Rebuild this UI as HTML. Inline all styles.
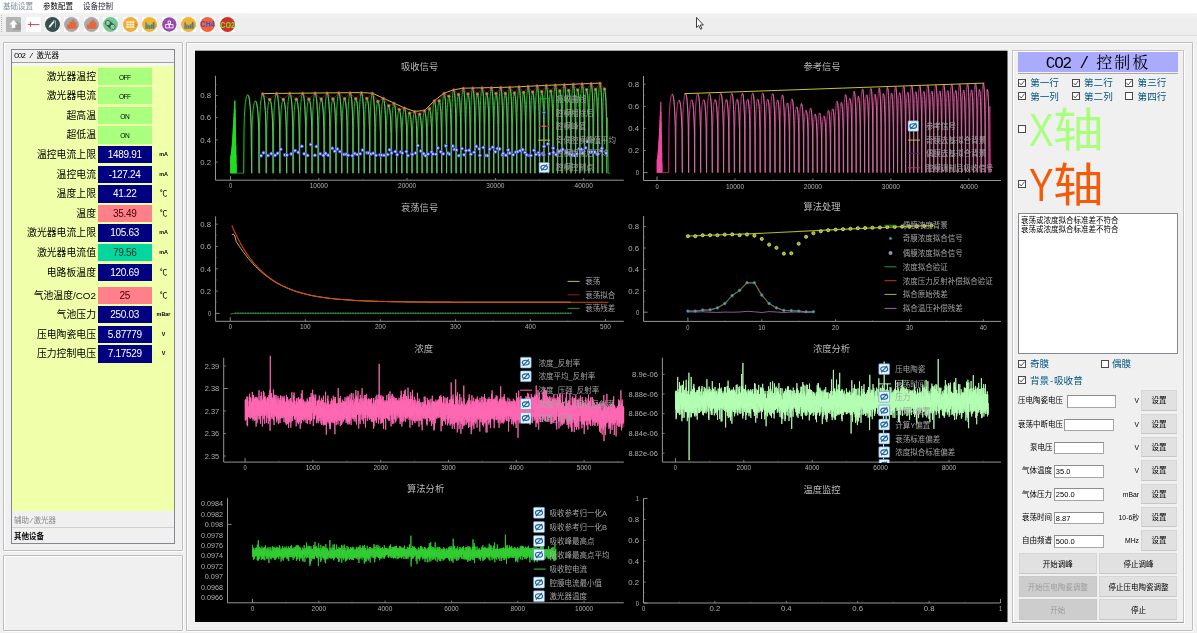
<!DOCTYPE html>
<html lang="zh"><head><meta charset="utf-8"><title>CO2</title><style>
*{box-sizing:border-box;margin:0;padding:0}
html,body{width:1197px;height:633px;overflow:hidden;background:#f0f0f0}
body{font-family:"Liberation Sans","Noto Sans CJK SC",sans-serif;color:#000;position:relative}
#root{position:absolute;left:0;top:0;width:1197px;height:633px;overflow:hidden;will-change:transform}
.a{position:absolute}
.menubar{left:0;top:0;width:1197px;height:12.5px;background:#fff}
.menu{top:0.5px;height:11px;line-height:11px;font-size:7.5px;white-space:nowrap}
.toolbar{left:0;top:12.5px;width:1197px;height:23.8px;background:linear-gradient(#f3f3f3,#eeeeee 25%,#ededed);border-bottom:1px solid #dedede}
.gb{border:1px solid #bdbdbd;box-shadow:inset 1px 1px 0 #fff, 1px 1px 0 #fff;border-radius:1px}
.tbx{border:1px solid #828790;background:#f0f0f0}
.hdr{left:12px;width:162px;height:13px;line-height:13px;font-size:7.5px;padding-left:2px;white-space:nowrap;font-family:"Liberation Mono","Noto Sans CJK SC",monospace}
.lab{right:1101px;height:17px;line-height:17px;font-size:9.85px;text-align:right;white-space:nowrap}
.val{left:97.5px;width:54.4px;height:17.3px;line-height:17.6px;text-align:center;font-size:10px;letter-spacing:-0.3px;white-space:nowrap}
.unit{left:156.5px;width:14px;height:17px;line-height:17.5px;font-size:5.4px;text-align:center;white-space:nowrap;font-weight:bold}
.navy{background:#000080;color:#fff}
.lg{background:#aaff7f;color:#000;font-size:6.6px;letter-spacing:-0.55px;line-height:19.5px}
.pk{background:#ff7f8a;color:#400}
.tl{background:#04d6a0;color:#032}
.cb{width:8px;height:8px;border:1px solid #4a4a4a;background:#fff}
.cbt{font-size:9.6px;line-height:11px;height:11px;color:#00557f;white-space:nowrap}
.btn{border:1px solid #d6d6d6;border-bottom-color:#c6c6c6;background:#e1e1e1;font-size:7.5px;text-align:center;white-space:nowrap;color:#000}
.btn.dis{color:#9a9a9a;background:#cdcdcd;border-color:#c8c8c8}
.inp{border:1px solid #a6a6a6;border-top-color:#8c8c8c;border-left-color:#949494;background:#fff;font-size:7.5px;line-height:11.4px;padding-left:1px;white-space:nowrap;height:12.6px}
.fl{font-size:7.5px;line-height:12px;height:12px;white-space:nowrap}
.fu{font-size:6.8px;line-height:12px;height:12px;white-space:nowrap;text-align:right}
</style></head><body><div id="root">
<div class="a menubar"></div>
<div class="a menu" style="left:3px;color:#7d8a9a">基础设置</div>
<div class="a menu" style="left:43px;color:#000">参数配置</div>
<div class="a menu" style="left:83px;color:#223">设备控制</div>
<div class="a toolbar"></div>
<div class="a" style="left:1px;top:15px;width:1px;height:18px;background:repeating-linear-gradient(#bbb 0 1px,transparent 1px 2px)"></div>
<svg class="a" style="left:6px;top:17px" width="15" height="15" viewBox="0 0 15 15"><rect width="15" height="15" rx="1" fill="#b4b4b4"/><path d="M7 13 L15 13 L15 7 L10 4Z" fill="#9c9c9c"/><path d="M7.5 3 L11.5 7.5 L9.3 7.5 L9.3 11 L5.7 11 L5.7 7.5 L3.5 7.5Z" fill="#fff"/></svg>
<svg class="a" style="left:25.5px;top:17px" width="15" height="15" viewBox="0 0 15 15"><rect width="15" height="15" fill="#fff"/><path d="M1.8 7.5 H13.4 M4.5 4.9 V10.1" stroke="#e02020" stroke-width="0.8" fill="none"/></svg>
<svg class="a" style="left:45px;top:17px" width="15" height="15" viewBox="0 0 15 15"><rect width="15" height="15" fill="#fff"/><circle cx="7.5" cy="7.5" r="7.5" fill="#35504e"/><path d="M3.6 11 L4.4 8.6 L8.2 3.9 L9.5 4.9 L5.7 9.8Z" fill="#fff"/><path d="M8 3.8 H10.5 V10.6" stroke="#e8eeee" stroke-width="0.6" fill="none"/></svg>
<svg class="a" style="left:64.3px;top:17px" width="15" height="15" viewBox="0 0 15 15"><rect width="15" height="15" fill="#fff"/><circle cx="7.5" cy="7.5" r="7.5" fill="#a9a9a9"/><path d="M3 11.7 L12.3 11.7 L14.6 9.5 L10 2.6Z" fill="#989898"/><rect x="2.9" y="7.5" width="2.2" height="4.2" fill="#f0683a"/><rect x="5.3" y="4.7" width="2.2" height="7" fill="#f0683a"/><rect x="7.7" y="2.6" width="2.2" height="9.1" fill="#f0683a"/><rect x="10.1" y="5.4" width="2.2" height="6.3" fill="#f0683a"/><path d="M5.2 7.5 V11.7 M7.6 4.7 V11.7 M10 5.4 V11.7" stroke="#c84a22" stroke-width="0.35"/></svg>
<svg class="a" style="left:83.8px;top:17px" width="15" height="15" viewBox="0 0 15 15"><rect width="15" height="15" fill="#fff"/><circle cx="7.5" cy="7.5" r="7.5" fill="#a9a9a9"/><path d="M3 11.7 L12.3 11.7 L14.6 9.5 L10 2.6Z" fill="#989898"/><rect x="2.9" y="7.5" width="2.2" height="4.2" fill="#f0683a"/><rect x="5.3" y="4.7" width="2.2" height="7" fill="#f0683a"/><rect x="7.7" y="2.6" width="2.2" height="9.1" fill="#f0683a"/><rect x="10.1" y="5.4" width="2.2" height="6.3" fill="#f0683a"/><path d="M5.2 7.5 V11.7 M7.6 4.7 V11.7 M10 5.4 V11.7" stroke="#c84a22" stroke-width="0.35"/></svg>
<svg class="a" style="left:103.2px;top:17px" width="15" height="15" viewBox="0 0 15 15"><rect width="15" height="15" fill="#fff"/><circle cx="7.5" cy="7.5" r="7.5" fill="#76c893"/><path d="M4.9 6.0 L9.6 9.9" stroke="#2a6446" stroke-width="5.6" stroke-linecap="round"/><circle cx="4.9" cy="6.0" r="2.1" fill="#c8ead6"/><circle cx="4.9" cy="6.0" r="1.35" fill="none" stroke="#2f6b4a" stroke-width="0.7" stroke-dasharray="0.7 0.7"/><circle cx="4.9" cy="6.0" r="0.45" fill="#2f6b4a"/><circle cx="9.6" cy="9.9" r="2.1" fill="#c8ead6"/><circle cx="9.6" cy="9.9" r="1.35" fill="none" stroke="#2f6b4a" stroke-width="0.7" stroke-dasharray="0.7 0.7"/><circle cx="9.6" cy="9.9" r="0.45" fill="#2f6b4a"/></svg>
<svg class="a" style="left:122.6px;top:17px" width="15" height="15" viewBox="0 0 15 15"><rect width="15" height="15" fill="#fff"/><circle cx="7.5" cy="7.5" r="7.5" fill="#f0ad3c"/><path d="M3.5 10.9 L11.4 10.9 L14.8 8 L11.4 4.2Z" fill="#d39327"/><rect x="3.5" y="4.2" width="7.9" height="6.7" fill="#fff4dc"/><path d="M3.5 6.45 H11.4 M3.5 8.7 H11.4 M6.15 4.2 V10.9 M8.8 4.2 V10.9" stroke="#f0ad3c" stroke-width="0.7"/></svg>
<svg class="a" style="left:142px;top:17px" width="15" height="15" viewBox="0 0 15 15"><rect width="15" height="15" fill="#fff"/><circle cx="7.5" cy="7.5" r="7.5" fill="#f0b432"/><path d="M3.2 11.7 L12.4 11.7 L14.8 9.6 L12.3 5Z" fill="#cf9a28"/><rect x="3.4" y="5.4" width="1.4" height="6.3" fill="#3f7f9a"/><rect x="5.2" y="7.5" width="1.4" height="4.2" fill="#3f7f9a"/><rect x="7.1" y="8.3" width="1.4" height="3.4" fill="#3f7f9a"/><rect x="9.1" y="7.5" width="1.4" height="4.2" fill="#3f7f9a"/><rect x="10.9" y="5" width="1.4" height="6.7" fill="#3f7f9a"/></svg>
<svg class="a" style="left:161.6px;top:17px" width="15" height="15" viewBox="0 0 15 15"><rect width="15" height="15" fill="#fff"/><circle cx="7.3" cy="7.5" r="7.2" fill="#9a46b0"/><path d="M6.1 4 H8.5 V6.9 H6.1Z M3.6 7.5 H7.3 V10.9 H3.6Z M7.3 7.5 H11 V10.9 H7.3Z" fill="none" stroke="#fff" stroke-width="0.85"/></svg>
<svg class="a" style="left:180.8px;top:17px" width="15" height="15" viewBox="0 0 15 15"><rect width="15" height="15" fill="#fff"/><circle cx="7.5" cy="7.5" r="7.5" fill="#f0b432"/><path d="M3.2 11.7 L12.4 11.7 L14.8 9.6 L12.3 5Z" fill="#cf9a28"/><rect x="3.4" y="5.4" width="1.4" height="6.3" fill="#3f7f9a"/><rect x="5.2" y="7.5" width="1.4" height="4.2" fill="#3f7f9a"/><rect x="7.1" y="8.3" width="1.4" height="3.4" fill="#3f7f9a"/><rect x="9.1" y="7.5" width="1.4" height="4.2" fill="#3f7f9a"/><rect x="10.9" y="5" width="1.4" height="6.7" fill="#3f7f9a"/></svg>
<svg class="a" style="left:200.2px;top:17px" width="15" height="15" viewBox="0 0 15 15"><rect width="15" height="15" fill="#fff"/><circle cx="7.5" cy="7.5" r="7.5" fill="#f0643c"/><text x="7.6" y="10.4" font-size="8.4" font-weight="bold" text-anchor="middle" fill="#4450c8" font-family="Liberation Sans,sans-serif" textLength="14" lengthAdjust="spacingAndGlyphs">CH4</text></svg>
<svg class="a" style="left:219.6px;top:17px" width="15" height="15" viewBox="0 0 15 15"><rect width="15" height="15" fill="#fff"/><circle cx="7.5" cy="7.5" r="7.5" fill="#d03028"/><text x="7.6" y="10.9" font-size="9.4" font-weight="bold" text-anchor="middle" fill="#70f030" font-family="Liberation Sans,sans-serif" textLength="14.6" lengthAdjust="spacingAndGlyphs">CO2</text></svg>
<svg class="a" style="left:695.6px;top:16.6px;overflow:visible" width="9" height="13" viewBox="0 0 9 13"><path d="M0.5 0.5 L0.5 10.6 L2.8 8.5 L4.5 12.2 L5.9 11.6 L4.2 8 L7.4 8 Z" fill="#fff" stroke="#111" stroke-width="0.8" stroke-linejoin="round"/></svg>
<div class="a gb" style="left:3px;top:42px;width:180px;height:509px"></div>
<div class="a gb" style="left:3px;top:555px;width:180px;height:76px"></div>
<div class="a gb" style="left:186px;top:42px;width:1007px;height:589px"></div>
<div class="a tbx" style="left:11px;top:49px;width:164px;height:495px"></div>
<div class="a hdr" style="top:50px;border-bottom:1px solid #a0a0a0;height:13px"><span style="letter-spacing:-0.75px">CO2 / </span>激光器</div>
<div class="a" style="left:12px;top:63px;width:162px;height:3px;background:#f6f6f6"></div>
<div class="a" style="left:12px;top:66px;width:162px;height:445px;background:#efffaa"></div>
<div class="a hdr" style="top:513px;color:#888;border-bottom:1px solid #d0d0d0;height:15px;line-height:17px">辅助/激光器</div>
<div class="a hdr" style="top:529px;height:14px;line-height:17.5px;font-weight:bold">其他设备</div>
<div class="a lab" style="top:67.50px">激光器温控</div>
<div class="a val lg" style="top:67.50px">OFF</div>
<div class="a lab" style="top:87.12px">激光器电流</div>
<div class="a val lg" style="top:87.12px">OFF</div>
<div class="a lab" style="top:106.74px">超高温</div>
<div class="a val lg" style="top:106.74px">ON</div>
<div class="a lab" style="top:126.36px">超低温</div>
<div class="a val lg" style="top:126.36px">ON</div>
<div class="a lab" style="top:145.98px">温控电流上限</div>
<div class="a val navy" style="top:145.98px">1489.91</div>
<div class="a unit" style="top:145.98px">mA</div>
<div class="a lab" style="top:165.60px">温控电流</div>
<div class="a val navy" style="top:165.60px">-127.24</div>
<div class="a unit" style="top:165.60px">mA</div>
<div class="a lab" style="top:185.22px">温度上限</div>
<div class="a val navy" style="top:185.22px">41.22</div>
<div class="a unit" style="top:185.22px;font-size:7.6px;font-weight:normal">℃</div>
<div class="a lab" style="top:204.84px">温度</div>
<div class="a val pk" style="top:204.84px">35.49</div>
<div class="a unit" style="top:204.84px;font-size:7.6px;font-weight:normal">℃</div>
<div class="a lab" style="top:224.46px">激光器电流上限</div>
<div class="a val navy" style="top:224.46px">105.63</div>
<div class="a unit" style="top:224.46px">mA</div>
<div class="a lab" style="top:244.08px">激光器电流值</div>
<div class="a val tl" style="top:244.08px">79.56</div>
<div class="a unit" style="top:244.08px">mA</div>
<div class="a lab" style="top:263.70px">电路板温度</div>
<div class="a val navy" style="top:263.70px">120.69</div>
<div class="a unit" style="top:263.70px;font-size:7.6px;font-weight:normal">℃</div>
<div class="a lab" style="top:286.50px">气池温度/CO2</div>
<div class="a val pk" style="top:286.50px">25</div>
<div class="a unit" style="top:286.50px;font-size:7.6px;font-weight:normal">℃</div>
<div class="a lab" style="top:306.12px">气池压力</div>
<div class="a val navy" style="top:306.12px">250.03</div>
<div class="a unit" style="top:306.12px">mBar</div>
<div class="a lab" style="top:325.74px">压电陶瓷电压</div>
<div class="a val navy" style="top:325.74px">5.87779</div>
<div class="a unit" style="top:325.74px">V</div>
<div class="a lab" style="top:345.36px">压力控制电压</div>
<div class="a val navy" style="top:345.36px">7.17529</div>
<div class="a unit" style="top:345.36px">V</div>
<svg class="a" style="left:0;top:0" width="1197" height="633" viewBox="0 0 1197 633"><rect x="195" y="50.7" width="812.5" height="571.3" fill="#000"/><text x="419.6" y="69.8" text-anchor="middle" font-size="9.3" fill="#bcbcbc" font-family="Liberation Sans, Noto Sans CJK SC, sans-serif">吸收信号</text>
<polyline points="230.5,173.2 230.6,156.6 230.7,173.2 230.8,156.1 230.9,173.2 231,155.3 231.1,173.2 231.2,154.1 231.3,173.2 231.3,152.6 231.4,173.2 231.5,151 231.6,173.2 231.7,149.1 231.8,173.2 231.9,147 232,173.2 232.1,144.7 232.2,173.2 232.3,142.2 232.4,173.2 232.5,139.6 232.6,173.2 232.7,136.8 232.8,173.2 232.9,133.9 233,173.2 233.1,130.8 233.2,173.2 233.2,127.5 233.3,173.2 233.4,124.2 233.5,173.2 233.6,120.6 233.7,173.2 233.8,117 233.9,173.2 234,113.2 234.1,173.2 234.2,109.3 234.3,173.2 234.4,105.2 234.5,173.2 234.6,101.1 234.7,173.2 234.8,101.1 234.9,173.2 235,99.9 235.1,173.2 235.2,109.1 235.2,173.2 235.3,118.3 235.4,173.2 235.5,127.4 235.6,173.2 235.7,136.6 235.8,173.2 235.9,145.7 236,173.2 236.1,154.9 236.2,173.2 236.3,164 236.4,173.2 236.5,173.2" fill="none" stroke="#22e022" stroke-width="0.42"/>
<path d="M236.5 173.2 H243.6" stroke="#1a9a1a" stroke-width="0.9"/>
<polyline points="244.4,173.2 244.8,128.3 245.1,117.7 245.5,110.9 245.8,106.1 246.2,102.5 246.6,99.8 246.9,97.9 247.3,96.5 247.7,95.6 248,95.1 248.4,94.9 248.7,95.1 249.1,95.6 249.5,96.5 249.8,97.9 250.2,99.8 250.5,102.5 250.9,106.1 251.3,110.9 251.6,117.7 252,128.3 252.4,173.2 252.4,173.2 252.7,131.8 253,122 253.4,115.8 253.7,111.3 254.1,108 254.4,105.6 254.8,103.7 255.1,102.5 255.4,101.6 255.8,101.2 256.1,101.1 256.5,101.2 256.8,101.6 257.2,102.5 257.5,103.7 257.8,105.6 258.2,108 258.5,111.3 258.9,115.8 259.2,122 259.6,131.8 259.9,173.2 259.9,173.2 260.2,128 260.6,117.3 260.9,110.5 261.2,105.6 261.5,102 261.9,99.3 262.2,97.3 262.5,95.9 262.8,95 263.2,94.5 263.5,94.4 263.8,94.5 264.1,95 264.5,95.9 264.8,97.3 265.1,99.3 265.4,102 265.7,105.6 266.1,110.5 266.4,117.3 266.7,128 267,173.2 267,173.2 267.4,131.2 267.7,121.3 268,115 268.3,110.5 268.6,107.2 268.9,104.7 269.2,102.8 269.6,101.5 269.9,100.7 270.2,100.2 270.5,100.1 270.8,100.2 271.1,100.7 271.4,101.5 271.8,102.8 272.1,104.7 272.4,107.2 272.7,110.5 273,115 273.3,121.3 273.6,131.2 273.9,173.2 273.9,173.2 274.3,127.9 274.6,117.2 274.9,110.4 275.2,105.5 275.5,101.9 275.8,99.2 276.1,97.2 276.4,95.8 276.7,94.9 277,94.4 277.3,94.2 277.6,94.4 278,94.9 278.3,95.8 278.6,97.2 278.9,99.2 279.2,101.9 279.5,105.5 279.8,110.4 280.1,117.2 280.4,127.9 280.7,173.2 280.7,173.2 281,131.1 281.3,121.2 281.6,114.9 281.9,110.4 282.2,107 282.5,104.5 282.8,102.7 283.1,101.4 283.4,100.5 283.7,100.1 284.1,99.9 284.4,100.1 284.7,100.5 285,101.4 285.3,102.7 285.6,104.5 285.9,107 286.2,110.4 286.5,114.9 286.8,121.2 287.1,131.1 287.4,173.2 287.4,173.2 287.7,127.8 288,117.1 288.3,110.3 288.6,105.4 288.9,101.8 289.2,99.1 289.5,97.1 289.8,95.6 290.1,94.7 290.3,94.2 290.6,94.1 290.9,94.2 291.2,94.7 291.5,95.6 291.8,97.1 292.1,99.1 292.4,101.8 292.7,105.4 293,110.3 293.3,117.1 293.6,127.8 293.9,173.2 293.9,173.2 294.2,131.1 294.5,121.1 294.8,114.8 295.1,110.3 295.4,106.9 295.7,104.4 296,102.6 296.2,101.2 296.5,100.4 296.8,99.9 297.1,99.8 297.4,99.9 297.7,100.4 298,101.2 298.3,102.6 298.6,104.4 298.9,106.9 299.2,110.3 299.5,114.8 299.7,121.1 300,131.1 300.3,173.2 300.3,173.2 300.6,127.7 300.9,117 301.2,110.2 301.5,105.3 301.8,101.7 302.1,98.9 302.3,96.9 302.6,95.5 302.9,94.6 303.2,94.1 303.5,94 303.8,94.1 304.1,94.6 304.3,95.5 304.6,96.9 304.9,98.9 305.2,101.7 305.5,105.3 305.8,110.2 306.1,117 306.4,127.7 306.6,173.2 306.6,173.2 306.9,131 307.2,121 307.5,114.7 307.8,110.2 308,106.8 308.3,104.3 308.6,102.4 308.9,101.1 309.2,100.3 309.5,99.8 309.7,99.7 310,99.8 310.3,100.3 310.6,101.1 310.9,102.4 311.2,104.3 311.4,106.8 311.7,110.2 312,114.7 312.3,121 312.6,131 312.8,173.2 312.8,173.2 313.1,127.6 313.4,116.9 313.7,110.1 314,105.2 314.2,101.5 314.5,98.8 314.8,96.8 315.1,95.4 315.3,94.5 315.6,94 315.9,93.8 316.2,94 316.5,94.5 316.7,95.4 317,96.8 317.3,98.8 317.6,101.5 317.8,105.2 318.1,110.1 318.4,116.9 318.7,127.6 319,173.2 319,173.2 319.2,130.9 319.5,121 319.8,114.6 320.1,110.1 320.3,106.7 320.6,104.2 320.9,102.3 321.2,101 321.4,100.1 321.7,99.7 322,99.6 322.2,99.7 322.5,100.1 322.8,101 323.1,102.3 323.3,104.2 323.6,106.7 323.9,110.1 324.2,114.6 324.4,121 324.7,130.9 325,173.2 325,173.2 325.3,127.6 325.5,116.8 325.8,110 326.1,105.1 326.3,101.4 326.6,98.7 326.9,96.7 327.1,95.3 327.4,94.4 327.7,93.9 327.9,93.7 328.2,93.9 328.5,94.4 328.8,95.3 329,96.7 329.3,98.7 329.6,101.4 329.8,105.1 330.1,110 330.4,116.8 330.6,127.6 330.9,173.2 330.9,173.2 331.2,130.9 331.4,120.9 331.7,114.5 332,110 332.2,106.6 332.5,104.1 332.8,102.2 333,100.9 333.3,100 333.6,99.6 333.8,99.4 334.1,99.6 334.4,100 334.6,100.9 334.9,102.2 335.2,104.1 335.4,106.6 335.7,110 336,114.5 336.2,120.9 336.5,130.9 336.8,173.2 336.8,173.2 337,127.5 337.3,116.7 337.5,109.9 337.8,105 338.1,101.3 338.3,98.6 338.6,96.6 338.9,95.2 339.1,94.2 339.4,93.7 339.6,93.6 339.9,93.7 340.2,94.2 340.4,95.2 340.7,96.6 340.9,98.6 341.2,101.3 341.5,105 341.7,109.9 342,116.7 342.3,127.5 342.5,173.2 342.5,173.2 342.8,130.8 343,120.8 343.3,114.4 343.5,109.9 343.8,106.5 344.1,103.9 344.3,102.1 344.6,100.8 344.8,99.9 345.1,99.4 345.4,99.3 345.6,99.4 345.9,99.9 346.1,100.8 346.4,102.1 346.6,103.9 346.9,106.5 347.2,109.9 347.4,114.4 347.7,120.8 347.9,130.8 348.2,173.2 348.2,173.2 348.5,127.4 348.7,116.7 349,109.8 349.2,104.9 349.5,101.2 349.7,98.5 350,96.5 350.2,95 350.5,94.1 350.8,93.6 351,93.5 351.3,93.6 351.5,94.1 351.8,95 352,96.5 352.3,98.5 352.6,101.2 352.8,104.9 353.1,109.8 353.3,116.7 353.6,127.4 353.8,173.2 353.8,173.2 354.1,130.7 354.3,120.7 354.6,114.3 354.9,109.8 355.1,106.4 355.4,103.8 355.6,102 355.9,100.6 356.1,99.8 356.4,99.3 356.6,99.2 356.9,99.3 357.1,99.8 357.4,100.6 357.7,102 357.9,103.8 358.2,106.4 358.4,109.8 358.7,114.3 358.9,120.7 359.2,130.7 359.4,173.2 359.4,173.2 359.7,127.4 359.9,116.6 360.2,109.7 360.4,104.8 360.7,101.1 361,98.4 361.2,96.4 361.5,94.9 361.7,94 362,93.5 362.2,93.4 362.5,93.5 362.7,94 363,94.9 363.2,96.4 363.5,98.4 363.7,101.1 364,104.8 364.2,109.7 364.5,116.6 364.7,127.4 365,173.2 365,173.2 365.2,130.6 365.5,120.6 365.7,114.2 366,109.6 366.2,106.2 366.5,103.7 366.7,101.8 367,100.5 367.2,99.6 367.5,99.1 367.7,99 368,99.1 368.2,99.6 368.5,100.5 368.7,101.8 369,103.7 369.3,106.2 369.5,109.6 369.8,114.2 370,120.6 370.3,130.6 370.5,173.2 370.5,173.2 370.8,127.7 371,117 371.3,110.2 371.5,105.3 371.7,101.7 372,99 372.2,97 372.5,95.5 372.7,94.6 373,94.1 373.2,94 373.5,94.1 373.7,94.6 374,95.5 374.2,97 374.5,99 374.7,101.7 375,105.3 375.2,110.2 375.5,117 375.7,127.7 376,173.2 376,173.2 376.2,132.3 376.5,122.7 376.7,116.5 377,112.1 377.2,108.9 377.5,106.4 377.7,104.6 378,103.3 378.2,102.5 378.4,102.1 378.7,101.9 378.9,102.1 379.2,102.5 379.4,103.3 379.7,104.6 379.9,106.4 380.2,108.9 380.4,112.1 380.7,116.5 380.9,122.7 381.2,132.3 381.4,173.2 381.4,173.2 381.7,130.6 381.9,120.6 382.1,114.2 382.4,109.6 382.6,106.2 382.9,103.6 383.1,101.8 383.4,100.4 383.6,99.6 383.9,99.1 384.1,99 384.3,99.1 384.6,99.6 384.8,100.4 385.1,101.8 385.3,103.6 385.6,106.2 385.8,109.6 386.1,114.2 386.3,120.6 386.6,130.6 386.8,173.2 386.8,173.2 387,134.8 387.3,125.7 387.5,119.9 387.8,115.8 388,112.8 388.2,110.5 388.5,108.8 388.7,107.6 389,106.8 389.2,106.4 389.5,106.3 389.7,106.4 389.9,106.8 390.2,107.6 390.4,108.8 390.7,110.5 390.9,112.8 391.2,115.8 391.4,119.9 391.6,125.7 391.9,134.8 392.1,173.2 392.1,173.2 392.4,133.4 392.6,124 392.8,118.1 393.1,113.8 393.3,110.6 393.6,108.2 393.8,106.5 394,105.3 394.3,104.4 394.5,104 394.8,103.9 395,104 395.2,104.4 395.5,105.3 395.7,106.5 396,108.2 396.2,110.6 396.4,113.8 396.7,118.1 396.9,124 397.2,133.4 397.4,173.2 397.4,173.2 397.6,136.9 397.9,128.4 398.1,123 398.3,119.1 398.6,116.2 398.8,114 399,112.4 399.3,111.3 399.5,110.5 399.8,110.2 400,110 400.2,110.2 400.5,110.5 400.7,111.3 400.9,112.4 401.2,114 401.4,116.2 401.7,119.1 401.9,123 402.1,128.4 402.4,136.9 402.6,173.2 402.6,173.2 402.8,136.2 403.1,127.4 403.3,121.9 403.5,117.9 403.8,114.9 404,112.7 404.2,111.1 404.5,109.9 404.7,109.2 404.9,108.8 405.2,108.7 405.4,108.8 405.6,109.2 405.9,109.9 406.1,111.1 406.3,112.7 406.6,114.9 406.8,117.9 407,121.9 407.3,127.4 407.5,136.2 407.7,173.2 407.7,173.2 408,139.1 408.2,131 408.4,125.9 408.7,122.2 408.9,119.5 409.1,117.4 409.4,115.9 409.6,114.9 409.8,114.2 410.1,113.8 410.3,113.7 410.5,113.8 410.8,114.2 411,114.9 411.2,115.9 411.5,117.4 411.7,119.5 411.9,122.2 412.1,125.9 412.4,131 412.6,139.1 412.8,173.2 412.8,173.2 413.1,138.2 413.3,129.9 413.5,124.7 413.8,120.9 414,118.1 414.2,116 414.4,114.5 414.7,113.4 414.9,112.7 415.1,112.3 415.4,112.2 415.6,112.3 415.8,112.7 416,113.4 416.3,114.5 416.5,116 416.7,118.1 417,120.9 417.2,124.7 417.4,129.9 417.6,138.2 417.9,173.2 417.9,173.2 418.1,139.6 418.3,131.7 418.6,126.7 418.8,123.1 419,120.4 419.2,118.4 419.5,116.9 419.7,115.9 419.9,115.2 420.1,114.8 420.4,114.7 420.6,114.8 420.8,115.2 421,115.9 421.3,116.9 421.5,118.4 421.7,120.4 421.9,123.1 422.2,126.7 422.4,131.7 422.6,139.6 422.9,173.2 422.9,173.2 423.1,137.7 423.3,129.3 423.5,123.9 423.7,120.1 424,117.3 424.2,115.2 424.4,113.6 424.6,112.5 424.9,111.8 425.1,111.4 425.3,111.3 425.5,111.4 425.8,111.8 426,112.5 426.2,113.6 426.4,115.2 426.7,117.3 426.9,120.1 427.1,123.9 427.3,129.3 427.6,137.7 427.8,173.2 427.8,173.2 428,136.4 428.2,127.8 428.5,122.3 428.7,118.3 428.9,115.4 429.1,113.2 429.3,111.6 429.6,110.4 429.8,109.7 430,109.3 430.2,109.2 430.5,109.3 430.7,109.7 430.9,110.4 431.1,111.6 431.4,113.2 431.6,115.4 431.8,118.3 432,122.3 432.3,127.8 432.5,136.4 432.7,173.2 432.7,173.2 432.9,132.1 433.1,122.4 433.4,116.2 433.6,111.7 433.8,108.5 434,106 434.3,104.2 434.5,102.9 434.7,102.1 434.9,101.6 435.1,101.5 435.4,101.6 435.6,102.1 435.8,102.9 436,104.2 436.3,106 436.5,108.5 436.7,111.7 436.9,116.2 437.1,122.4 437.4,132.1 437.6,173.2 437.6,173.2 437.8,131.9 438,122.2 438.2,115.9 438.5,111.5 438.7,108.2 438.9,105.7 439.1,103.9 439.4,102.6 439.6,101.8 439.8,101.4 440,101.2 440.2,101.4 440.5,101.8 440.7,102.6 440.9,103.9 441.1,105.7 441.3,108.2 441.6,111.5 441.8,115.9 442,122.2 442.2,131.9 442.4,173.2 442.4,173.2 442.7,127.7 442.9,117 443.1,110.1 443.3,105.3 443.5,101.6 443.8,98.9 444,96.9 444.2,95.5 444.4,94.6 444.6,94.1 444.9,93.9 445.1,94.1 445.3,94.6 445.5,95.5 445.7,96.9 446,98.9 446.2,101.6 446.4,105.3 446.6,110.1 446.8,117 447.1,127.7 447.3,173.2 447.3,173.2 447.5,129.4 447.7,119 447.9,112.4 448.2,107.7 448.4,104.2 448.6,101.6 448.8,99.7 449,98.3 449.3,97.4 449.5,97 449.7,96.8 449.9,97 450.1,97.4 450.4,98.3 450.6,99.7 450.8,101.6 451,104.2 451.2,107.7 451.4,112.4 451.7,119 451.9,129.4 452.1,173.2 452.1,173.2 452.3,125.8 452.5,114.6 452.8,107.4 453,102.4 453.2,98.6 453.4,95.7 453.6,93.6 453.8,92.2 454.1,91.2 454.3,90.7 454.5,90.6 454.7,90.7 454.9,91.2 455.2,92.2 455.4,93.6 455.6,95.7 455.8,98.6 456,102.4 456.2,107.4 456.5,114.6 456.7,125.8 456.9,173.2 456.9,173.2 457.1,128.3 457.3,117.7 457.5,111 457.8,106.1 458,102.6 458.2,99.9 458.4,97.9 458.6,96.5 458.8,95.6 459.1,95.1 459.3,95 459.5,95.1 459.7,95.6 459.9,96.5 460.2,97.9 460.4,99.9 460.6,102.6 460.8,106.1 461,111 461.2,117.7 461.5,128.3 461.7,173.2 461.7,173.2 461.9,124.9 462.1,113.5 462.3,106.2 462.5,101 462.7,97.2 463,94.3 463.2,92.2 463.4,90.7 463.6,89.7 463.8,89.2 464,89 464.3,89.2 464.5,89.7 464.7,90.7 464.9,92.2 465.1,94.3 465.3,97.2 465.6,101 465.8,106.2 466,113.5 466.2,124.9 466.4,173.2 466.4,173.2 466.6,128.1 466.8,117.4 467.1,110.6 467.3,105.8 467.5,102.2 467.7,99.5 467.9,97.5 468.1,96.1 468.4,95.2 468.6,94.7 468.8,94.6 469,94.7 469.2,95.2 469.4,96.1 469.6,97.5 469.9,99.5 470.1,102.2 470.3,105.8 470.5,110.6 470.7,117.4 470.9,128.1 471.1,173.2 471.1,173.2 471.4,124.8 471.6,113.3 471.8,106.1 472,100.9 472.2,97 472.4,94.1 472.6,92 472.9,90.5 473.1,89.5 473.3,89 473.5,88.8 473.7,89 473.9,89.5 474.1,90.5 474.4,92 474.6,94.1 474.8,97 475,100.9 475.2,106.1 475.4,113.3 475.6,124.8 475.9,173.2 475.9,173.2 476.1,128 476.3,117.3 476.5,110.6 476.7,105.7 476.9,102.1 477.1,99.4 477.4,97.4 477.6,96 477.8,95.1 478,94.6 478.2,94.5 478.4,94.6 478.6,95.1 478.8,96 479.1,97.4 479.3,99.4 479.5,102.1 479.7,105.7 479.9,110.6 480.1,117.3 480.3,128 480.6,173.2 480.6,173.2 480.8,124.6 481,113.2 481.2,105.9 481.4,100.7 481.6,96.8 481.8,93.9 482,91.8 482.3,90.3 482.5,89.3 482.7,88.8 482.9,88.6 483.1,88.8 483.3,89.3 483.5,90.3 483.7,91.8 484,93.9 484.2,96.8 484.4,100.7 484.6,105.9 484.8,113.2 485,124.6 485.2,173.2 485.2,173.2 485.4,127.9 485.7,117.2 485.9,110.4 486.1,105.6 486.3,101.9 486.5,99.2 486.7,97.2 486.9,95.8 487.1,94.9 487.3,94.4 487.6,94.3 487.8,94.4 488,94.9 488.2,95.8 488.4,97.2 488.6,99.2 488.8,101.9 489,105.6 489.3,110.4 489.5,117.2 489.7,127.9 489.9,173.2 489.9,173.2 490.1,124.5 490.3,113.1 490.5,105.7 490.7,100.5 490.9,96.6 491.2,93.7 491.4,91.6 491.6,90.1 491.8,89.1 492,88.6 492.2,88.4 492.4,88.6 492.6,89.1 492.8,90.1 493,91.6 493.3,93.7 493.5,96.6 493.7,100.5 493.9,105.7 494.1,113.1 494.3,124.5 494.5,173.2 494.5,173.2 494.7,127.8 494.9,117.1 495.2,110.3 495.4,105.4 495.6,101.8 495.8,99.1 496,97.1 496.2,95.6 496.4,94.7 496.6,94.2 496.8,94.1 497,94.2 497.3,94.7 497.5,95.6 497.7,97.1 497.9,99.1 498.1,101.8 498.3,105.4 498.5,110.3 498.7,117.1 498.9,127.8 499.2,173.2 499.2,173.2 499.4,124.4 499.6,112.9 499.8,105.6 500,100.4 500.2,96.5 500.4,93.6 500.6,91.4 500.8,89.9 501,88.9 501.2,88.4 501.5,88.2 501.7,88.4 501.9,88.9 502.1,89.9 502.3,91.4 502.5,93.6 502.7,96.5 502.9,100.4 503.1,105.6 503.3,112.9 503.5,124.4 503.8,173.2 503.8,173.2 504,127.7 504.2,117 504.4,110.1 504.6,105.2 504.8,101.6 505,98.9 505.2,96.9 505.4,95.5 505.6,94.5 505.8,94 506.1,93.9 506.3,94 506.5,94.5 506.7,95.5 506.9,96.9 507.1,98.9 507.3,101.6 507.5,105.2 507.7,110.1 507.9,117 508.1,127.7 508.4,173.2 508.4,173.2 508.6,124.3 508.8,112.8 509,105.4 509.2,100.2 509.4,96.3 509.6,93.3 509.8,91.2 510,89.7 510.2,88.7 510.4,88.1 510.6,88 510.9,88.1 511.1,88.7 511.3,89.7 511.5,91.2 511.7,93.3 511.9,96.3 512.1,100.2 512.3,105.4 512.5,112.8 512.7,124.3 512.9,173.2 512.9,173.2 513.1,127.5 513.4,116.7 513.6,109.8 513.8,104.9 514,101.3 514.2,98.5 514.4,96.5 514.6,95.1 514.8,94.2 515,93.7 515.2,93.5 515.4,93.7 515.6,94.2 515.8,95.1 516.1,96.5 516.3,98.5 516.5,101.3 516.7,104.9 516.9,109.8 517.1,116.7 517.3,127.5 517.5,173.2 517.5,173.2 517.7,124 517.9,112.4 518.1,105 518.3,99.8 518.6,95.8 518.8,92.9 519,90.7 519.2,89.2 519.4,88.2 519.6,87.7 519.8,87.5 520,87.7 520.2,88.2 520.4,89.2 520.6,90.7 520.8,92.9 521,95.8 521.2,99.8 521.5,105 521.7,112.4 521.9,124 522.1,173.2 522.1,173.2 522.3,127.2 522.5,116.4 522.7,109.5 522.9,104.5 523.1,100.9 523.3,98.1 523.5,96.1 523.7,94.6 523.9,93.7 524.2,93.2 524.4,93.1 524.6,93.2 524.8,93.7 525,94.6 525.2,96.1 525.4,98.1 525.6,100.9 525.8,104.5 526,109.5 526.2,116.4 526.4,127.2 526.6,173.2 526.6,173.2 526.8,123.8 527.1,112.1 527.3,104.7 527.5,99.4 527.7,95.4 527.9,92.5 528.1,90.3 528.3,88.8 528.5,87.8 528.7,87.2 528.9,87.1 529.1,87.2 529.3,87.8 529.5,88.8 529.7,90.3 529.9,92.5 530.2,95.4 530.4,99.4 530.6,104.7 530.8,112.1 531,123.8 531.2,173.2 531.2,173.2 531.4,126.9 531.6,116 531.8,109.1 532,104.1 532.2,100.4 532.4,97.7 532.6,95.6 532.8,94.2 533,93.3 533.3,92.8 533.5,92.6 533.7,92.8 533.9,93.3 534.1,94.2 534.3,95.6 534.5,97.7 534.7,100.4 534.9,104.1 535.1,109.1 535.3,116 535.5,126.9 535.7,173.2 535.7,173.2 535.9,123.5 536.1,111.8 536.3,104.3 536.6,99 536.8,95 537,92.1 537.2,89.9 537.4,88.3 537.6,87.3 537.8,86.8 538,86.6 538.2,86.8 538.4,87.3 538.6,88.3 538.8,89.9 539,92.1 539.2,95 539.4,99 539.6,104.3 539.9,111.8 540.1,123.5 540.3,173.2 540.3,173.2 540.5,126.7 540.7,115.7 540.9,108.7 541.1,103.7 541.3,100 541.5,97.2 541.7,95.2 541.9,93.8 542.1,92.8 542.3,92.3 542.5,92.2 542.7,92.3 542.9,92.8 543.1,93.8 543.3,95.2 543.6,97.2 543.8,100 544,103.7 544.2,108.7 544.4,115.7 544.6,126.7 544.8,173.2 544.8,173.2 545,123.2 545.2,111.5 545.4,104 545.6,98.6 545.8,94.6 546,91.6 546.2,89.4 546.4,87.9 546.6,86.9 546.8,86.3 547,86.2 547.3,86.3 547.5,86.9 547.7,87.9 547.9,89.4 548.1,91.6 548.3,94.6 548.5,98.6 548.7,104 548.9,111.5 549.1,123.2 549.3,173.2 549.3,173.2 549.5,126.4 549.7,115.4 549.9,108.4 550.1,103.4 550.3,99.6 550.5,96.8 550.7,94.8 550.9,93.3 551.1,92.4 551.4,91.9 551.6,91.7 551.8,91.9 552,92.4 552.2,93.3 552.4,94.8 552.6,96.8 552.8,99.6 553,103.4 553.2,108.4 553.4,115.4 553.6,126.4 553.8,173.2 553.8,173.2 554,123 554.2,111.2 554.4,103.6 554.6,98.3 554.8,94.3 555,91.3 555.2,89 555.4,87.5 555.7,86.5 555.9,85.9 556.1,85.8 556.3,85.9 556.5,86.5 556.7,87.5 556.9,89 557.1,91.3 557.3,94.3 557.5,98.3 557.7,103.6 557.9,111.2 558.1,123 558.3,173.2 558.3,173.2 558.5,126.2 558.7,115.1 558.9,108.1 559.1,103 559.3,99.3 559.5,96.5 559.7,94.4 559.9,93 560.1,92 560.4,91.5 560.6,91.4 560.8,91.5 561,92 561.2,93 561.4,94.4 561.6,96.5 561.8,99.3 562,103 562.2,108.1 562.4,115.1 562.6,126.2 562.8,173.2 562.8,173.2 563,122.8 563.2,110.9 563.4,103.3 563.6,97.9 563.8,93.9 564,90.9 564.2,88.7 564.4,87.1 564.6,86.1 564.8,85.5 565.1,85.4 565.3,85.5 565.5,86.1 565.7,87.1 565.9,88.7 566.1,90.9 566.3,93.9 566.5,97.9 566.7,103.3 566.9,110.9 567.1,122.8 567.3,173.2 567.3,173.2 567.5,126 567.7,114.9 567.9,107.8 568.1,102.7 568.3,99 568.5,96.1 568.7,94.1 568.9,92.6 569.1,91.6 569.3,91.1 569.5,91 569.7,91.1 569.9,91.6 570.2,92.6 570.4,94.1 570.6,96.1 570.8,99 571,102.7 571.2,107.8 571.4,114.9 571.6,126 571.8,173.2 571.8,173.2 572,122.6 572.2,110.7 572.4,103 572.6,97.6 572.8,93.6 573,90.5 573.2,88.3 573.4,86.7 573.6,85.7 573.8,85.2 574,85 574.2,85.2 574.4,85.7 574.6,86.7 574.8,88.3 575,90.5 575.2,93.6 575.4,97.6 575.7,103 575.9,110.7 576.1,122.6 576.3,173.2 576.3,173.2 576.5,125.8 576.7,114.6 576.9,107.5 577.1,102.4 577.3,98.6 577.5,95.8 577.7,93.7 577.9,92.2 578.1,91.3 578.3,90.7 578.5,90.6 578.7,90.7 578.9,91.3 579.1,92.2 579.3,93.7 579.5,95.8 579.7,98.6 579.9,102.4 580.1,107.5 580.3,114.6 580.5,125.8 580.7,173.2 580.7,173.2 580.9,122.4 581.1,110.4 581.3,102.7 581.6,97.3 581.8,93.2 582,90.2 582.2,88 582.4,86.4 582.6,85.3 582.8,84.8 583,84.6 583.2,84.8 583.4,85.3 583.6,86.4 583.8,88 584,90.2 584.2,93.2 584.4,97.3 584.6,102.7 584.8,110.4 585,122.4 585.2,173.2 585.2,173.2 585.4,125.6 585.6,114.3 585.8,107.2 586,102.1 586.2,98.3 586.4,95.4 586.6,93.3 586.8,91.9 587,90.9 587.2,90.4 587.4,90.2 587.6,90.4 587.9,90.9 588.1,91.9 588.3,93.3 588.5,95.4 588.7,98.3 588.9,102.1 589.1,107.2 589.3,114.3 589.5,125.6 589.7,173.2 589.7,173.2 589.9,122.2 590.1,110.1 590.3,102.4 590.5,97 590.7,92.9 590.9,89.8 591.1,87.6 591.3,86 591.5,85 591.7,84.4 591.9,84.3 592.1,84.4 592.3,85 592.5,86 592.7,87.6 592.9,89.8 593.1,92.9 593.3,97 593.5,102.4 593.7,110.1 593.9,122.2 594.1,173.2 594.1,173.2 594.3,125.4 594.5,114.1 594.7,106.9 595,101.8 595.2,97.9 595.4,95.1 595.6,93 595.8,91.5 596,90.5 596.2,90 596.4,89.9 596.6,90 596.8,90.5 597,91.5 597.2,93 597.4,95.1 597.6,97.9 597.8,101.8 598,106.9 598.2,114.1 598.4,125.4 598.6,173.2 598.6,173.2 598.8,121.9 599,109.9 599.2,102.1 599.4,96.6 599.6,92.6 599.8,89.5 600,87.2 600.2,85.6 600.4,84.6 600.6,84.1 600.8,83.9 601,84.1 601.2,84.6 601.4,85.6 601.6,87.2 601.8,89.5 602,92.6 602.2,96.6 602.4,102.1 602.6,109.9 602.8,121.9 603.1,173.2 603.1,173.2 603.3,125.2 603.5,113.9 603.7,106.7 603.9,101.5 604.1,97.7 604.3,94.9 604.5,92.7 604.7,91.2 604.9,90.3 605.1,89.8 605.3,89.6 605.5,89.8 605.7,90.3 605.9,91.2 606.1,92.7 606.3,94.9 606.5,97.7 606.7,101.5 606.9,106.7 607.1,113.9 607.3,125.2 607.5,173.2" fill="none" stroke="#0a4a0a" stroke-opacity="0.55" stroke-width="1.0" stroke-linejoin="round"/>
<polyline points="243.6,173.2 244,128.3 244.3,117.7 244.7,110.9 245,106.1 245.4,102.5 245.8,99.8 246.1,97.9 246.5,96.5 246.9,95.6 247.2,95.1 247.6,94.9 247.9,95.1 248.3,95.6 248.7,96.5 249,97.9 249.4,99.8 249.7,102.5 250.1,106.1 250.5,110.9 250.8,117.7 251.2,128.3 251.6,173.2 251.6,173.2 251.9,131.8 252.2,122 252.6,115.8 252.9,111.3 253.3,108 253.6,105.6 254,103.7 254.3,102.5 254.6,101.6 255,101.2 255.3,101.1 255.7,101.2 256,101.6 256.4,102.5 256.7,103.7 257,105.6 257.4,108 257.7,111.3 258.1,115.8 258.4,122 258.8,131.8 259.1,173.2 259.1,173.2 259.4,128 259.8,117.3 260.1,110.5 260.4,105.6 260.7,102 261.1,99.3 261.4,97.3 261.7,95.9 262,95 262.4,94.5 262.7,94.4 263,94.5 263.3,95 263.7,95.9 264,97.3 264.3,99.3 264.6,102 264.9,105.6 265.3,110.5 265.6,117.3 265.9,128 266.2,173.2 266.2,173.2 266.6,131.2 266.9,121.3 267.2,115 267.5,110.5 267.8,107.2 268.1,104.7 268.4,102.8 268.8,101.5 269.1,100.7 269.4,100.2 269.7,100.1 270,100.2 270.3,100.7 270.6,101.5 271,102.8 271.3,104.7 271.6,107.2 271.9,110.5 272.2,115 272.5,121.3 272.8,131.2 273.1,173.2 273.1,173.2 273.5,127.9 273.8,117.2 274.1,110.4 274.4,105.5 274.7,101.9 275,99.2 275.3,97.2 275.6,95.8 275.9,94.9 276.2,94.4 276.5,94.2 276.8,94.4 277.2,94.9 277.5,95.8 277.8,97.2 278.1,99.2 278.4,101.9 278.7,105.5 279,110.4 279.3,117.2 279.6,127.9 279.9,173.2 279.9,173.2 280.2,131.1 280.5,121.2 280.8,114.9 281.1,110.4 281.4,107 281.7,104.5 282,102.7 282.3,101.4 282.6,100.5 282.9,100.1 283.3,99.9 283.6,100.1 283.9,100.5 284.2,101.4 284.5,102.7 284.8,104.5 285.1,107 285.4,110.4 285.7,114.9 286,121.2 286.3,131.1 286.6,173.2 286.6,173.2 286.9,127.8 287.2,117.1 287.5,110.3 287.8,105.4 288.1,101.8 288.4,99.1 288.7,97.1 289,95.6 289.3,94.7 289.5,94.2 289.8,94.1 290.1,94.2 290.4,94.7 290.7,95.6 291,97.1 291.3,99.1 291.6,101.8 291.9,105.4 292.2,110.3 292.5,117.1 292.8,127.8 293.1,173.2 293.1,173.2 293.4,131.1 293.7,121.1 294,114.8 294.3,110.3 294.6,106.9 294.9,104.4 295.2,102.6 295.4,101.2 295.7,100.4 296,99.9 296.3,99.8 296.6,99.9 296.9,100.4 297.2,101.2 297.5,102.6 297.8,104.4 298.1,106.9 298.4,110.3 298.7,114.8 298.9,121.1 299.2,131.1 299.5,173.2 299.5,173.2 299.8,127.7 300.1,117 300.4,110.2 300.7,105.3 301,101.7 301.3,98.9 301.5,96.9 301.8,95.5 302.1,94.6 302.4,94.1 302.7,94 303,94.1 303.3,94.6 303.5,95.5 303.8,96.9 304.1,98.9 304.4,101.7 304.7,105.3 305,110.2 305.3,117 305.6,127.7 305.8,173.2 305.8,173.2 306.1,131 306.4,121 306.7,114.7 307,110.2 307.2,106.8 307.5,104.3 307.8,102.4 308.1,101.1 308.4,100.3 308.7,99.8 308.9,99.7 309.2,99.8 309.5,100.3 309.8,101.1 310.1,102.4 310.4,104.3 310.6,106.8 310.9,110.2 311.2,114.7 311.5,121 311.8,131 312,173.2 312,173.2 312.3,127.6 312.6,116.9 312.9,110.1 313.2,105.2 313.4,101.5 313.7,98.8 314,96.8 314.3,95.4 314.5,94.5 314.8,94 315.1,93.8 315.4,94 315.7,94.5 315.9,95.4 316.2,96.8 316.5,98.8 316.8,101.5 317,105.2 317.3,110.1 317.6,116.9 317.9,127.6 318.2,173.2 318.2,173.2 318.4,130.9 318.7,121 319,114.6 319.3,110.1 319.5,106.7 319.8,104.2 320.1,102.3 320.4,101 320.6,100.1 320.9,99.7 321.2,99.6 321.4,99.7 321.7,100.1 322,101 322.3,102.3 322.5,104.2 322.8,106.7 323.1,110.1 323.4,114.6 323.6,121 323.9,130.9 324.2,173.2 324.2,173.2 324.5,127.6 324.7,116.8 325,110 325.3,105.1 325.5,101.4 325.8,98.7 326.1,96.7 326.3,95.3 326.6,94.4 326.9,93.9 327.1,93.7 327.4,93.9 327.7,94.4 328,95.3 328.2,96.7 328.5,98.7 328.8,101.4 329,105.1 329.3,110 329.6,116.8 329.8,127.6 330.1,173.2 330.1,173.2 330.4,130.9 330.6,120.9 330.9,114.5 331.2,110 331.4,106.6 331.7,104.1 332,102.2 332.2,100.9 332.5,100 332.8,99.6 333,99.4 333.3,99.6 333.6,100 333.8,100.9 334.1,102.2 334.4,104.1 334.6,106.6 334.9,110 335.2,114.5 335.4,120.9 335.7,130.9 336,173.2 336,173.2 336.2,127.5 336.5,116.7 336.7,109.9 337,105 337.3,101.3 337.5,98.6 337.8,96.6 338.1,95.2 338.3,94.2 338.6,93.7 338.8,93.6 339.1,93.7 339.4,94.2 339.6,95.2 339.9,96.6 340.1,98.6 340.4,101.3 340.7,105 340.9,109.9 341.2,116.7 341.5,127.5 341.7,173.2 341.7,173.2 342,130.8 342.2,120.8 342.5,114.4 342.7,109.9 343,106.5 343.3,103.9 343.5,102.1 343.8,100.8 344,99.9 344.3,99.4 344.6,99.3 344.8,99.4 345.1,99.9 345.3,100.8 345.6,102.1 345.8,103.9 346.1,106.5 346.4,109.9 346.6,114.4 346.9,120.8 347.1,130.8 347.4,173.2 347.4,173.2 347.7,127.4 347.9,116.7 348.2,109.8 348.4,104.9 348.7,101.2 348.9,98.5 349.2,96.5 349.4,95 349.7,94.1 350,93.6 350.2,93.5 350.5,93.6 350.7,94.1 351,95 351.2,96.5 351.5,98.5 351.8,101.2 352,104.9 352.3,109.8 352.5,116.7 352.8,127.4 353,173.2 353,173.2 353.3,130.7 353.5,120.7 353.8,114.3 354.1,109.8 354.3,106.4 354.6,103.8 354.8,102 355.1,100.6 355.3,99.8 355.6,99.3 355.8,99.2 356.1,99.3 356.3,99.8 356.6,100.6 356.9,102 357.1,103.8 357.4,106.4 357.6,109.8 357.9,114.3 358.1,120.7 358.4,130.7 358.6,173.2 358.6,173.2 358.9,127.4 359.1,116.6 359.4,109.7 359.6,104.8 359.9,101.1 360.2,98.4 360.4,96.4 360.7,94.9 360.9,94 361.2,93.5 361.4,93.4 361.7,93.5 361.9,94 362.2,94.9 362.4,96.4 362.7,98.4 362.9,101.1 363.2,104.8 363.4,109.7 363.7,116.6 363.9,127.4 364.2,173.2 364.2,173.2 364.4,130.6 364.7,120.6 364.9,114.2 365.2,109.6 365.4,106.2 365.7,103.7 365.9,101.8 366.2,100.5 366.4,99.6 366.7,99.1 366.9,99 367.2,99.1 367.4,99.6 367.7,100.5 367.9,101.8 368.2,103.7 368.5,106.2 368.7,109.6 369,114.2 369.2,120.6 369.5,130.6 369.7,173.2 369.7,173.2 370,127.7 370.2,117 370.5,110.2 370.7,105.3 370.9,101.7 371.2,99 371.4,97 371.7,95.5 371.9,94.6 372.2,94.1 372.4,94 372.7,94.1 372.9,94.6 373.2,95.5 373.4,97 373.7,99 373.9,101.7 374.2,105.3 374.4,110.2 374.7,117 374.9,127.7 375.2,173.2 375.2,173.2 375.4,132.3 375.7,122.7 375.9,116.5 376.2,112.1 376.4,108.9 376.7,106.4 376.9,104.6 377.2,103.3 377.4,102.5 377.6,102.1 377.9,101.9 378.1,102.1 378.4,102.5 378.6,103.3 378.9,104.6 379.1,106.4 379.4,108.9 379.6,112.1 379.9,116.5 380.1,122.7 380.4,132.3 380.6,173.2 380.6,173.2 380.9,130.6 381.1,120.6 381.3,114.2 381.6,109.6 381.8,106.2 382.1,103.6 382.3,101.8 382.6,100.4 382.8,99.6 383.1,99.1 383.3,99 383.5,99.1 383.8,99.6 384,100.4 384.3,101.8 384.5,103.6 384.8,106.2 385,109.6 385.3,114.2 385.5,120.6 385.8,130.6 386,173.2 386,173.2 386.2,134.8 386.5,125.7 386.7,119.9 387,115.8 387.2,112.8 387.4,110.5 387.7,108.8 387.9,107.6 388.2,106.8 388.4,106.4 388.7,106.3 388.9,106.4 389.1,106.8 389.4,107.6 389.6,108.8 389.9,110.5 390.1,112.8 390.4,115.8 390.6,119.9 390.8,125.7 391.1,134.8 391.3,173.2 391.3,173.2 391.6,133.4 391.8,124 392,118.1 392.3,113.8 392.5,110.6 392.8,108.2 393,106.5 393.2,105.3 393.5,104.4 393.7,104 394,103.9 394.2,104 394.4,104.4 394.7,105.3 394.9,106.5 395.2,108.2 395.4,110.6 395.6,113.8 395.9,118.1 396.1,124 396.4,133.4 396.6,173.2 396.6,173.2 396.8,136.9 397.1,128.4 397.3,123 397.5,119.1 397.8,116.2 398,114 398.2,112.4 398.5,111.3 398.7,110.5 399,110.2 399.2,110 399.4,110.2 399.7,110.5 399.9,111.3 400.1,112.4 400.4,114 400.6,116.2 400.9,119.1 401.1,123 401.3,128.4 401.6,136.9 401.8,173.2 401.8,173.2 402,136.2 402.3,127.4 402.5,121.9 402.7,117.9 403,114.9 403.2,112.7 403.4,111.1 403.7,109.9 403.9,109.2 404.1,108.8 404.4,108.7 404.6,108.8 404.8,109.2 405.1,109.9 405.3,111.1 405.5,112.7 405.8,114.9 406,117.9 406.2,121.9 406.5,127.4 406.7,136.2 406.9,173.2 406.9,173.2 407.2,139.1 407.4,131 407.6,125.9 407.9,122.2 408.1,119.5 408.3,117.4 408.6,115.9 408.8,114.9 409,114.2 409.3,113.8 409.5,113.7 409.7,113.8 410,114.2 410.2,114.9 410.4,115.9 410.7,117.4 410.9,119.5 411.1,122.2 411.3,125.9 411.6,131 411.8,139.1 412,173.2 412,173.2 412.3,138.2 412.5,129.9 412.7,124.7 413,120.9 413.2,118.1 413.4,116 413.6,114.5 413.9,113.4 414.1,112.7 414.3,112.3 414.6,112.2 414.8,112.3 415,112.7 415.2,113.4 415.5,114.5 415.7,116 415.9,118.1 416.2,120.9 416.4,124.7 416.6,129.9 416.8,138.2 417.1,173.2 417.1,173.2 417.3,139.6 417.5,131.7 417.8,126.7 418,123.1 418.2,120.4 418.4,118.4 418.7,116.9 418.9,115.9 419.1,115.2 419.3,114.8 419.6,114.7 419.8,114.8 420,115.2 420.2,115.9 420.5,116.9 420.7,118.4 420.9,120.4 421.1,123.1 421.4,126.7 421.6,131.7 421.8,139.6 422.1,173.2 422.1,173.2 422.3,137.7 422.5,129.3 422.7,123.9 422.9,120.1 423.2,117.3 423.4,115.2 423.6,113.6 423.8,112.5 424.1,111.8 424.3,111.4 424.5,111.3 424.7,111.4 425,111.8 425.2,112.5 425.4,113.6 425.6,115.2 425.9,117.3 426.1,120.1 426.3,123.9 426.5,129.3 426.8,137.7 427,173.2 427,173.2 427.2,136.4 427.4,127.8 427.7,122.3 427.9,118.3 428.1,115.4 428.3,113.2 428.5,111.6 428.8,110.4 429,109.7 429.2,109.3 429.4,109.2 429.7,109.3 429.9,109.7 430.1,110.4 430.3,111.6 430.6,113.2 430.8,115.4 431,118.3 431.2,122.3 431.5,127.8 431.7,136.4 431.9,173.2 431.9,173.2 432.1,132.1 432.3,122.4 432.6,116.2 432.8,111.7 433,108.5 433.2,106 433.5,104.2 433.7,102.9 433.9,102.1 434.1,101.6 434.3,101.5 434.6,101.6 434.8,102.1 435,102.9 435.2,104.2 435.5,106 435.7,108.5 435.9,111.7 436.1,116.2 436.3,122.4 436.6,132.1 436.8,173.2 436.8,173.2 437,131.9 437.2,122.2 437.4,115.9 437.7,111.5 437.9,108.2 438.1,105.7 438.3,103.9 438.6,102.6 438.8,101.8 439,101.4 439.2,101.2 439.4,101.4 439.7,101.8 439.9,102.6 440.1,103.9 440.3,105.7 440.5,108.2 440.8,111.5 441,115.9 441.2,122.2 441.4,131.9 441.6,173.2 441.6,173.2 441.9,127.7 442.1,117 442.3,110.1 442.5,105.3 442.7,101.6 443,98.9 443.2,96.9 443.4,95.5 443.6,94.6 443.8,94.1 444.1,93.9 444.3,94.1 444.5,94.6 444.7,95.5 444.9,96.9 445.2,98.9 445.4,101.6 445.6,105.3 445.8,110.1 446,117 446.3,127.7 446.5,173.2 446.5,173.2 446.7,129.4 446.9,119 447.1,112.4 447.4,107.7 447.6,104.2 447.8,101.6 448,99.7 448.2,98.3 448.5,97.4 448.7,97 448.9,96.8 449.1,97 449.3,97.4 449.6,98.3 449.8,99.7 450,101.6 450.2,104.2 450.4,107.7 450.6,112.4 450.9,119 451.1,129.4 451.3,173.2 451.3,173.2 451.5,125.8 451.7,114.6 452,107.4 452.2,102.4 452.4,98.6 452.6,95.7 452.8,93.6 453,92.2 453.3,91.2 453.5,90.7 453.7,90.6 453.9,90.7 454.1,91.2 454.4,92.2 454.6,93.6 454.8,95.7 455,98.6 455.2,102.4 455.4,107.4 455.7,114.6 455.9,125.8 456.1,173.2 456.1,173.2 456.3,128.3 456.5,117.7 456.7,111 457,106.1 457.2,102.6 457.4,99.9 457.6,97.9 457.8,96.5 458,95.6 458.3,95.1 458.5,95 458.7,95.1 458.9,95.6 459.1,96.5 459.4,97.9 459.6,99.9 459.8,102.6 460,106.1 460.2,111 460.4,117.7 460.7,128.3 460.9,173.2 460.9,173.2 461.1,124.9 461.3,113.5 461.5,106.2 461.7,101 461.9,97.2 462.2,94.3 462.4,92.2 462.6,90.7 462.8,89.7 463,89.2 463.2,89 463.5,89.2 463.7,89.7 463.9,90.7 464.1,92.2 464.3,94.3 464.5,97.2 464.8,101 465,106.2 465.2,113.5 465.4,124.9 465.6,173.2 465.6,173.2 465.8,128.1 466,117.4 466.3,110.6 466.5,105.8 466.7,102.2 466.9,99.5 467.1,97.5 467.3,96.1 467.6,95.2 467.8,94.7 468,94.6 468.2,94.7 468.4,95.2 468.6,96.1 468.8,97.5 469.1,99.5 469.3,102.2 469.5,105.8 469.7,110.6 469.9,117.4 470.1,128.1 470.3,173.2 470.3,173.2 470.6,124.8 470.8,113.3 471,106.1 471.2,100.9 471.4,97 471.6,94.1 471.8,92 472.1,90.5 472.3,89.5 472.5,89 472.7,88.8 472.9,89 473.1,89.5 473.3,90.5 473.6,92 473.8,94.1 474,97 474.2,100.9 474.4,106.1 474.6,113.3 474.8,124.8 475.1,173.2 475.1,173.2 475.3,128 475.5,117.3 475.7,110.6 475.9,105.7 476.1,102.1 476.3,99.4 476.6,97.4 476.8,96 477,95.1 477.2,94.6 477.4,94.5 477.6,94.6 477.8,95.1 478,96 478.3,97.4 478.5,99.4 478.7,102.1 478.9,105.7 479.1,110.6 479.3,117.3 479.5,128 479.8,173.2 479.8,173.2 480,124.6 480.2,113.2 480.4,105.9 480.6,100.7 480.8,96.8 481,93.9 481.2,91.8 481.5,90.3 481.7,89.3 481.9,88.8 482.1,88.6 482.3,88.8 482.5,89.3 482.7,90.3 482.9,91.8 483.2,93.9 483.4,96.8 483.6,100.7 483.8,105.9 484,113.2 484.2,124.6 484.4,173.2 484.4,173.2 484.6,127.9 484.9,117.2 485.1,110.4 485.3,105.6 485.5,101.9 485.7,99.2 485.9,97.2 486.1,95.8 486.3,94.9 486.5,94.4 486.8,94.3 487,94.4 487.2,94.9 487.4,95.8 487.6,97.2 487.8,99.2 488,101.9 488.2,105.6 488.5,110.4 488.7,117.2 488.9,127.9 489.1,173.2 489.1,173.2 489.3,124.5 489.5,113.1 489.7,105.7 489.9,100.5 490.1,96.6 490.4,93.7 490.6,91.6 490.8,90.1 491,89.1 491.2,88.6 491.4,88.4 491.6,88.6 491.8,89.1 492,90.1 492.2,91.6 492.5,93.7 492.7,96.6 492.9,100.5 493.1,105.7 493.3,113.1 493.5,124.5 493.7,173.2 493.7,173.2 493.9,127.8 494.1,117.1 494.4,110.3 494.6,105.4 494.8,101.8 495,99.1 495.2,97.1 495.4,95.6 495.6,94.7 495.8,94.2 496,94.1 496.2,94.2 496.5,94.7 496.7,95.6 496.9,97.1 497.1,99.1 497.3,101.8 497.5,105.4 497.7,110.3 497.9,117.1 498.1,127.8 498.4,173.2 498.4,173.2 498.6,124.4 498.8,112.9 499,105.6 499.2,100.4 499.4,96.5 499.6,93.6 499.8,91.4 500,89.9 500.2,88.9 500.4,88.4 500.7,88.2 500.9,88.4 501.1,88.9 501.3,89.9 501.5,91.4 501.7,93.6 501.9,96.5 502.1,100.4 502.3,105.6 502.5,112.9 502.7,124.4 503,173.2 503,173.2 503.2,127.7 503.4,117 503.6,110.1 503.8,105.2 504,101.6 504.2,98.9 504.4,96.9 504.6,95.5 504.8,94.5 505,94 505.3,93.9 505.5,94 505.7,94.5 505.9,95.5 506.1,96.9 506.3,98.9 506.5,101.6 506.7,105.2 506.9,110.1 507.1,117 507.3,127.7 507.6,173.2 507.6,173.2 507.8,124.3 508,112.8 508.2,105.4 508.4,100.2 508.6,96.3 508.8,93.3 509,91.2 509.2,89.7 509.4,88.7 509.6,88.1 509.8,88 510.1,88.1 510.3,88.7 510.5,89.7 510.7,91.2 510.9,93.3 511.1,96.3 511.3,100.2 511.5,105.4 511.7,112.8 511.9,124.3 512.1,173.2 512.1,173.2 512.3,127.5 512.6,116.7 512.8,109.8 513,104.9 513.2,101.3 513.4,98.5 513.6,96.5 513.8,95.1 514,94.2 514.2,93.7 514.4,93.5 514.6,93.7 514.8,94.2 515,95.1 515.3,96.5 515.5,98.5 515.7,101.3 515.9,104.9 516.1,109.8 516.3,116.7 516.5,127.5 516.7,173.2 516.7,173.2 516.9,124 517.1,112.4 517.3,105 517.5,99.8 517.8,95.8 518,92.9 518.2,90.7 518.4,89.2 518.6,88.2 518.8,87.7 519,87.5 519.2,87.7 519.4,88.2 519.6,89.2 519.8,90.7 520,92.9 520.2,95.8 520.4,99.8 520.7,105 520.9,112.4 521.1,124 521.3,173.2 521.3,173.2 521.5,127.2 521.7,116.4 521.9,109.5 522.1,104.5 522.3,100.9 522.5,98.1 522.7,96.1 522.9,94.6 523.1,93.7 523.4,93.2 523.6,93.1 523.8,93.2 524,93.7 524.2,94.6 524.4,96.1 524.6,98.1 524.8,100.9 525,104.5 525.2,109.5 525.4,116.4 525.6,127.2 525.8,173.2 525.8,173.2 526,123.8 526.3,112.1 526.5,104.7 526.7,99.4 526.9,95.4 527.1,92.5 527.3,90.3 527.5,88.8 527.7,87.8 527.9,87.2 528.1,87.1 528.3,87.2 528.5,87.8 528.7,88.8 528.9,90.3 529.1,92.5 529.4,95.4 529.6,99.4 529.8,104.7 530,112.1 530.2,123.8 530.4,173.2 530.4,173.2 530.6,126.9 530.8,116 531,109.1 531.2,104.1 531.4,100.4 531.6,97.7 531.8,95.6 532,94.2 532.2,93.3 532.5,92.8 532.7,92.6 532.9,92.8 533.1,93.3 533.3,94.2 533.5,95.6 533.7,97.7 533.9,100.4 534.1,104.1 534.3,109.1 534.5,116 534.7,126.9 534.9,173.2 534.9,173.2 535.1,123.5 535.3,111.8 535.5,104.3 535.8,99 536,95 536.2,92.1 536.4,89.9 536.6,88.3 536.8,87.3 537,86.8 537.2,86.6 537.4,86.8 537.6,87.3 537.8,88.3 538,89.9 538.2,92.1 538.4,95 538.6,99 538.8,104.3 539.1,111.8 539.3,123.5 539.5,173.2 539.5,173.2 539.7,126.7 539.9,115.7 540.1,108.7 540.3,103.7 540.5,100 540.7,97.2 540.9,95.2 541.1,93.8 541.3,92.8 541.5,92.3 541.7,92.2 541.9,92.3 542.1,92.8 542.3,93.8 542.5,95.2 542.8,97.2 543,100 543.2,103.7 543.4,108.7 543.6,115.7 543.8,126.7 544,173.2 544,173.2 544.2,123.2 544.4,111.5 544.6,104 544.8,98.6 545,94.6 545.2,91.6 545.4,89.4 545.6,87.9 545.8,86.9 546,86.3 546.2,86.2 546.5,86.3 546.7,86.9 546.9,87.9 547.1,89.4 547.3,91.6 547.5,94.6 547.7,98.6 547.9,104 548.1,111.5 548.3,123.2 548.5,173.2 548.5,173.2 548.7,126.4 548.9,115.4 549.1,108.4 549.3,103.4 549.5,99.6 549.7,96.8 549.9,94.8 550.1,93.3 550.3,92.4 550.6,91.9 550.8,91.7 551,91.9 551.2,92.4 551.4,93.3 551.6,94.8 551.8,96.8 552,99.6 552.2,103.4 552.4,108.4 552.6,115.4 552.8,126.4 553,173.2 553,173.2 553.2,123 553.4,111.2 553.6,103.6 553.8,98.3 554,94.3 554.2,91.3 554.4,89 554.6,87.5 554.9,86.5 555.1,85.9 555.3,85.8 555.5,85.9 555.7,86.5 555.9,87.5 556.1,89 556.3,91.3 556.5,94.3 556.7,98.3 556.9,103.6 557.1,111.2 557.3,123 557.5,173.2 557.5,173.2 557.7,126.2 557.9,115.1 558.1,108.1 558.3,103 558.5,99.3 558.7,96.5 558.9,94.4 559.1,93 559.3,92 559.6,91.5 559.8,91.4 560,91.5 560.2,92 560.4,93 560.6,94.4 560.8,96.5 561,99.3 561.2,103 561.4,108.1 561.6,115.1 561.8,126.2 562,173.2 562,173.2 562.2,122.8 562.4,110.9 562.6,103.3 562.8,97.9 563,93.9 563.2,90.9 563.4,88.7 563.6,87.1 563.8,86.1 564,85.5 564.3,85.4 564.5,85.5 564.7,86.1 564.9,87.1 565.1,88.7 565.3,90.9 565.5,93.9 565.7,97.9 565.9,103.3 566.1,110.9 566.3,122.8 566.5,173.2 566.5,173.2 566.7,126 566.9,114.9 567.1,107.8 567.3,102.7 567.5,99 567.7,96.1 567.9,94.1 568.1,92.6 568.3,91.6 568.5,91.1 568.7,91 568.9,91.1 569.1,91.6 569.4,92.6 569.6,94.1 569.8,96.1 570,99 570.2,102.7 570.4,107.8 570.6,114.9 570.8,126 571,173.2 571,173.2 571.2,122.6 571.4,110.7 571.6,103 571.8,97.6 572,93.6 572.2,90.5 572.4,88.3 572.6,86.7 572.8,85.7 573,85.2 573.2,85 573.4,85.2 573.6,85.7 573.8,86.7 574,88.3 574.2,90.5 574.4,93.6 574.6,97.6 574.9,103 575.1,110.7 575.3,122.6 575.5,173.2 575.5,173.2 575.7,125.8 575.9,114.6 576.1,107.5 576.3,102.4 576.5,98.6 576.7,95.8 576.9,93.7 577.1,92.2 577.3,91.3 577.5,90.7 577.7,90.6 577.9,90.7 578.1,91.3 578.3,92.2 578.5,93.7 578.7,95.8 578.9,98.6 579.1,102.4 579.3,107.5 579.5,114.6 579.7,125.8 579.9,173.2 579.9,173.2 580.1,122.4 580.3,110.4 580.5,102.7 580.8,97.3 581,93.2 581.2,90.2 581.4,88 581.6,86.4 581.8,85.3 582,84.8 582.2,84.6 582.4,84.8 582.6,85.3 582.8,86.4 583,88 583.2,90.2 583.4,93.2 583.6,97.3 583.8,102.7 584,110.4 584.2,122.4 584.4,173.2 584.4,173.2 584.6,125.6 584.8,114.3 585,107.2 585.2,102.1 585.4,98.3 585.6,95.4 585.8,93.3 586,91.9 586.2,90.9 586.4,90.4 586.6,90.2 586.8,90.4 587.1,90.9 587.3,91.9 587.5,93.3 587.7,95.4 587.9,98.3 588.1,102.1 588.3,107.2 588.5,114.3 588.7,125.6 588.9,173.2 588.9,173.2 589.1,122.2 589.3,110.1 589.5,102.4 589.7,97 589.9,92.9 590.1,89.8 590.3,87.6 590.5,86 590.7,85 590.9,84.4 591.1,84.3 591.3,84.4 591.5,85 591.7,86 591.9,87.6 592.1,89.8 592.3,92.9 592.5,97 592.7,102.4 592.9,110.1 593.1,122.2 593.3,173.2 593.3,173.2 593.5,125.4 593.7,114.1 593.9,106.9 594.2,101.8 594.4,97.9 594.6,95.1 594.8,93 595,91.5 595.2,90.5 595.4,90 595.6,89.9 595.8,90 596,90.5 596.2,91.5 596.4,93 596.6,95.1 596.8,97.9 597,101.8 597.2,106.9 597.4,114.1 597.6,125.4 597.8,173.2 597.8,173.2 598,121.9 598.2,109.9 598.4,102.1 598.6,96.6 598.8,92.6 599,89.5 599.2,87.2 599.4,85.6 599.6,84.6 599.8,84.1 600,83.9 600.2,84.1 600.4,84.6 600.6,85.6 600.8,87.2 601,89.5 601.2,92.6 601.4,96.6 601.6,102.1 601.8,109.9 602,121.9 602.3,173.2 602.3,173.2 602.5,125.2 602.7,113.9 602.9,106.7 603.1,101.5 603.3,97.7 603.5,94.9 603.7,92.7 603.9,91.2 604.1,90.3 604.3,89.8 604.5,89.6 604.7,89.8 604.9,90.3 605.1,91.2 605.3,92.7 605.5,94.9 605.7,97.7 605.9,101.5 606.1,106.7 606.3,113.9 606.5,125.2 606.7,173.2" fill="none" stroke="#1cba1c" stroke-width="1" stroke-linejoin="round"/>
<path d="M247.6 94.9 L247.9 95.1 L248.3 95.6 L248.7 96.5 L249 97.9 L249.4 99.8 L249.7 102.5 L250.1 106.1 L250.5 110.9 L250.8 117.7 L251.2 128.3 L251.6 173.2 M255.3 101.1 L255.7 101.2 L256 101.6 L256.4 102.5 L256.7 103.7 L257 105.6 L257.4 108 L257.7 111.3 L258.1 115.8 L258.4 122 L258.8 131.8 L259.1 173.2 M262.7 94.4 L263 94.5 L263.3 95 L263.7 95.9 L264 97.3 L264.3 99.3 L264.6 102 L264.9 105.6 L265.3 110.5 L265.6 117.3 L265.9 128 L266.2 173.2 M269.7 100.1 L270 100.2 L270.3 100.7 L270.6 101.5 L271 102.8 L271.3 104.7 L271.6 107.2 L271.9 110.5 L272.2 115 L272.5 121.3 L272.8 131.2 L273.1 173.2 M276.5 94.2 L276.8 94.4 L277.2 94.9 L277.5 95.8 L277.8 97.2 L278.1 99.2 L278.4 101.9 L278.7 105.5 L279 110.4 L279.3 117.2 L279.6 127.9 L279.9 173.2 M283.3 99.9 L283.6 100.1 L283.9 100.5 L284.2 101.4 L284.5 102.7 L284.8 104.5 L285.1 107 L285.4 110.4 L285.7 114.9 L286 121.2 L286.3 131.1 L286.6 173.2 M289.8 94.1 L290.1 94.2 L290.4 94.7 L290.7 95.6 L291 97.1 L291.3 99.1 L291.6 101.8 L291.9 105.4 L292.2 110.3 L292.5 117.1 L292.8 127.8 L293.1 173.2 M296.3 99.8 L296.6 99.9 L296.9 100.4 L297.2 101.2 L297.5 102.6 L297.8 104.4 L298.1 106.9 L298.4 110.3 L298.7 114.8 L298.9 121.1 L299.2 131.1 L299.5 173.2 M302.7 94 L303 94.1 L303.3 94.6 L303.5 95.5 L303.8 96.9 L304.1 98.9 L304.4 101.7 L304.7 105.3 L305 110.2 L305.3 117 L305.6 127.7 L305.8 173.2 M308.9 99.7 L309.2 99.8 L309.5 100.3 L309.8 101.1 L310.1 102.4 L310.4 104.3 L310.6 106.8 L310.9 110.2 L311.2 114.7 L311.5 121 L311.8 131 L312 173.2 M315.1 93.8 L315.4 94 L315.7 94.5 L315.9 95.4 L316.2 96.8 L316.5 98.8 L316.8 101.5 L317 105.2 L317.3 110.1 L317.6 116.9 L317.9 127.6 L318.2 173.2 M321.2 99.6 L321.4 99.7 L321.7 100.1 L322 101 L322.3 102.3 L322.5 104.2 L322.8 106.7 L323.1 110.1 L323.4 114.6 L323.6 121 L323.9 130.9 L324.2 173.2 M327.1 93.7 L327.4 93.9 L327.7 94.4 L328 95.3 L328.2 96.7 L328.5 98.7 L328.8 101.4 L329 105.1 L329.3 110 L329.6 116.8 L329.8 127.6 L330.1 173.2 M333 99.4 L333.3 99.6 L333.6 100 L333.8 100.9 L334.1 102.2 L334.4 104.1 L334.6 106.6 L334.9 110 L335.2 114.5 L335.4 120.9 L335.7 130.9 L336 173.2 M338.8 93.6 L339.1 93.7 L339.4 94.2 L339.6 95.2 L339.9 96.6 L340.1 98.6 L340.4 101.3 L340.7 105 L340.9 109.9 L341.2 116.7 L341.5 127.5 L341.7 173.2 M344.6 99.3 L344.8 99.4 L345.1 99.9 L345.3 100.8 L345.6 102.1 L345.8 103.9 L346.1 106.5 L346.4 109.9 L346.6 114.4 L346.9 120.8 L347.1 130.8 L347.4 173.2 M350.2 93.5 L350.5 93.6 L350.7 94.1 L351 95 L351.2 96.5 L351.5 98.5 L351.8 101.2 L352 104.9 L352.3 109.8 L352.5 116.7 L352.8 127.4 L353 173.2 M355.8 99.2 L356.1 99.3 L356.3 99.8 L356.6 100.6 L356.9 102 L357.1 103.8 L357.4 106.4 L357.6 109.8 L357.9 114.3 L358.1 120.7 L358.4 130.7 L358.6 173.2 M361.4 93.4 L361.7 93.5 L361.9 94 L362.2 94.9 L362.4 96.4 L362.7 98.4 L362.9 101.1 L363.2 104.8 L363.4 109.7 L363.7 116.6 L363.9 127.4 L364.2 173.2 M366.9 99 L367.2 99.1 L367.4 99.6 L367.7 100.5 L367.9 101.8 L368.2 103.7 L368.5 106.2 L368.7 109.6 L369 114.2 L369.2 120.6 L369.5 130.6 L369.7 173.2 M372.4 94 L372.7 94.1 L372.9 94.6 L373.2 95.5 L373.4 97 L373.7 99 L373.9 101.7 L374.2 105.3 L374.4 110.2 L374.7 117 L374.9 127.7 L375.2 173.2 M377.9 101.9 L378.1 102.1 L378.4 102.5 L378.6 103.3 L378.9 104.6 L379.1 106.4 L379.4 108.9 L379.6 112.1 L379.9 116.5 L380.1 122.7 L380.4 132.3 L380.6 173.2 M383.3 99 L383.5 99.1 L383.8 99.6 L384 100.4 L384.3 101.8 L384.5 103.6 L384.8 106.2 L385 109.6 L385.3 114.2 L385.5 120.6 L385.8 130.6 L386 173.2 M388.7 106.3 L388.9 106.4 L389.1 106.8 L389.4 107.6 L389.6 108.8 L389.9 110.5 L390.1 112.8 L390.4 115.8 L390.6 119.9 L390.8 125.7 L391.1 134.8 L391.3 173.2 M394 103.9 L394.2 104 L394.4 104.4 L394.7 105.3 L394.9 106.5 L395.2 108.2 L395.4 110.6 L395.6 113.8 L395.9 118.1 L396.1 124 L396.4 133.4 L396.6 173.2 M399.2 110 L399.4 110.2 L399.7 110.5 L399.9 111.3 L400.1 112.4 L400.4 114 L400.6 116.2 L400.9 119.1 L401.1 123 L401.3 128.4 L401.6 136.9 L401.8 173.2 M404.4 108.7 L404.6 108.8 L404.8 109.2 L405.1 109.9 L405.3 111.1 L405.5 112.7 L405.8 114.9 L406 117.9 L406.2 121.9 L406.5 127.4 L406.7 136.2 L406.9 173.2 M409.5 113.7 L409.7 113.8 L410 114.2 L410.2 114.9 L410.4 115.9 L410.7 117.4 L410.9 119.5 L411.1 122.2 L411.3 125.9 L411.6 131 L411.8 139.1 L412 173.2 M414.6 112.2 L414.8 112.3 L415 112.7 L415.2 113.4 L415.5 114.5 L415.7 116 L415.9 118.1 L416.2 120.9 L416.4 124.7 L416.6 129.9 L416.8 138.2 L417.1 173.2 M419.6 114.7 L419.8 114.8 L420 115.2 L420.2 115.9 L420.5 116.9 L420.7 118.4 L420.9 120.4 L421.1 123.1 L421.4 126.7 L421.6 131.7 L421.8 139.6 L422.1 173.2 M424.5 111.3 L424.7 111.4 L425 111.8 L425.2 112.5 L425.4 113.6 L425.6 115.2 L425.9 117.3 L426.1 120.1 L426.3 123.9 L426.5 129.3 L426.8 137.7 L427 173.2 M429.4 109.2 L429.7 109.3 L429.9 109.7 L430.1 110.4 L430.3 111.6 L430.6 113.2 L430.8 115.4 L431 118.3 L431.2 122.3 L431.5 127.8 L431.7 136.4 L431.9 173.2 M434.3 101.5 L434.6 101.6 L434.8 102.1 L435 102.9 L435.2 104.2 L435.5 106 L435.7 108.5 L435.9 111.7 L436.1 116.2 L436.3 122.4 L436.6 132.1 L436.8 173.2 M439.2 101.2 L439.4 101.4 L439.7 101.8 L439.9 102.6 L440.1 103.9 L440.3 105.7 L440.5 108.2 L440.8 111.5 L441 115.9 L441.2 122.2 L441.4 131.9 L441.6 173.2 M444.1 93.9 L444.3 94.1 L444.5 94.6 L444.7 95.5 L444.9 96.9 L445.2 98.9 L445.4 101.6 L445.6 105.3 L445.8 110.1 L446 117 L446.3 127.7 L446.5 173.2 M448.9 96.8 L449.1 97 L449.3 97.4 L449.6 98.3 L449.8 99.7 L450 101.6 L450.2 104.2 L450.4 107.7 L450.6 112.4 L450.9 119 L451.1 129.4 L451.3 173.2 M453.7 90.6 L453.9 90.7 L454.1 91.2 L454.4 92.2 L454.6 93.6 L454.8 95.7 L455 98.6 L455.2 102.4 L455.4 107.4 L455.7 114.6 L455.9 125.8 L456.1 173.2 M458.5 95 L458.7 95.1 L458.9 95.6 L459.1 96.5 L459.4 97.9 L459.6 99.9 L459.8 102.6 L460 106.1 L460.2 111 L460.4 117.7 L460.7 128.3 L460.9 173.2 M463.2 89 L463.5 89.2 L463.7 89.7 L463.9 90.7 L464.1 92.2 L464.3 94.3 L464.5 97.2 L464.8 101 L465 106.2 L465.2 113.5 L465.4 124.9 L465.6 173.2 M468 94.6 L468.2 94.7 L468.4 95.2 L468.6 96.1 L468.8 97.5 L469.1 99.5 L469.3 102.2 L469.5 105.8 L469.7 110.6 L469.9 117.4 L470.1 128.1 L470.3 173.2 M472.7 88.8 L472.9 89 L473.1 89.5 L473.3 90.5 L473.6 92 L473.8 94.1 L474 97 L474.2 100.9 L474.4 106.1 L474.6 113.3 L474.8 124.8 L475.1 173.2 M477.4 94.5 L477.6 94.6 L477.8 95.1 L478 96 L478.3 97.4 L478.5 99.4 L478.7 102.1 L478.9 105.7 L479.1 110.6 L479.3 117.3 L479.5 128 L479.8 173.2 M482.1 88.6 L482.3 88.8 L482.5 89.3 L482.7 90.3 L482.9 91.8 L483.2 93.9 L483.4 96.8 L483.6 100.7 L483.8 105.9 L484 113.2 L484.2 124.6 L484.4 173.2 M486.8 94.3 L487 94.4 L487.2 94.9 L487.4 95.8 L487.6 97.2 L487.8 99.2 L488 101.9 L488.2 105.6 L488.5 110.4 L488.7 117.2 L488.9 127.9 L489.1 173.2 M491.4 88.4 L491.6 88.6 L491.8 89.1 L492 90.1 L492.2 91.6 L492.5 93.7 L492.7 96.6 L492.9 100.5 L493.1 105.7 L493.3 113.1 L493.5 124.5 L493.7 173.2 M496 94.1 L496.2 94.2 L496.5 94.7 L496.7 95.6 L496.9 97.1 L497.1 99.1 L497.3 101.8 L497.5 105.4 L497.7 110.3 L497.9 117.1 L498.1 127.8 L498.4 173.2 M500.7 88.2 L500.9 88.4 L501.1 88.9 L501.3 89.9 L501.5 91.4 L501.7 93.6 L501.9 96.5 L502.1 100.4 L502.3 105.6 L502.5 112.9 L502.7 124.4 L503 173.2 M505.3 93.9 L505.5 94 L505.7 94.5 L505.9 95.5 L506.1 96.9 L506.3 98.9 L506.5 101.6 L506.7 105.2 L506.9 110.1 L507.1 117 L507.3 127.7 L507.6 173.2 M509.8 88 L510.1 88.1 L510.3 88.7 L510.5 89.7 L510.7 91.2 L510.9 93.3 L511.1 96.3 L511.3 100.2 L511.5 105.4 L511.7 112.8 L511.9 124.3 L512.1 173.2 M514.4 93.5 L514.6 93.7 L514.8 94.2 L515 95.1 L515.3 96.5 L515.5 98.5 L515.7 101.3 L515.9 104.9 L516.1 109.8 L516.3 116.7 L516.5 127.5 L516.7 173.2 M519 87.5 L519.2 87.7 L519.4 88.2 L519.6 89.2 L519.8 90.7 L520 92.9 L520.2 95.8 L520.4 99.8 L520.7 105 L520.9 112.4 L521.1 124 L521.3 173.2 M523.6 93.1 L523.8 93.2 L524 93.7 L524.2 94.6 L524.4 96.1 L524.6 98.1 L524.8 100.9 L525 104.5 L525.2 109.5 L525.4 116.4 L525.6 127.2 L525.8 173.2 M528.1 87.1 L528.3 87.2 L528.5 87.8 L528.7 88.8 L528.9 90.3 L529.1 92.5 L529.4 95.4 L529.6 99.4 L529.8 104.7 L530 112.1 L530.2 123.8 L530.4 173.2 M532.7 92.6 L532.9 92.8 L533.1 93.3 L533.3 94.2 L533.5 95.6 L533.7 97.7 L533.9 100.4 L534.1 104.1 L534.3 109.1 L534.5 116 L534.7 126.9 L534.9 173.2 M537.2 86.6 L537.4 86.8 L537.6 87.3 L537.8 88.3 L538 89.9 L538.2 92.1 L538.4 95 L538.6 99 L538.8 104.3 L539.1 111.8 L539.3 123.5 L539.5 173.2 M541.7 92.2 L541.9 92.3 L542.1 92.8 L542.3 93.8 L542.5 95.2 L542.8 97.2 L543 100 L543.2 103.7 L543.4 108.7 L543.6 115.7 L543.8 126.7 L544 173.2 M546.2 86.2 L546.5 86.3 L546.7 86.9 L546.9 87.9 L547.1 89.4 L547.3 91.6 L547.5 94.6 L547.7 98.6 L547.9 104 L548.1 111.5 L548.3 123.2 L548.5 173.2 M550.8 91.7 L551 91.9 L551.2 92.4 L551.4 93.3 L551.6 94.8 L551.8 96.8 L552 99.6 L552.2 103.4 L552.4 108.4 L552.6 115.4 L552.8 126.4 L553 173.2 M555.3 85.8 L555.5 85.9 L555.7 86.5 L555.9 87.5 L556.1 89 L556.3 91.3 L556.5 94.3 L556.7 98.3 L556.9 103.6 L557.1 111.2 L557.3 123 L557.5 173.2 M559.8 91.4 L560 91.5 L560.2 92 L560.4 93 L560.6 94.4 L560.8 96.5 L561 99.3 L561.2 103 L561.4 108.1 L561.6 115.1 L561.8 126.2 L562 173.2 M564.3 85.4 L564.5 85.5 L564.7 86.1 L564.9 87.1 L565.1 88.7 L565.3 90.9 L565.5 93.9 L565.7 97.9 L565.9 103.3 L566.1 110.9 L566.3 122.8 L566.5 173.2 M568.7 91 L568.9 91.1 L569.1 91.6 L569.4 92.6 L569.6 94.1 L569.8 96.1 L570 99 L570.2 102.7 L570.4 107.8 L570.6 114.9 L570.8 126 L571 173.2 M573.2 85 L573.4 85.2 L573.6 85.7 L573.8 86.7 L574 88.3 L574.2 90.5 L574.4 93.6 L574.6 97.6 L574.9 103 L575.1 110.7 L575.3 122.6 L575.5 173.2 M577.7 90.6 L577.9 90.7 L578.1 91.3 L578.3 92.2 L578.5 93.7 L578.7 95.8 L578.9 98.6 L579.1 102.4 L579.3 107.5 L579.5 114.6 L579.7 125.8 L579.9 173.2 M582.2 84.6 L582.4 84.8 L582.6 85.3 L582.8 86.4 L583 88 L583.2 90.2 L583.4 93.2 L583.6 97.3 L583.8 102.7 L584 110.4 L584.2 122.4 L584.4 173.2 M586.6 90.2 L586.8 90.4 L587.1 90.9 L587.3 91.9 L587.5 93.3 L587.7 95.4 L587.9 98.3 L588.1 102.1 L588.3 107.2 L588.5 114.3 L588.7 125.6 L588.9 173.2 M591.1 84.3 L591.3 84.4 L591.5 85 L591.7 86 L591.9 87.6 L592.1 89.8 L592.3 92.9 L592.5 97 L592.7 102.4 L592.9 110.1 L593.1 122.2 L593.3 173.2 M595.6 89.9 L595.8 90 L596 90.5 L596.2 91.5 L596.4 93 L596.6 95.1 L596.8 97.9 L597 101.8 L597.2 106.9 L597.4 114.1 L597.6 125.4 L597.8 173.2 M600 83.9 L600.2 84.1 L600.4 84.6 L600.6 85.6 L600.8 87.2 L601 89.5 L601.2 92.6 L601.4 96.6 L601.6 102.1 L601.8 109.9 L602 121.9 L602.3 173.2 M604.5 89.6 L604.7 89.8 L604.9 90.3 L605.1 91.2 L605.3 92.7 L605.5 94.9 L605.7 97.7 L605.9 101.5 L606.1 106.7 L606.3 113.9 L606.5 125.2 L606.7 173.2 " fill="none" stroke="#a2aaa2" stroke-width="0.75"/>
<path d="M606.7 173.2 L607.5 117.7 L608.3 173.2 H610.2" fill="none" stroke="#1cac1c" stroke-width="0.9"/>
<polyline points="262.7,93.9 269.7,99.6 276.5,93.7 283.3,99.4 289.8,93.6 296.3,99.3 302.7,93.5 308.9,99.2 315.1,93.3 321.2,99.1 327.1,93.2 333,98.9 338.8,93.1 344.6,98.8 350.2,93 355.8,98.7 361.4,92.9 366.9,98.5 372.4,93.5 377.9,101.4 383.3,98.5 388.7,105.8 394,103.4 399.2,109.5 404.4,108.2 409.5,113.2 414.6,111.7 419.6,114.2 424.5,110.8 429.4,108.7 434.3,101 439.2,100.7 444.1,93.4 448.9,96.3 453.7,90.1 458.5,94.5 463.2,88.5 468,94.1 472.7,88.3 477.4,94 482.1,88.1 486.8,93.8 491.4,87.9 496,93.6 500.7,87.7 505.3,93.4 509.8,87.5 514.4,93 519,87 523.6,92.6 528.1,86.6 532.7,92.1 537.2,86.1 541.7,91.7 546.2,85.7 550.8,91.2 555.3,85.3 559.8,90.9 564.3,84.9 568.7,90.5 573.2,84.5 577.7,90.1 582.2,84.1 586.6,89.7 591.1,83.8 595.6,89.4 600,83.4 604.5,89.1" fill="none" stroke="#b02818" stroke-width="0.7"/>
<polyline points="262.7,93.6 276.5,93.4 289.8,93.3 302.7,93.2 315.1,93 327.1,92.9 338.8,92.8 350.2,92.7 361.4,92.6 372.4,93.2 383.3,98.2 394,103.1 404.4,107.9 414.6,111.4 424.5,110.5 434.3,100.7 444.1,93.1 453.7,89.8 463.2,88.2 472.7,88 482.1,87.8 491.4,87.6 500.7,87.4 509.8,87.2 519,86.7 528.1,86.3 537.2,85.8 546.2,85.4 555.3,85 564.3,84.6 573.2,84.2 582.2,83.8 591.1,83.5 600,83.1" fill="none" stroke="#d0c030" stroke-width="1"/>
<circle cx="262.7" cy="93.9" r="1.5" fill="#a89888" stroke="#c03020" stroke-width="0.6"/><circle cx="269.7" cy="99.6" r="1.5" fill="#a0a848" stroke="#a05828" stroke-width="0.5"/><circle cx="276.5" cy="93.7" r="1.5" fill="#a89888" stroke="#c03020" stroke-width="0.6"/><circle cx="283.3" cy="99.4" r="1.5" fill="#a0a848" stroke="#a05828" stroke-width="0.5"/><circle cx="289.8" cy="93.6" r="1.5" fill="#a89888" stroke="#c03020" stroke-width="0.6"/><circle cx="296.3" cy="99.3" r="1.5" fill="#a0a848" stroke="#a05828" stroke-width="0.5"/><circle cx="302.7" cy="93.5" r="1.5" fill="#a89888" stroke="#c03020" stroke-width="0.6"/><circle cx="308.9" cy="99.2" r="1.5" fill="#a0a848" stroke="#a05828" stroke-width="0.5"/><circle cx="315.1" cy="93.3" r="1.5" fill="#a89888" stroke="#c03020" stroke-width="0.6"/><circle cx="321.2" cy="99.1" r="1.5" fill="#a0a848" stroke="#a05828" stroke-width="0.5"/><circle cx="327.1" cy="93.2" r="1.5" fill="#a89888" stroke="#c03020" stroke-width="0.6"/><circle cx="333" cy="98.9" r="1.5" fill="#a0a848" stroke="#a05828" stroke-width="0.5"/><circle cx="338.8" cy="93.1" r="1.5" fill="#a89888" stroke="#c03020" stroke-width="0.6"/><circle cx="344.6" cy="98.8" r="1.5" fill="#a0a848" stroke="#a05828" stroke-width="0.5"/><circle cx="350.2" cy="93" r="1.5" fill="#a89888" stroke="#c03020" stroke-width="0.6"/><circle cx="355.8" cy="98.7" r="1.5" fill="#a0a848" stroke="#a05828" stroke-width="0.5"/><circle cx="361.4" cy="92.9" r="1.5" fill="#a89888" stroke="#c03020" stroke-width="0.6"/><circle cx="366.9" cy="98.5" r="1.5" fill="#a0a848" stroke="#a05828" stroke-width="0.5"/><circle cx="372.4" cy="93.5" r="1.5" fill="#a89888" stroke="#c03020" stroke-width="0.6"/><circle cx="377.9" cy="101.4" r="1.5" fill="#a0a848" stroke="#a05828" stroke-width="0.5"/><circle cx="383.3" cy="98.5" r="1.5" fill="#a89888" stroke="#c03020" stroke-width="0.6"/><circle cx="388.7" cy="105.8" r="1.5" fill="#a0a848" stroke="#a05828" stroke-width="0.5"/><circle cx="394" cy="103.4" r="1.5" fill="#a89888" stroke="#c03020" stroke-width="0.6"/><circle cx="399.2" cy="109.5" r="1.5" fill="#a0a848" stroke="#a05828" stroke-width="0.5"/><circle cx="404.4" cy="108.2" r="1.5" fill="#a89888" stroke="#c03020" stroke-width="0.6"/><circle cx="409.5" cy="113.2" r="1.5" fill="#a0a848" stroke="#a05828" stroke-width="0.5"/><circle cx="414.6" cy="111.7" r="1.5" fill="#a89888" stroke="#c03020" stroke-width="0.6"/><circle cx="419.6" cy="114.2" r="1.5" fill="#a0a848" stroke="#a05828" stroke-width="0.5"/><circle cx="424.5" cy="110.8" r="1.5" fill="#a89888" stroke="#c03020" stroke-width="0.6"/><circle cx="429.4" cy="108.7" r="1.5" fill="#a0a848" stroke="#a05828" stroke-width="0.5"/><circle cx="434.3" cy="101" r="1.5" fill="#a89888" stroke="#c03020" stroke-width="0.6"/><circle cx="439.2" cy="100.7" r="1.5" fill="#a0a848" stroke="#a05828" stroke-width="0.5"/><circle cx="444.1" cy="93.4" r="1.5" fill="#a89888" stroke="#c03020" stroke-width="0.6"/><circle cx="448.9" cy="96.3" r="1.5" fill="#a0a848" stroke="#a05828" stroke-width="0.5"/><circle cx="453.7" cy="90.1" r="1.5" fill="#a89888" stroke="#c03020" stroke-width="0.6"/><circle cx="458.5" cy="94.5" r="1.5" fill="#a0a848" stroke="#a05828" stroke-width="0.5"/><circle cx="463.2" cy="88.5" r="1.5" fill="#a89888" stroke="#c03020" stroke-width="0.6"/><circle cx="468" cy="94.1" r="1.5" fill="#a0a848" stroke="#a05828" stroke-width="0.5"/><circle cx="472.7" cy="88.3" r="1.5" fill="#a89888" stroke="#c03020" stroke-width="0.6"/><circle cx="477.4" cy="94" r="1.5" fill="#a0a848" stroke="#a05828" stroke-width="0.5"/><circle cx="482.1" cy="88.1" r="1.5" fill="#a89888" stroke="#c03020" stroke-width="0.6"/><circle cx="486.8" cy="93.8" r="1.5" fill="#a0a848" stroke="#a05828" stroke-width="0.5"/><circle cx="491.4" cy="87.9" r="1.5" fill="#a89888" stroke="#c03020" stroke-width="0.6"/><circle cx="496" cy="93.6" r="1.5" fill="#a0a848" stroke="#a05828" stroke-width="0.5"/><circle cx="500.7" cy="87.7" r="1.5" fill="#a89888" stroke="#c03020" stroke-width="0.6"/><circle cx="505.3" cy="93.4" r="1.5" fill="#a0a848" stroke="#a05828" stroke-width="0.5"/><circle cx="509.8" cy="87.5" r="1.5" fill="#a89888" stroke="#c03020" stroke-width="0.6"/><circle cx="514.4" cy="93" r="1.5" fill="#a0a848" stroke="#a05828" stroke-width="0.5"/><circle cx="519" cy="87" r="1.5" fill="#a89888" stroke="#c03020" stroke-width="0.6"/><circle cx="523.6" cy="92.6" r="1.5" fill="#a0a848" stroke="#a05828" stroke-width="0.5"/><circle cx="528.1" cy="86.6" r="1.5" fill="#a89888" stroke="#c03020" stroke-width="0.6"/><circle cx="532.7" cy="92.1" r="1.5" fill="#a0a848" stroke="#a05828" stroke-width="0.5"/><circle cx="537.2" cy="86.1" r="1.5" fill="#a89888" stroke="#c03020" stroke-width="0.6"/><circle cx="541.7" cy="91.7" r="1.5" fill="#a0a848" stroke="#a05828" stroke-width="0.5"/><circle cx="546.2" cy="85.7" r="1.5" fill="#a89888" stroke="#c03020" stroke-width="0.6"/><circle cx="550.8" cy="91.2" r="1.5" fill="#a0a848" stroke="#a05828" stroke-width="0.5"/><circle cx="555.3" cy="85.3" r="1.5" fill="#a89888" stroke="#c03020" stroke-width="0.6"/><circle cx="559.8" cy="90.9" r="1.5" fill="#a0a848" stroke="#a05828" stroke-width="0.5"/><circle cx="564.3" cy="84.9" r="1.5" fill="#a89888" stroke="#c03020" stroke-width="0.6"/><circle cx="568.7" cy="90.5" r="1.5" fill="#a0a848" stroke="#a05828" stroke-width="0.5"/><circle cx="573.2" cy="84.5" r="1.5" fill="#a89888" stroke="#c03020" stroke-width="0.6"/><circle cx="577.7" cy="90.1" r="1.5" fill="#a0a848" stroke="#a05828" stroke-width="0.5"/><circle cx="582.2" cy="84.1" r="1.5" fill="#a89888" stroke="#c03020" stroke-width="0.6"/><circle cx="586.6" cy="89.7" r="1.5" fill="#a0a848" stroke="#a05828" stroke-width="0.5"/><circle cx="591.1" cy="83.8" r="1.5" fill="#a89888" stroke="#c03020" stroke-width="0.6"/><circle cx="595.6" cy="89.4" r="1.5" fill="#a0a848" stroke="#a05828" stroke-width="0.5"/><circle cx="600" cy="83.4" r="1.5" fill="#a89888" stroke="#c03020" stroke-width="0.6"/><circle cx="604.5" cy="89.1" r="1.5" fill="#a0a848" stroke="#a05828" stroke-width="0.5"/>
<circle cx="261.1" cy="155.7" r="1.55" fill="#c4ccff" stroke="#3048e0" stroke-width="0.85"/><circle cx="263.5" cy="152.7" r="1.55" fill="#c4ccff" stroke="#3048e0" stroke-width="0.85"/><circle cx="268" cy="155.5" r="1.55" fill="#c4ccff" stroke="#3048e0" stroke-width="0.85"/><circle cx="271.3" cy="153.6" r="1.55" fill="#c4ccff" stroke="#3048e0" stroke-width="0.85"/><circle cx="275.1" cy="155.3" r="1.55" fill="#c4ccff" stroke="#3048e0" stroke-width="0.85"/><circle cx="277.7" cy="153.3" r="1.55" fill="#c4ccff" stroke="#3048e0" stroke-width="0.85"/><circle cx="280.7" cy="149.3" r="1.55" fill="#c4ccff" stroke="#3048e0" stroke-width="0.85"/><circle cx="284.8" cy="154.9" r="1.55" fill="#c4ccff" stroke="#3048e0" stroke-width="0.85"/><circle cx="286.9" cy="155.1" r="1.55" fill="#c4ccff" stroke="#3048e0" stroke-width="0.85"/><circle cx="291.3" cy="153.9" r="1.55" fill="#c4ccff" stroke="#3048e0" stroke-width="0.85"/><circle cx="295" cy="150.6" r="1.55" fill="#c4ccff" stroke="#3048e0" stroke-width="0.85"/><circle cx="298.4" cy="152.4" r="1.55" fill="#c4ccff" stroke="#3048e0" stroke-width="0.85"/><circle cx="301.8" cy="146.3" r="1.55" fill="#c4ccff" stroke="#3048e0" stroke-width="0.85"/><circle cx="304.2" cy="153.7" r="1.55" fill="#c4ccff" stroke="#3048e0" stroke-width="0.85"/><circle cx="307.6" cy="155.4" r="1.55" fill="#c4ccff" stroke="#3048e0" stroke-width="0.85"/><circle cx="310.9" cy="144.5" r="1.55" fill="#c4ccff" stroke="#3048e0" stroke-width="0.85"/><circle cx="314.9" cy="155.3" r="1.55" fill="#c4ccff" stroke="#3048e0" stroke-width="0.85"/><circle cx="316.5" cy="146.5" r="1.55" fill="#c4ccff" stroke="#3048e0" stroke-width="0.85"/><circle cx="320.2" cy="153.7" r="1.55" fill="#c4ccff" stroke="#3048e0" stroke-width="0.85"/><circle cx="323.4" cy="155.4" r="1.55" fill="#c4ccff" stroke="#3048e0" stroke-width="0.85"/><circle cx="325.5" cy="153.4" r="1.55" fill="#c4ccff" stroke="#3048e0" stroke-width="0.85"/><circle cx="328.2" cy="155.2" r="1.55" fill="#c4ccff" stroke="#3048e0" stroke-width="0.85"/><circle cx="332.3" cy="148.3" r="1.55" fill="#c4ccff" stroke="#3048e0" stroke-width="0.85"/><circle cx="334.8" cy="151.3" r="1.55" fill="#c4ccff" stroke="#3048e0" stroke-width="0.85"/><circle cx="337.4" cy="149" r="1.55" fill="#c4ccff" stroke="#3048e0" stroke-width="0.85"/><circle cx="340" cy="151.5" r="1.55" fill="#c4ccff" stroke="#3048e0" stroke-width="0.85"/><circle cx="344.1" cy="154.4" r="1.55" fill="#c4ccff" stroke="#3048e0" stroke-width="0.85"/><circle cx="346.2" cy="154.2" r="1.55" fill="#c4ccff" stroke="#3048e0" stroke-width="0.85"/><circle cx="348.1" cy="155.3" r="1.55" fill="#c4ccff" stroke="#3048e0" stroke-width="0.85"/><circle cx="352.3" cy="155.6" r="1.55" fill="#c4ccff" stroke="#3048e0" stroke-width="0.85"/><circle cx="354.8" cy="153.5" r="1.55" fill="#c4ccff" stroke="#3048e0" stroke-width="0.85"/><circle cx="357.2" cy="154.5" r="1.55" fill="#c4ccff" stroke="#3048e0" stroke-width="0.85"/><circle cx="360.2" cy="153.7" r="1.55" fill="#c4ccff" stroke="#3048e0" stroke-width="0.85"/><circle cx="362.6" cy="150" r="1.55" fill="#c4ccff" stroke="#3048e0" stroke-width="0.85"/><circle cx="366.9" cy="152.7" r="1.55" fill="#c4ccff" stroke="#3048e0" stroke-width="0.85"/><circle cx="368.5" cy="152.9" r="1.55" fill="#c4ccff" stroke="#3048e0" stroke-width="0.85"/><circle cx="370.9" cy="154" r="1.55" fill="#c4ccff" stroke="#3048e0" stroke-width="0.85"/><circle cx="373.2" cy="153.3" r="1.55" fill="#c4ccff" stroke="#3048e0" stroke-width="0.85"/><circle cx="375.9" cy="155.4" r="1.55" fill="#c4ccff" stroke="#3048e0" stroke-width="0.85"/><circle cx="379.9" cy="154.8" r="1.55" fill="#c4ccff" stroke="#3048e0" stroke-width="0.85"/><circle cx="381.5" cy="155" r="1.55" fill="#c4ccff" stroke="#3048e0" stroke-width="0.85"/><circle cx="384" cy="155.3" r="1.55" fill="#c4ccff" stroke="#3048e0" stroke-width="0.85"/><circle cx="387.8" cy="154.5" r="1.55" fill="#c4ccff" stroke="#3048e0" stroke-width="0.85"/><circle cx="389.6" cy="149.8" r="1.55" fill="#c4ccff" stroke="#3048e0" stroke-width="0.85"/><circle cx="391.6" cy="153.1" r="1.55" fill="#c4ccff" stroke="#3048e0" stroke-width="0.85"/><circle cx="395.3" cy="151.5" r="1.55" fill="#c4ccff" stroke="#3048e0" stroke-width="0.85"/><circle cx="397.2" cy="154.7" r="1.55" fill="#c4ccff" stroke="#3048e0" stroke-width="0.85"/><circle cx="400.6" cy="152" r="1.55" fill="#c4ccff" stroke="#3048e0" stroke-width="0.85"/><circle cx="402.2" cy="153" r="1.55" fill="#c4ccff" stroke="#3048e0" stroke-width="0.85"/><circle cx="406.4" cy="151.5" r="1.55" fill="#c4ccff" stroke="#3048e0" stroke-width="0.85"/><circle cx="407.9" cy="155.6" r="1.55" fill="#c4ccff" stroke="#3048e0" stroke-width="0.85"/><circle cx="411.8" cy="153.8" r="1.55" fill="#c4ccff" stroke="#3048e0" stroke-width="0.85"/><circle cx="412.3" cy="154.4" r="1.55" fill="#c4ccff" stroke="#3048e0" stroke-width="0.85"/><circle cx="415.6" cy="153" r="1.55" fill="#c4ccff" stroke="#3048e0" stroke-width="0.85"/><circle cx="417.7" cy="145.5" r="1.55" fill="#c4ccff" stroke="#3048e0" stroke-width="0.85"/><circle cx="420.8" cy="151" r="1.55" fill="#c4ccff" stroke="#3048e0" stroke-width="0.85"/><circle cx="423.6" cy="153.6" r="1.55" fill="#c4ccff" stroke="#3048e0" stroke-width="0.85"/><circle cx="425.5" cy="155.6" r="1.55" fill="#c4ccff" stroke="#3048e0" stroke-width="0.85"/><circle cx="428" cy="154.1" r="1.55" fill="#c4ccff" stroke="#3048e0" stroke-width="0.85"/><circle cx="431.6" cy="152" r="1.55" fill="#c4ccff" stroke="#3048e0" stroke-width="0.85"/><circle cx="432.9" cy="154" r="1.55" fill="#c4ccff" stroke="#3048e0" stroke-width="0.85"/><circle cx="436.1" cy="154.2" r="1.55" fill="#c4ccff" stroke="#3048e0" stroke-width="0.85"/><circle cx="437.8" cy="148" r="1.55" fill="#c4ccff" stroke="#3048e0" stroke-width="0.85"/><circle cx="440.8" cy="151.7" r="1.55" fill="#c4ccff" stroke="#3048e0" stroke-width="0.85"/><circle cx="443.2" cy="153.8" r="1.55" fill="#c4ccff" stroke="#3048e0" stroke-width="0.85"/><circle cx="445.8" cy="145.8" r="1.55" fill="#c4ccff" stroke="#3048e0" stroke-width="0.85"/><circle cx="448" cy="153.1" r="1.55" fill="#c4ccff" stroke="#3048e0" stroke-width="0.85"/><circle cx="449.5" cy="154.1" r="1.55" fill="#c4ccff" stroke="#3048e0" stroke-width="0.85"/><circle cx="452.8" cy="146.1" r="1.55" fill="#c4ccff" stroke="#3048e0" stroke-width="0.85"/><circle cx="454.4" cy="149.4" r="1.55" fill="#c4ccff" stroke="#3048e0" stroke-width="0.85"/><circle cx="456.5" cy="150" r="1.55" fill="#c4ccff" stroke="#3048e0" stroke-width="0.85"/><circle cx="458.9" cy="155.6" r="1.55" fill="#c4ccff" stroke="#3048e0" stroke-width="0.85"/><circle cx="461.9" cy="148.6" r="1.55" fill="#c4ccff" stroke="#3048e0" stroke-width="0.85"/><circle cx="464.1" cy="154.8" r="1.55" fill="#c4ccff" stroke="#3048e0" stroke-width="0.85"/><circle cx="466" cy="150.6" r="1.55" fill="#c4ccff" stroke="#3048e0" stroke-width="0.85"/><circle cx="469.3" cy="150.2" r="1.55" fill="#c4ccff" stroke="#3048e0" stroke-width="0.85"/><circle cx="470.9" cy="154.3" r="1.55" fill="#c4ccff" stroke="#3048e0" stroke-width="0.85"/><circle cx="474.2" cy="152.3" r="1.55" fill="#c4ccff" stroke="#3048e0" stroke-width="0.85"/><circle cx="476.2" cy="146.4" r="1.55" fill="#c4ccff" stroke="#3048e0" stroke-width="0.85"/><circle cx="479.3" cy="148.9" r="1.55" fill="#c4ccff" stroke="#3048e0" stroke-width="0.85"/><circle cx="479.8" cy="155.4" r="1.55" fill="#c4ccff" stroke="#3048e0" stroke-width="0.85"/><circle cx="483.4" cy="147.5" r="1.55" fill="#c4ccff" stroke="#3048e0" stroke-width="0.85"/><circle cx="486" cy="155.4" r="1.55" fill="#c4ccff" stroke="#3048e0" stroke-width="0.85"/><circle cx="487.7" cy="155.6" r="1.55" fill="#c4ccff" stroke="#3048e0" stroke-width="0.85"/><circle cx="489.6" cy="149.1" r="1.55" fill="#c4ccff" stroke="#3048e0" stroke-width="0.85"/><circle cx="492.8" cy="147.2" r="1.55" fill="#c4ccff" stroke="#3048e0" stroke-width="0.85"/><circle cx="495.3" cy="151.8" r="1.55" fill="#c4ccff" stroke="#3048e0" stroke-width="0.85"/><circle cx="497.4" cy="148.5" r="1.55" fill="#c4ccff" stroke="#3048e0" stroke-width="0.85"/><circle cx="499.6" cy="148.9" r="1.55" fill="#c4ccff" stroke="#3048e0" stroke-width="0.85"/><circle cx="502.4" cy="154.9" r="1.55" fill="#c4ccff" stroke="#3048e0" stroke-width="0.85"/><circle cx="503.1" cy="153.4" r="1.55" fill="#c4ccff" stroke="#3048e0" stroke-width="0.85"/><circle cx="505.9" cy="155.2" r="1.55" fill="#c4ccff" stroke="#3048e0" stroke-width="0.85"/><circle cx="508.2" cy="149.9" r="1.55" fill="#c4ccff" stroke="#3048e0" stroke-width="0.85"/><circle cx="509.7" cy="153.1" r="1.55" fill="#c4ccff" stroke="#3048e0" stroke-width="0.85"/><circle cx="513.1" cy="154.8" r="1.55" fill="#c4ccff" stroke="#3048e0" stroke-width="0.85"/><circle cx="515.7" cy="152.1" r="1.55" fill="#c4ccff" stroke="#3048e0" stroke-width="0.85"/><circle cx="517.6" cy="151.7" r="1.55" fill="#c4ccff" stroke="#3048e0" stroke-width="0.85"/><circle cx="520.2" cy="150.6" r="1.55" fill="#c4ccff" stroke="#3048e0" stroke-width="0.85"/><circle cx="522.7" cy="149.6" r="1.55" fill="#c4ccff" stroke="#3048e0" stroke-width="0.85"/><circle cx="525" cy="152.6" r="1.55" fill="#c4ccff" stroke="#3048e0" stroke-width="0.85"/><circle cx="526.6" cy="154.9" r="1.55" fill="#c4ccff" stroke="#3048e0" stroke-width="0.85"/><circle cx="529.8" cy="155.5" r="1.55" fill="#c4ccff" stroke="#3048e0" stroke-width="0.85"/><circle cx="530.9" cy="155.5" r="1.55" fill="#c4ccff" stroke="#3048e0" stroke-width="0.85"/><circle cx="534.1" cy="150.3" r="1.55" fill="#c4ccff" stroke="#3048e0" stroke-width="0.85"/><circle cx="535.8" cy="154.5" r="1.55" fill="#c4ccff" stroke="#3048e0" stroke-width="0.85"/><circle cx="538.5" cy="152.8" r="1.55" fill="#c4ccff" stroke="#3048e0" stroke-width="0.85"/><circle cx="539.4" cy="154.9" r="1.55" fill="#c4ccff" stroke="#3048e0" stroke-width="0.85"/><circle cx="543.7" cy="154.9" r="1.55" fill="#c4ccff" stroke="#3048e0" stroke-width="0.85"/><circle cx="544" cy="146.4" r="1.55" fill="#c4ccff" stroke="#3048e0" stroke-width="0.85"/><circle cx="548" cy="143.9" r="1.55" fill="#c4ccff" stroke="#3048e0" stroke-width="0.85"/><circle cx="549.4" cy="153.7" r="1.55" fill="#c4ccff" stroke="#3048e0" stroke-width="0.85"/><circle cx="553.4" cy="152.4" r="1.55" fill="#c4ccff" stroke="#3048e0" stroke-width="0.85"/><circle cx="553.2" cy="148.1" r="1.55" fill="#c4ccff" stroke="#3048e0" stroke-width="0.85"/><circle cx="556" cy="154.6" r="1.55" fill="#c4ccff" stroke="#3048e0" stroke-width="0.85"/><circle cx="559" cy="151.4" r="1.55" fill="#c4ccff" stroke="#3048e0" stroke-width="0.85"/><circle cx="561.5" cy="150.6" r="1.55" fill="#c4ccff" stroke="#3048e0" stroke-width="0.85"/><circle cx="562.5" cy="149.2" r="1.55" fill="#c4ccff" stroke="#3048e0" stroke-width="0.85"/><circle cx="566.5" cy="151.2" r="1.55" fill="#c4ccff" stroke="#3048e0" stroke-width="0.85"/><circle cx="566.8" cy="152.5" r="1.55" fill="#c4ccff" stroke="#3048e0" stroke-width="0.85"/><circle cx="570" cy="154" r="1.55" fill="#c4ccff" stroke="#3048e0" stroke-width="0.85"/><circle cx="571.6" cy="154.9" r="1.55" fill="#c4ccff" stroke="#3048e0" stroke-width="0.85"/><circle cx="574.6" cy="155.5" r="1.55" fill="#c4ccff" stroke="#3048e0" stroke-width="0.85"/><circle cx="576.7" cy="154" r="1.55" fill="#c4ccff" stroke="#3048e0" stroke-width="0.85"/><circle cx="579.3" cy="148.8" r="1.55" fill="#c4ccff" stroke="#3048e0" stroke-width="0.85"/><circle cx="581.3" cy="149.2" r="1.55" fill="#c4ccff" stroke="#3048e0" stroke-width="0.85"/><circle cx="582.5" cy="153.3" r="1.55" fill="#c4ccff" stroke="#3048e0" stroke-width="0.85"/><circle cx="585.6" cy="147.8" r="1.55" fill="#c4ccff" stroke="#3048e0" stroke-width="0.85"/><circle cx="587.6" cy="141.5" r="1.55" fill="#c4ccff" stroke="#3048e0" stroke-width="0.85"/><circle cx="589.6" cy="151.8" r="1.55" fill="#c4ccff" stroke="#3048e0" stroke-width="0.85"/><circle cx="591.8" cy="151.8" r="1.55" fill="#c4ccff" stroke="#3048e0" stroke-width="0.85"/><circle cx="594.8" cy="152" r="1.55" fill="#c4ccff" stroke="#3048e0" stroke-width="0.85"/><circle cx="596.9" cy="154.1" r="1.55" fill="#c4ccff" stroke="#3048e0" stroke-width="0.85"/><circle cx="597.8" cy="154.4" r="1.55" fill="#c4ccff" stroke="#3048e0" stroke-width="0.85"/><circle cx="601.3" cy="150.9" r="1.55" fill="#c4ccff" stroke="#3048e0" stroke-width="0.85"/><circle cx="602" cy="148.3" r="1.55" fill="#c4ccff" stroke="#3048e0" stroke-width="0.85"/><circle cx="606.1" cy="153.1" r="1.55" fill="#c4ccff" stroke="#3048e0" stroke-width="0.85"/>
<path d="M215.5 75.8 V180.2 H623.8" stroke="#969696" stroke-width="1" fill="none"/>
<path d="M215.5 162.1 h2.2 M215.5 139.9 h2.2 M215.5 117.7 h2.2 M215.5 95.5 h2.2 M318.8 180.2 v-2.2 M407.1 180.2 v-2.2 M495.4 180.2 v-2.2 M583.7 180.2 v-2.2 " stroke="#969696" stroke-width="0.8" fill="none"/>
<path d="M230.5 180.2 v-4 " stroke="#969696" stroke-width="0.9" fill="none"/>
<path d="M215.5 151 h1.6 M215.5 128.8 h1.6 M215.5 106.6 h1.6 M215.5 84.4 h1.6 M274.6 180.2 v-1.6 M362.9 180.2 v-1.6 M451.2 180.2 v-1.6 M539.5 180.2 v-1.6 " stroke="#969696" stroke-opacity="0.4" stroke-width="0.7" fill="none"/>
<text x="211.0" y="164.8" text-anchor="end" font-size="7.4" fill="#b0b0b0" font-family="Liberation Sans, Noto Sans CJK SC, sans-serif" textLength="10.8" lengthAdjust="spacingAndGlyphs">0.2</text>
<text x="211.0" y="142.6" text-anchor="end" font-size="7.4" fill="#b0b0b0" font-family="Liberation Sans, Noto Sans CJK SC, sans-serif" textLength="10.8" lengthAdjust="spacingAndGlyphs">0.4</text>
<text x="211.0" y="120.4" text-anchor="end" font-size="7.4" fill="#b0b0b0" font-family="Liberation Sans, Noto Sans CJK SC, sans-serif" textLength="10.8" lengthAdjust="spacingAndGlyphs">0.6</text>
<text x="211.0" y="98.2" text-anchor="end" font-size="7.4" fill="#b0b0b0" font-family="Liberation Sans, Noto Sans CJK SC, sans-serif" textLength="10.8" lengthAdjust="spacingAndGlyphs">0.8</text>
<text x="230.5" y="188.3" text-anchor="middle" font-size="7.4" fill="#b0b0b0" font-family="Liberation Sans, Noto Sans CJK SC, sans-serif" textLength="3.2" lengthAdjust="spacingAndGlyphs">0</text>
<text x="318.8" y="188.3" text-anchor="middle" font-size="7.4" fill="#b0b0b0" font-family="Liberation Sans, Noto Sans CJK SC, sans-serif" textLength="18.2" lengthAdjust="spacingAndGlyphs">10000</text>
<text x="407.1" y="188.3" text-anchor="middle" font-size="7.4" fill="#b0b0b0" font-family="Liberation Sans, Noto Sans CJK SC, sans-serif" textLength="18.2" lengthAdjust="spacingAndGlyphs">20000</text>
<text x="495.4" y="188.3" text-anchor="middle" font-size="7.4" fill="#b0b0b0" font-family="Liberation Sans, Noto Sans CJK SC, sans-serif" textLength="18.2" lengthAdjust="spacingAndGlyphs">30000</text>
<text x="583.7" y="188.3" text-anchor="middle" font-size="7.4" fill="#b0b0b0" font-family="Liberation Sans, Noto Sans CJK SC, sans-serif" textLength="18.2" lengthAdjust="spacingAndGlyphs">40000</text>
<path d="M538 98.8 h12" stroke="#1cac1c" stroke-width="1"/>
<circle cx="544" cy="112.5" r="1.4" fill="#a0acf0" stroke="#2840e0" stroke-width="0.9"/>
<path d="M538 126.3 h12" stroke="#b02818" stroke-width="1"/><circle cx="544" cy="126.3" r="1.4" fill="#a89888" stroke="#c03020" stroke-width="0.6"/>
<path d="M538 140.2 h12" stroke="#d0c030" stroke-width="1"/><circle cx="544" cy="140.2" r="1.4" fill="#a0a848" stroke="#a05828" stroke-width="0.5"/>
<circle cx="543" cy="153.4" r="2" fill="#8478b8"/>
<g transform="translate(539,162.4)"><rect width="10.2" height="10.2" rx="1" fill="#e8f2fa" stroke="#5090c0" stroke-width="0.6"/><ellipse cx="5.1" cy="5.1" rx="3.264" ry="2.2439999999999998" fill="none" stroke="#1a64a0" stroke-width="1.15"/><path d="M2.2439999999999998 8.16 L7.9559999999999995 2.04" stroke="#1a64a0" stroke-width="1.15"/></g>
<text x="556" y="101.8" font-size="7.5" fill="#a4a4a4" font-family="Liberation Sans, Noto Sans CJK SC, sans-serif">吸收曲线</text>
<text x="556" y="115.5" font-size="7.5" fill="#a4a4a4" font-family="Liberation Sans, Noto Sans CJK SC, sans-serif">腔模相除后</text>
<text x="556" y="129.3" font-size="7.5" fill="#a4a4a4" font-family="Liberation Sans, Noto Sans CJK SC, sans-serif">腔模峰值</text>
<text x="556" y="143.2" font-size="7.5" fill="#a4a4a4" font-family="Liberation Sans, Noto Sans CJK SC, sans-serif">奇偶腔模峰值平均</text>
<text x="556" y="156.4" font-size="7.5" fill="#a4a4a4" font-family="Liberation Sans, Noto Sans CJK SC, sans-serif">腔模相除后平均</text>
<text x="556" y="170" font-size="7.5" fill="#a4a4a4" font-family="Liberation Sans, Noto Sans CJK SC, sans-serif">腔模控制点</text>
<text x="822" y="70" text-anchor="middle" font-size="9.3" fill="#bcbcbc" font-family="Liberation Sans, Noto Sans CJK SC, sans-serif">参考信号</text>
<polyline points="657,172.6 657.1,159.3 657.2,172.6 657.3,158.8 657.4,172.6 657.5,157.8 657.6,172.6 657.7,156.3 657.8,172.6 657.9,154.6 658,172.6 658,152.6 658.1,172.6 658.2,150.3 658.3,172.6 658.4,147.7 658.5,172.6 658.6,144.9 658.7,172.6 658.8,142 658.9,172.6 659,138.8 659.1,172.6 659.2,135.4 659.3,172.6 659.4,131.8 659.5,172.6 659.6,128 659.7,172.6 659.8,124.1 659.9,172.6 659.9,120 660,172.6 660.1,115.7 660.2,172.6 660.3,111.2 660.4,172.6 660.5,106.6 660.6,172.6 660.7,101.9 660.8,172.6 660.9,101.9 661,172.6 661.1,112 661.2,172.6 661.3,122.1 661.4,172.6 661.5,132.2 661.6,172.6 661.6,142.3 661.8,172.6 661.8,152.4 661.9,172.6 662,162.5 662.1,172.6 662.2,172.6" fill="none" stroke="#f04aa0" stroke-width="0.42"/>
<path d="M662.2 172.6 H668.6" stroke="#c02878" stroke-width="0.9"/>
<polyline points="669.2,172.6 669.5,127.6 669.8,116.9 670.1,110.2 670.4,105.3 670.8,101.8 671.1,99.1 671.4,97.1 671.7,95.7 672,94.8 672.4,94.3 672.7,94.1 673,94.3 673.3,94.8 673.6,95.7 674,97.1 674.3,99.1 674.6,101.8 674.9,105.3 675.2,110.2 675.5,116.9 675.9,127.6 676.2,172.6 676.2,172.6 676.5,131.1 676.8,121.3 677.1,115 677.4,110.6 677.7,107.2 678,104.8 678.3,102.9 678.6,101.6 678.9,100.8 679.2,100.3 679.5,100.2 679.8,100.3 680.1,100.8 680.4,101.6 680.7,102.9 681,104.8 681.3,107.2 681.6,110.6 681.9,115 682.2,121.3 682.6,131.1 682.9,172.6 682.9,172.6 683.1,127.4 683.4,116.8 683.7,110 684,105.1 684.3,101.5 684.6,98.8 684.9,96.9 685.1,95.4 685.4,94.5 685.7,94 686,93.9 686.3,94 686.6,94.5 686.9,95.4 687.2,96.9 687.4,98.8 687.7,101.5 688,105.1 688.3,110 688.6,116.8 688.9,127.4 689.2,172.6 689.2,172.6 689.4,130.9 689.7,121 690,114.8 690.3,110.3 690.5,107 690.8,104.5 691.1,102.6 691.4,101.3 691.6,100.5 691.9,100 692.2,99.9 692.5,100 692.8,100.5 693,101.3 693.3,102.6 693.6,104.5 693.9,107 694.1,110.3 694.4,114.8 694.7,121 695,130.9 695.2,172.6 695.2,172.6 695.5,127.3 695.8,116.7 696.1,109.9 696.3,105 696.6,101.4 696.9,98.7 697.2,96.7 697.4,95.3 697.7,94.4 698,93.9 698.2,93.8 698.5,93.9 698.8,94.4 699.1,95.3 699.3,96.7 699.6,98.7 699.9,101.4 700.1,105 700.4,109.9 700.7,116.7 701,127.3 701.2,172.6 701.2,172.6 701.5,130.8 701.8,120.9 702,114.7 702.3,110.2 702.6,106.8 702.8,104.3 703.1,102.5 703.4,101.2 703.6,100.4 703.9,99.9 704.2,99.8 704.4,99.9 704.7,100.4 705,101.2 705.2,102.5 705.5,104.3 705.8,106.8 706,110.2 706.3,114.7 706.6,120.9 706.8,130.8 707.1,172.6 707.1,172.6 707.4,127.3 707.6,116.6 707.9,109.8 708.2,104.9 708.4,101.3 708.7,98.6 708.9,96.6 709.2,95.2 709.5,94.3 709.7,93.8 710,93.6 710.3,93.8 710.5,94.3 710.8,95.2 711,96.6 711.3,98.6 711.6,101.3 711.8,104.9 712.1,109.8 712.4,116.6 712.6,127.3 712.9,172.6 712.9,172.6 713.1,130.7 713.4,120.9 713.6,114.6 713.9,110.1 714.2,106.7 714.4,104.2 714.7,102.4 714.9,101.1 715.2,100.2 715.5,99.8 715.7,99.7 716,99.8 716.2,100.2 716.5,101.1 716.7,102.4 717,104.2 717.3,106.7 717.5,110.1 717.8,114.6 718,120.9 718.3,130.7 718.5,172.6 718.5,172.6 718.8,127.2 719,116.5 719.3,109.7 719.6,104.8 719.8,101.2 720.1,98.5 720.3,96.5 720.6,95.1 720.8,94.1 721.1,93.6 721.3,93.5 721.6,93.6 721.8,94.1 722.1,95.1 722.3,96.5 722.6,98.5 722.8,101.2 723.1,104.8 723.3,109.7 723.6,116.5 723.9,127.2 724.1,172.6 724.1,172.6 724.4,130.7 724.6,120.8 724.9,114.5 725.1,110 725.4,106.6 725.6,104.1 725.9,102.3 726.1,100.9 726.3,100.1 726.6,99.6 726.8,99.5 727.1,99.6 727.3,100.1 727.6,100.9 727.8,102.3 728.1,104.1 728.3,106.6 728.6,110 728.8,114.5 729.1,120.8 729.3,130.7 729.6,172.6 729.6,172.6 729.8,127.1 730.1,116.4 730.3,109.6 730.6,104.7 730.8,101.1 731.1,98.3 731.3,96.3 731.6,94.9 731.8,94 732,93.5 732.3,93.4 732.5,93.5 732.8,94 733,94.9 733.3,96.3 733.5,98.3 733.8,101.1 734,104.7 734.2,109.6 734.5,116.4 734.7,127.1 735,172.6 735,172.6 735.2,130.6 735.5,120.7 735.7,114.4 736,109.8 736.2,106.5 736.4,104 736.7,102.1 736.9,100.8 737.2,100 737.4,99.5 737.6,99.4 737.9,99.5 738.1,100 738.4,100.8 738.6,102.1 738.9,104 739.1,106.5 739.3,109.8 739.6,114.4 739.8,120.7 740.1,130.6 740.3,172.6 740.3,172.6 740.5,127.1 740.8,116.3 741,109.5 741.3,104.6 741.5,101 741.7,98.2 742,96.2 742.2,94.8 742.4,93.9 742.7,93.4 742.9,93.3 743.2,93.4 743.4,93.9 743.6,94.8 743.9,96.2 744.1,98.2 744.3,101 744.6,104.6 744.8,109.5 745.1,116.3 745.3,127.1 745.5,172.6 745.5,172.6 745.8,130.5 746,120.6 746.2,114.3 746.5,109.7 746.7,106.4 746.9,103.9 747.2,102 747.4,100.7 747.6,99.9 747.9,99.4 748.1,99.3 748.4,99.4 748.6,99.9 748.8,100.7 749.1,102 749.3,103.9 749.5,106.4 749.8,109.7 750,114.3 750.2,120.6 750.5,130.5 750.7,172.6 750.7,172.6 750.9,127 751.2,116.2 751.4,109.4 751.6,104.5 751.9,100.8 752.1,98.1 752.3,96.1 752.5,94.7 752.8,93.8 753,93.3 753.2,93.1 753.5,93.3 753.7,93.8 753.9,94.7 754.2,96.1 754.4,98.1 754.6,100.8 754.9,104.5 755.1,109.4 755.3,116.2 755.5,127 755.8,172.6 755.8,172.6 756,130.4 756.2,120.5 756.5,114.2 756.7,109.6 756.9,106.3 757.1,103.8 757.4,101.9 757.6,100.6 757.8,99.7 758.1,99.3 758.3,99.2 758.5,99.3 758.7,99.7 759,100.6 759.2,101.9 759.4,103.8 759.7,106.3 759.9,109.6 760.1,114.2 760.3,120.5 760.6,130.4 760.8,172.6 760.8,172.6 761,127 761.2,116.2 761.5,109.3 761.7,104.4 761.9,100.8 762.2,98.1 762.4,96 762.6,94.6 762.8,93.7 763.1,93.2 763.3,93.1 763.5,93.2 763.7,93.7 764,94.6 764.2,96 764.4,98.1 764.6,100.8 764.9,104.4 765.1,109.3 765.3,116.2 765.5,127 765.8,172.6 765.8,172.6 766,130.6 766.2,120.7 766.4,114.4 766.7,109.9 766.9,106.5 767.1,104 767.3,102.2 767.6,100.9 767.8,100 768,99.6 768.2,99.5 768.5,99.6 768.7,100 768.9,100.9 769.1,102.2 769.4,104 769.6,106.5 769.8,109.9 770,114.4 770.3,120.7 770.5,130.6 770.7,172.6 770.7,172.6 770.9,127.3 771.2,116.6 771.4,109.8 771.6,104.9 771.8,101.3 772.1,98.6 772.3,96.6 772.5,95.2 772.7,94.3 772.9,93.8 773.2,93.7 773.4,93.8 773.6,94.3 773.8,95.2 774.1,96.6 774.3,98.6 774.5,101.3 774.7,104.9 775,109.8 775.2,116.6 775.4,127.3 775.6,172.6 775.6,172.6 775.8,130.9 776.1,121.1 776.3,114.9 776.5,110.4 776.7,107.1 776.9,104.6 777.2,102.8 777.4,101.5 777.6,100.6 777.8,100.2 778.1,100 778.3,100.2 778.5,100.6 778.7,101.5 778.9,102.8 779.2,104.6 779.4,107.1 779.6,110.4 779.8,114.9 780,121.1 780.3,130.9 780.5,172.6 780.5,172.6 780.7,128 780.9,117.5 781.1,110.8 781.4,106.1 781.6,102.5 781.8,99.8 782,97.9 782.2,96.5 782.5,95.6 782.7,95.1 782.9,95 783.1,95.1 783.3,95.6 783.6,96.5 783.8,97.9 784,99.8 784.2,102.5 784.4,106.1 784.7,110.8 784.9,117.5 785.1,128 785.3,172.6 785.3,172.6 785.5,132.6 785.8,123.1 786,117.1 786.2,112.8 786.4,109.6 786.6,107.3 786.8,105.5 787.1,104.2 787.3,103.4 787.5,103 787.7,102.9 787.9,103 788.2,103.4 788.4,104.2 788.6,105.5 788.8,107.3 789,109.6 789.2,112.8 789.5,117.1 789.7,123.1 789.9,132.6 790.1,172.6 790.1,172.6 790.3,130.4 790.5,120.4 790.8,114 791,109.5 791.2,106.1 791.4,103.6 791.6,101.8 791.8,100.4 792.1,99.6 792.3,99.1 792.5,99 792.7,99.1 792.9,99.6 793.1,100.4 793.4,101.8 793.6,103.6 793.8,106.1 794,109.5 794.2,114 794.4,120.4 794.7,130.4 794.9,172.6 794.9,172.6 795.1,134.8 795.3,125.9 795.5,120.3 795.7,116.2 795.9,113.2 796.2,110.9 796.4,109.3 796.6,108.1 796.8,107.3 797,106.9 797.2,106.8 797.4,106.9 797.6,107.3 797.9,108.1 798.1,109.3 798.3,110.9 798.5,113.2 798.7,116.2 798.9,120.3 799.1,125.9 799.4,134.8 799.6,172.6 799.6,172.6 799.8,133 800,123.6 800.2,117.6 800.4,113.4 800.6,110.2 800.8,107.9 801.1,106.1 801.3,104.9 801.5,104.1 801.7,103.6 801.9,103.5 802.1,103.6 802.3,104.1 802.5,104.9 802.7,106.1 803,107.9 803.2,110.2 803.4,113.4 803.6,117.6 803.8,123.6 804,133 804.2,172.6 804.2,172.6 804.4,136.8 804.6,128.4 804.8,123 805.1,119.2 805.3,116.3 805.5,114.2 805.7,112.6 805.9,111.5 806.1,110.8 806.3,110.4 806.5,110.3 806.7,110.4 806.9,110.8 807.1,111.5 807.4,112.6 807.6,114.2 807.8,116.3 808,119.2 808.2,123 808.4,128.4 808.6,136.8 808.8,172.6 808.8,172.6 809,135.6 809.2,126.9 809.4,121.3 809.6,117.4 809.9,114.4 810.1,112.2 810.3,110.6 810.5,109.4 810.7,108.7 810.9,108.3 811.1,108.2 811.3,108.3 811.5,108.7 811.7,109.4 811.9,110.6 812.1,112.2 812.3,114.4 812.5,117.4 812.7,121.3 813,126.9 813.2,135.6 813.4,172.6 813.4,172.6 813.6,139 813.8,131.1 814,126 814.2,122.4 814.4,119.7 814.6,117.7 814.8,116.2 815,115.2 815.2,114.5 815.4,114.1 815.6,114 815.8,114.1 816,114.5 816.2,115.2 816.4,116.2 816.6,117.7 816.8,119.7 817,122.4 817.2,126 817.5,131.1 817.7,139 817.9,172.6 817.9,172.6 818.1,138.4 818.3,130.4 818.5,125.2 818.7,121.6 818.9,118.8 819.1,116.8 819.3,115.3 819.5,114.2 819.7,113.5 819.9,113.2 820.1,113.1 820.3,113.2 820.5,113.5 820.7,114.2 820.9,115.3 821.1,116.8 821.3,118.8 821.5,121.6 821.7,125.2 821.9,130.4 822.1,138.4 822.3,172.6 822.3,172.6 822.5,140.1 822.7,132.5 822.9,127.6 823.1,124.1 823.3,121.5 823.5,119.6 823.7,118.1 823.9,117.1 824.1,116.5 824.3,116.1 824.5,116 824.7,116.1 824.9,116.5 825.1,117.1 825.3,118.1 825.5,119.6 825.7,121.5 825.9,124.1 826.1,127.6 826.3,132.5 826.5,140.1 826.7,172.6 826.7,172.6 826.9,136.8 827.1,128.4 827.3,123 827.5,119.2 827.7,116.4 827.9,114.2 828.1,112.6 828.3,111.5 828.5,110.8 828.7,110.4 828.9,110.3 829.1,110.4 829.3,110.8 829.5,111.5 829.7,112.6 829.9,114.2 830.1,116.4 830.3,119.2 830.5,123 830.7,128.4 830.9,136.8 831.1,172.6 831.1,172.6 831.3,136 831.5,127.4 831.6,121.9 831.8,118 832,115.1 832.2,112.9 832.4,111.3 832.6,110.1 832.8,109.4 833,109 833.2,108.9 833.4,109 833.6,109.4 833.8,110.1 834,111.3 834.2,112.9 834.4,115.1 834.6,118 834.8,121.9 835,127.4 835.2,136 835.4,172.6 835.4,172.6 835.6,131.6 835.8,121.9 836,115.7 836.2,111.3 836.4,108.1 836.6,105.6 836.8,103.8 837,102.5 837.2,101.7 837.4,101.3 837.5,101.1 837.7,101.3 837.9,101.7 838.1,102.5 838.3,103.8 838.5,105.6 838.7,108.1 838.9,111.3 839.1,115.7 839.3,121.9 839.5,131.6 839.7,172.6 839.7,172.6 839.9,132.2 840.1,122.7 840.3,116.6 840.5,112.3 840.7,109.1 840.9,106.7 841.1,104.9 841.3,103.6 841.5,102.8 841.7,102.4 841.9,102.3 842,102.4 842.2,102.8 842.4,103.6 842.6,104.9 842.8,106.7 843,109.1 843.2,112.3 843.4,116.6 843.6,122.7 843.8,132.2 844,172.6 844,172.6 844.2,127.8 844.4,117.3 844.6,110.6 844.8,105.8 845,102.2 845.2,99.5 845.4,97.6 845.6,96.2 845.7,95.3 845.9,94.8 846.1,94.6 846.3,94.8 846.5,95.3 846.7,96.2 846.9,97.6 847.1,99.5 847.3,102.2 847.5,105.8 847.7,110.6 847.9,117.3 848.1,127.8 848.3,172.6 848.3,172.6 848.5,130 848.7,120 848.9,113.6 849,109 849.2,105.6 849.4,103.1 849.6,101.2 849.8,99.9 850,99 850.2,98.6 850.4,98.4 850.6,98.6 850.8,99 851,99.9 851.2,101.2 851.4,103.1 851.6,105.6 851.8,109 851.9,113.6 852.1,120 852.3,130 852.5,172.6 852.5,172.6 852.7,125.9 852.9,114.9 853.1,107.9 853.3,102.9 853.5,99.1 853.7,96.3 853.9,94.3 854.1,92.8 854.3,91.9 854.4,91.4 854.6,91.2 854.8,91.4 855,91.9 855.2,92.8 855.4,94.3 855.6,96.3 855.8,99.1 856,102.9 856.2,107.9 856.4,114.9 856.6,125.9 856.8,172.6 856.8,172.6 856.9,128.6 857.1,118.3 857.3,111.6 857.5,106.9 857.7,103.4 857.9,100.8 858.1,98.8 858.3,97.5 858.5,96.6 858.7,96.1 858.9,96 859.1,96.1 859.2,96.6 859.4,97.5 859.6,98.8 859.8,100.8 860,103.4 860.2,106.9 860.4,111.6 860.6,118.3 860.8,128.6 861,172.6 861,172.6 861.2,124.7 861.3,113.4 861.5,106.1 861.7,101 861.9,97.2 862.1,94.3 862.3,92.2 862.5,90.7 862.7,89.7 862.9,89.2 863.1,89.1 863.3,89.2 863.4,89.7 863.6,90.7 863.8,92.2 864,94.3 864.2,97.2 864.4,101 864.6,106.1 864.8,113.4 865,124.7 865.2,172.6 865.2,172.6 865.3,128 865.5,117.4 865.7,110.7 865.9,105.9 866.1,102.4 866.3,99.7 866.5,97.7 866.7,96.3 866.9,95.4 867.1,95 867.2,94.8 867.4,95 867.6,95.4 867.8,96.3 868,97.7 868.2,99.7 868.4,102.4 868.6,105.9 868.8,110.7 869,117.4 869.1,128 869.3,172.6 869.3,172.6 869.5,124.3 869.7,112.9 869.9,105.7 870.1,100.5 870.3,96.6 870.5,93.7 870.7,91.6 870.8,90.1 871,89.1 871.2,88.6 871.4,88.5 871.6,88.6 871.8,89.1 872,90.1 872.2,91.6 872.4,93.7 872.5,96.6 872.7,100.5 872.9,105.7 873.1,112.9 873.3,124.3 873.5,172.6 873.5,172.6 873.7,127.6 873.9,117 874.1,110.3 874.2,105.4 874.4,101.8 874.6,99.2 874.8,97.2 875,95.8 875.2,94.9 875.4,94.4 875.6,94.2 875.8,94.4 875.9,94.9 876.1,95.8 876.3,97.2 876.5,99.2 876.7,101.8 876.9,105.4 877.1,110.3 877.3,117 877.4,127.6 877.6,172.6 877.6,172.6 877.8,124 878,112.5 878.2,105.2 878.4,100 878.6,96.1 878.8,93.2 878.9,91 879.1,89.5 879.3,88.5 879.5,88 879.7,87.9 879.9,88 880.1,88.5 880.3,89.5 880.4,91 880.6,93.2 880.8,96.1 881,100 881.2,105.2 881.4,112.5 881.6,124 881.8,172.6 881.8,172.6 882,127.3 882.1,116.6 882.3,109.8 882.5,104.9 882.7,101.3 882.9,98.6 883.1,96.6 883.3,95.2 883.4,94.3 883.6,93.8 883.8,93.6 884,93.8 884.2,94.3 884.4,95.2 884.6,96.6 884.8,98.6 884.9,101.3 885.1,104.9 885.3,109.8 885.5,116.6 885.7,127.3 885.9,172.6 885.9,172.6 886.1,123.6 886.2,112.1 886.4,104.7 886.6,99.5 886.8,95.5 887,92.6 887.2,90.5 887.4,88.9 887.6,87.9 887.7,87.4 887.9,87.3 888.1,87.4 888.3,87.9 888.5,88.9 888.7,90.5 888.9,92.6 889,95.5 889.2,99.5 889.4,104.7 889.6,112.1 889.8,123.6 890,172.6 890,172.6 890.2,127 890.3,116.2 890.5,109.4 890.7,104.5 890.9,100.8 891.1,98.1 891.3,96.1 891.5,94.7 891.6,93.7 891.8,93.3 892,93.1 892.2,93.3 892.4,93.7 892.6,94.7 892.8,96.1 892.9,98.1 893.1,100.8 893.3,104.5 893.5,109.4 893.7,116.2 893.9,127 894.1,172.6 894.1,172.6 894.2,123.4 894.4,111.7 894.6,104.3 894.8,99.1 895,95.1 895.2,92.2 895.3,90 895.5,88.5 895.7,87.5 895.9,87 896.1,86.8 896.3,87 896.5,87.5 896.6,88.5 896.8,90 897,92.2 897.2,95.1 897.4,99.1 897.6,104.3 897.8,111.7 897.9,123.4 898.1,172.6 898.1,172.6 898.3,126.7 898.5,115.9 898.7,109 898.9,104.1 899,100.4 899.2,97.7 899.4,95.6 899.6,94.2 899.8,93.3 900,92.8 900.1,92.7 900.3,92.8 900.5,93.3 900.7,94.2 900.9,95.6 901.1,97.7 901.3,100.4 901.4,104.1 901.6,109 901.8,115.9 902,126.7 902.2,172.6 902.2,172.6 902.4,123.1 902.5,111.4 902.7,104 902.9,98.7 903.1,94.7 903.3,91.8 903.5,89.6 903.6,88 903.8,87 904,86.5 904.2,86.4 904.4,86.5 904.6,87 904.8,88 904.9,89.6 905.1,91.8 905.3,94.7 905.5,98.7 905.7,104 905.9,111.4 906,123.1 906.2,172.6 906.2,172.6 906.4,126.4 906.6,115.6 906.8,108.6 907,103.7 907.1,100 907.3,97.2 907.5,95.2 907.7,93.8 907.9,92.8 908.1,92.3 908.2,92.2 908.4,92.3 908.6,92.8 908.8,93.8 909,95.2 909.2,97.2 909.3,100 909.5,103.7 909.7,108.6 909.9,115.6 910.1,126.4 910.3,172.6 910.3,172.6 910.4,122.8 910.6,111.1 910.8,103.6 911,98.3 911.2,94.3 911.4,91.3 911.5,89.1 911.7,87.6 911.9,86.6 912.1,86 912.3,85.9 912.5,86 912.6,86.6 912.8,87.6 913,89.1 913.2,91.3 913.4,94.3 913.6,98.3 913.7,103.6 913.9,111.1 914.1,122.8 914.3,172.6 914.3,172.6 914.5,126.2 914.7,115.3 914.8,108.3 915,103.3 915.2,99.6 915.4,96.8 915.6,94.8 915.8,93.3 915.9,92.4 916.1,91.9 916.3,91.8 916.5,91.9 916.7,92.4 916.9,93.3 917,94.8 917.2,96.8 917.4,99.6 917.6,103.3 917.8,108.3 918,115.3 918.1,126.2 918.3,172.6 918.3,172.6 918.5,122.6 918.7,110.9 918.9,103.3 919.1,98 919.2,94 919.4,91 919.6,88.8 919.8,87.3 920,86.2 920.1,85.7 920.3,85.6 920.5,85.7 920.7,86.2 920.9,87.3 921.1,88.8 921.2,91 921.4,94 921.6,98 921.8,103.3 922,110.9 922.2,122.6 922.3,172.6 922.3,172.6 922.5,126 922.7,115.1 922.9,108.1 923.1,103.1 923.2,99.4 923.4,96.6 923.6,94.5 923.8,93.1 924,92.1 924.2,91.6 924.3,91.5 924.5,91.6 924.7,92.1 924.9,93.1 925.1,94.5 925.3,96.6 925.4,99.4 925.6,103.1 925.8,108.1 926,115.1 926.2,126 926.3,172.6 926.3,172.6 926.5,122.5 926.7,110.7 926.9,103.1 927.1,97.7 927.3,93.7 927.4,90.8 927.6,88.5 927.8,87 928,86 928.2,85.4 928.3,85.3 928.5,85.4 928.7,86 928.9,87 929.1,88.5 929.3,90.8 929.4,93.7 929.6,97.7 929.8,103.1 930,110.7 930.2,122.5 930.3,172.6 930.3,172.6 930.5,125.9 930.7,114.9 930.9,107.8 931.1,102.8 931.3,99.1 931.4,96.3 931.6,94.3 931.8,92.8 932,91.9 932.2,91.4 932.3,91.2 932.5,91.4 932.7,91.9 932.9,92.8 933.1,94.3 933.3,96.3 933.4,99.1 933.6,102.8 933.8,107.8 934,114.9 934.2,125.9 934.3,172.6 934.3,172.6 934.5,122.3 934.7,110.5 934.9,102.9 935.1,97.5 935.2,93.5 935.4,90.5 935.6,88.3 935.8,86.7 936,85.7 936.2,85.2 936.3,85 936.5,85.2 936.7,85.7 936.9,86.7 937.1,88.3 937.2,90.5 937.4,93.5 937.6,97.5 937.8,102.9 938,110.5 938.1,122.3 938.3,172.6 938.3,172.6 938.5,125.7 938.7,114.7 938.9,107.6 939.1,102.6 939.2,98.9 939.4,96.1 939.6,94 939.8,92.5 940,91.6 940.1,91.1 940.3,90.9 940.5,91.1 940.7,91.6 940.9,92.5 941,94 941.2,96.1 941.4,98.9 941.6,102.6 941.8,107.6 941.9,114.7 942.1,125.7 942.3,172.6 942.3,172.6 942.5,122.2 942.7,110.3 942.8,102.7 943,97.3 943.2,93.2 943.4,90.2 943.6,88 943.8,86.4 943.9,85.4 944.1,84.9 944.3,84.7 944.5,84.9 944.7,85.4 944.8,86.4 945,88 945.2,90.2 945.4,93.2 945.6,97.3 945.7,102.7 945.9,110.3 946.1,122.2 946.3,172.6 946.3,172.6 946.5,125.6 946.6,114.5 946.8,107.4 947,102.4 947.2,98.6 947.4,95.8 947.5,93.7 947.7,92.3 947.9,91.3 948.1,90.8 948.3,90.7 948.4,90.8 948.6,91.3 948.8,92.3 949,93.7 949.2,95.8 949.3,98.6 949.5,102.4 949.7,107.4 949.9,114.5 950.1,125.6 950.2,172.6 950.2,172.6 950.4,122 950.6,110.1 950.8,102.5 951,97 951.1,93 951.3,90 951.5,87.7 951.7,86.2 951.9,85.1 952,84.6 952.2,84.5 952.4,84.6 952.6,85.1 952.8,86.2 953,87.7 953.1,90 953.3,93 953.5,97 953.7,102.5 953.9,110.1 954,122 954.2,172.6 954.2,172.6 954.4,125.4 954.6,114.3 954.8,107.2 954.9,102.1 955.1,98.4 955.3,95.5 955.5,93.5 955.7,92 955.8,91 956,90.5 956.2,90.4 956.4,90.5 956.6,91 956.7,92 956.9,93.5 957.1,95.5 957.3,98.4 957.5,102.1 957.6,107.2 957.8,114.3 958,125.4 958.2,172.6 958.2,172.6 958.4,121.8 958.5,109.9 958.7,102.2 958.9,96.8 959.1,92.7 959.3,89.7 959.4,87.5 959.6,85.9 959.8,84.9 960,84.3 960.2,84.2 960.3,84.3 960.5,84.9 960.7,85.9 960.9,87.5 961,89.7 961.2,92.7 961.4,96.8 961.6,102.2 961.8,109.9 961.9,121.8 962.1,172.6 962.1,172.6 962.3,125.3 962.5,114.1 962.7,107 962.8,101.9 963,98.1 963.2,95.3 963.4,93.2 963.6,91.7 963.7,90.8 963.9,90.3 964.1,90.1 964.3,90.3 964.5,90.8 964.6,91.7 964.8,93.2 965,95.3 965.2,98.1 965.4,101.9 965.5,107 965.7,114.1 965.9,125.3 966.1,172.6 966.1,172.6 966.3,121.7 966.4,109.7 966.6,102 966.8,96.6 967,92.5 967.2,89.5 967.3,87.2 967.5,85.6 967.7,84.6 967.9,84.1 968.1,83.9 968.2,84.1 968.4,84.6 968.6,85.6 968.8,87.2 969,89.5 969.1,92.5 969.3,96.6 969.5,102 969.7,109.7 969.8,121.7 970,172.6 970,172.6 970.2,125.1 970.4,113.9 970.6,106.8 970.7,101.7 970.9,97.9 971.1,95 971.3,92.9 971.5,91.5 971.6,90.5 971.8,90 972,89.8 972.2,90 972.4,90.5 972.5,91.5 972.7,92.9 972.9,95 973.1,97.9 973.3,101.7 973.4,106.8 973.6,113.9 973.8,125.1 974,172.6 974,172.6 974.1,121.5 974.3,109.5 974.5,101.8 974.7,96.3 974.9,92.3 975,89.2 975.2,87 975.4,85.4 975.6,84.3 975.8,83.8 975.9,83.6 976.1,83.8 976.3,84.3 976.5,85.4 976.7,87 976.8,89.2 977,92.3 977.2,96.3 977.4,101.8 977.6,109.5 977.7,121.5 977.9,172.6 977.9,172.6 978.1,124.9 978.3,113.7 978.4,106.5 978.6,101.4 978.8,97.6 979,94.8 979.2,92.7 979.3,91.2 979.5,90.2 979.7,89.7 979.9,89.6 980.1,89.7 980.2,90.2 980.4,91.2 980.6,92.7 980.8,94.8 981,97.6 981.1,101.4 981.3,106.5 981.5,113.7 981.7,124.9 981.8,172.6 981.8,172.6 982,121.4 982.2,109.3 982.4,101.6 982.6,96.1 982.7,92 982.9,88.9 983.1,86.7 983.3,85.1 983.5,84.1 983.6,83.5 983.8,83.4 984,83.5 984.2,84.1 984.3,85.1 984.5,86.7 984.7,88.9 984.9,92 985.1,96.1 985.2,101.6 985.4,109.3 985.6,121.4 985.8,172.6 985.8,172.6 986,124.8 986.1,113.6 986.3,106.4 986.5,101.3 986.7,97.5 986.8,94.6 987,92.5 987.2,91 987.4,90.1 987.6,89.5 987.7,89.4 987.9,89.5 988.1,90.1 988.3,91 988.5,92.5 988.6,94.6 988.8,97.5 989,101.3 989.2,106.4 989.3,113.6 989.5,124.8 989.7,172.6" fill="none" stroke="#4a0c2e" stroke-opacity="0.55" stroke-width="1.0" stroke-linejoin="round"/>
<polyline points="668.6,172.6 668.9,127.6 669.2,116.9 669.5,110.2 669.8,105.3 670.2,101.8 670.5,99.1 670.8,97.1 671.1,95.7 671.4,94.8 671.8,94.3 672.1,94.1 672.4,94.3 672.7,94.8 673,95.7 673.4,97.1 673.7,99.1 674,101.8 674.3,105.3 674.6,110.2 674.9,116.9 675.3,127.6 675.6,172.6 675.6,172.6 675.9,131.1 676.2,121.3 676.5,115 676.8,110.6 677.1,107.2 677.4,104.8 677.7,102.9 678,101.6 678.3,100.8 678.6,100.3 678.9,100.2 679.2,100.3 679.5,100.8 679.8,101.6 680.1,102.9 680.4,104.8 680.7,107.2 681,110.6 681.3,115 681.6,121.3 682,131.1 682.3,172.6 682.3,172.6 682.5,127.4 682.8,116.8 683.1,110 683.4,105.1 683.7,101.5 684,98.8 684.3,96.9 684.5,95.4 684.8,94.5 685.1,94 685.4,93.9 685.7,94 686,94.5 686.3,95.4 686.6,96.9 686.8,98.8 687.1,101.5 687.4,105.1 687.7,110 688,116.8 688.3,127.4 688.6,172.6 688.6,172.6 688.8,130.9 689.1,121 689.4,114.8 689.7,110.3 689.9,107 690.2,104.5 690.5,102.6 690.8,101.3 691,100.5 691.3,100 691.6,99.9 691.9,100 692.2,100.5 692.4,101.3 692.7,102.6 693,104.5 693.3,107 693.5,110.3 693.8,114.8 694.1,121 694.4,130.9 694.6,172.6 694.6,172.6 694.9,127.3 695.2,116.7 695.5,109.9 695.7,105 696,101.4 696.3,98.7 696.6,96.7 696.8,95.3 697.1,94.4 697.4,93.9 697.6,93.8 697.9,93.9 698.2,94.4 698.5,95.3 698.7,96.7 699,98.7 699.3,101.4 699.5,105 699.8,109.9 700.1,116.7 700.4,127.3 700.6,172.6 700.6,172.6 700.9,130.8 701.2,120.9 701.4,114.7 701.7,110.2 702,106.8 702.2,104.3 702.5,102.5 702.8,101.2 703,100.4 703.3,99.9 703.6,99.8 703.8,99.9 704.1,100.4 704.4,101.2 704.6,102.5 704.9,104.3 705.2,106.8 705.4,110.2 705.7,114.7 706,120.9 706.2,130.8 706.5,172.6 706.5,172.6 706.8,127.3 707,116.6 707.3,109.8 707.6,104.9 707.8,101.3 708.1,98.6 708.3,96.6 708.6,95.2 708.9,94.3 709.1,93.8 709.4,93.6 709.7,93.8 709.9,94.3 710.2,95.2 710.4,96.6 710.7,98.6 711,101.3 711.2,104.9 711.5,109.8 711.8,116.6 712,127.3 712.3,172.6 712.3,172.6 712.5,130.7 712.8,120.9 713,114.6 713.3,110.1 713.6,106.7 713.8,104.2 714.1,102.4 714.3,101.1 714.6,100.2 714.9,99.8 715.1,99.7 715.4,99.8 715.6,100.2 715.9,101.1 716.1,102.4 716.4,104.2 716.7,106.7 716.9,110.1 717.2,114.6 717.4,120.9 717.7,130.7 717.9,172.6 717.9,172.6 718.2,127.2 718.4,116.5 718.7,109.7 719,104.8 719.2,101.2 719.5,98.5 719.7,96.5 720,95.1 720.2,94.1 720.5,93.6 720.7,93.5 721,93.6 721.2,94.1 721.5,95.1 721.7,96.5 722,98.5 722.2,101.2 722.5,104.8 722.7,109.7 723,116.5 723.3,127.2 723.5,172.6 723.5,172.6 723.8,130.7 724,120.8 724.3,114.5 724.5,110 724.8,106.6 725,104.1 725.3,102.3 725.5,100.9 725.7,100.1 726,99.6 726.2,99.5 726.5,99.6 726.7,100.1 727,100.9 727.2,102.3 727.5,104.1 727.7,106.6 728,110 728.2,114.5 728.5,120.8 728.7,130.7 729,172.6 729,172.6 729.2,127.1 729.5,116.4 729.7,109.6 730,104.7 730.2,101.1 730.5,98.3 730.7,96.3 731,94.9 731.2,94 731.4,93.5 731.7,93.4 731.9,93.5 732.2,94 732.4,94.9 732.7,96.3 732.9,98.3 733.2,101.1 733.4,104.7 733.6,109.6 733.9,116.4 734.1,127.1 734.4,172.6 734.4,172.6 734.6,130.6 734.9,120.7 735.1,114.4 735.4,109.8 735.6,106.5 735.8,104 736.1,102.1 736.3,100.8 736.6,100 736.8,99.5 737,99.4 737.3,99.5 737.5,100 737.8,100.8 738,102.1 738.3,104 738.5,106.5 738.7,109.8 739,114.4 739.2,120.7 739.5,130.6 739.7,172.6 739.7,172.6 739.9,127.1 740.2,116.3 740.4,109.5 740.7,104.6 740.9,101 741.1,98.2 741.4,96.2 741.6,94.8 741.8,93.9 742.1,93.4 742.3,93.3 742.6,93.4 742.8,93.9 743,94.8 743.3,96.2 743.5,98.2 743.7,101 744,104.6 744.2,109.5 744.5,116.3 744.7,127.1 744.9,172.6 744.9,172.6 745.2,130.5 745.4,120.6 745.6,114.3 745.9,109.7 746.1,106.4 746.3,103.9 746.6,102 746.8,100.7 747,99.9 747.3,99.4 747.5,99.3 747.8,99.4 748,99.9 748.2,100.7 748.5,102 748.7,103.9 748.9,106.4 749.2,109.7 749.4,114.3 749.6,120.6 749.9,130.5 750.1,172.6 750.1,172.6 750.3,127 750.6,116.2 750.8,109.4 751,104.5 751.3,100.8 751.5,98.1 751.7,96.1 751.9,94.7 752.2,93.8 752.4,93.3 752.6,93.1 752.9,93.3 753.1,93.8 753.3,94.7 753.6,96.1 753.8,98.1 754,100.8 754.3,104.5 754.5,109.4 754.7,116.2 754.9,127 755.2,172.6 755.2,172.6 755.4,130.4 755.6,120.5 755.9,114.2 756.1,109.6 756.3,106.3 756.5,103.8 756.8,101.9 757,100.6 757.2,99.7 757.5,99.3 757.7,99.2 757.9,99.3 758.1,99.7 758.4,100.6 758.6,101.9 758.8,103.8 759.1,106.3 759.3,109.6 759.5,114.2 759.7,120.5 760,130.4 760.2,172.6 760.2,172.6 760.4,127 760.6,116.2 760.9,109.3 761.1,104.4 761.3,100.8 761.6,98.1 761.8,96 762,94.6 762.2,93.7 762.5,93.2 762.7,93.1 762.9,93.2 763.1,93.7 763.4,94.6 763.6,96 763.8,98.1 764,100.8 764.3,104.4 764.5,109.3 764.7,116.2 764.9,127 765.2,172.6 765.2,172.6 765.4,130.6 765.6,120.7 765.8,114.4 766.1,109.9 766.3,106.5 766.5,104 766.7,102.2 767,100.9 767.2,100 767.4,99.6 767.6,99.5 767.9,99.6 768.1,100 768.3,100.9 768.5,102.2 768.8,104 769,106.5 769.2,109.9 769.4,114.4 769.7,120.7 769.9,130.6 770.1,172.6 770.1,172.6 770.3,127.3 770.6,116.6 770.8,109.8 771,104.9 771.2,101.3 771.5,98.6 771.7,96.6 771.9,95.2 772.1,94.3 772.3,93.8 772.6,93.7 772.8,93.8 773,94.3 773.2,95.2 773.5,96.6 773.7,98.6 773.9,101.3 774.1,104.9 774.4,109.8 774.6,116.6 774.8,127.3 775,172.6 775,172.6 775.2,130.9 775.5,121.1 775.7,114.9 775.9,110.4 776.1,107.1 776.3,104.6 776.6,102.8 776.8,101.5 777,100.6 777.2,100.2 777.5,100 777.7,100.2 777.9,100.6 778.1,101.5 778.3,102.8 778.6,104.6 778.8,107.1 779,110.4 779.2,114.9 779.4,121.1 779.7,130.9 779.9,172.6 779.9,172.6 780.1,128 780.3,117.5 780.5,110.8 780.8,106.1 781,102.5 781.2,99.8 781.4,97.9 781.6,96.5 781.9,95.6 782.1,95.1 782.3,95 782.5,95.1 782.7,95.6 783,96.5 783.2,97.9 783.4,99.8 783.6,102.5 783.8,106.1 784.1,110.8 784.3,117.5 784.5,128 784.7,172.6 784.7,172.6 784.9,132.6 785.2,123.1 785.4,117.1 785.6,112.8 785.8,109.6 786,107.3 786.2,105.5 786.5,104.2 786.7,103.4 786.9,103 787.1,102.9 787.3,103 787.6,103.4 787.8,104.2 788,105.5 788.2,107.3 788.4,109.6 788.6,112.8 788.9,117.1 789.1,123.1 789.3,132.6 789.5,172.6 789.5,172.6 789.7,130.4 789.9,120.4 790.2,114 790.4,109.5 790.6,106.1 790.8,103.6 791,101.8 791.2,100.4 791.5,99.6 791.7,99.1 791.9,99 792.1,99.1 792.3,99.6 792.5,100.4 792.8,101.8 793,103.6 793.2,106.1 793.4,109.5 793.6,114 793.8,120.4 794.1,130.4 794.3,172.6 794.3,172.6 794.5,134.8 794.7,125.9 794.9,120.3 795.1,116.2 795.3,113.2 795.6,110.9 795.8,109.3 796,108.1 796.2,107.3 796.4,106.9 796.6,106.8 796.8,106.9 797,107.3 797.3,108.1 797.5,109.3 797.7,110.9 797.9,113.2 798.1,116.2 798.3,120.3 798.5,125.9 798.8,134.8 799,172.6 799,172.6 799.2,133 799.4,123.6 799.6,117.6 799.8,113.4 800,110.2 800.2,107.9 800.5,106.1 800.7,104.9 800.9,104.1 801.1,103.6 801.3,103.5 801.5,103.6 801.7,104.1 801.9,104.9 802.1,106.1 802.4,107.9 802.6,110.2 802.8,113.4 803,117.6 803.2,123.6 803.4,133 803.6,172.6 803.6,172.6 803.8,136.8 804,128.4 804.2,123 804.5,119.2 804.7,116.3 804.9,114.2 805.1,112.6 805.3,111.5 805.5,110.8 805.7,110.4 805.9,110.3 806.1,110.4 806.3,110.8 806.5,111.5 806.8,112.6 807,114.2 807.2,116.3 807.4,119.2 807.6,123 807.8,128.4 808,136.8 808.2,172.6 808.2,172.6 808.4,135.6 808.6,126.9 808.8,121.3 809,117.4 809.3,114.4 809.5,112.2 809.7,110.6 809.9,109.4 810.1,108.7 810.3,108.3 810.5,108.2 810.7,108.3 810.9,108.7 811.1,109.4 811.3,110.6 811.5,112.2 811.7,114.4 811.9,117.4 812.1,121.3 812.4,126.9 812.6,135.6 812.8,172.6 812.8,172.6 813,139 813.2,131.1 813.4,126 813.6,122.4 813.8,119.7 814,117.7 814.2,116.2 814.4,115.2 814.6,114.5 814.8,114.1 815,114 815.2,114.1 815.4,114.5 815.6,115.2 815.8,116.2 816,117.7 816.2,119.7 816.4,122.4 816.6,126 816.9,131.1 817.1,139 817.3,172.6 817.3,172.6 817.5,138.4 817.7,130.4 817.9,125.2 818.1,121.6 818.3,118.8 818.5,116.8 818.7,115.3 818.9,114.2 819.1,113.5 819.3,113.2 819.5,113.1 819.7,113.2 819.9,113.5 820.1,114.2 820.3,115.3 820.5,116.8 820.7,118.8 820.9,121.6 821.1,125.2 821.3,130.4 821.5,138.4 821.7,172.6 821.7,172.6 821.9,140.1 822.1,132.5 822.3,127.6 822.5,124.1 822.7,121.5 822.9,119.6 823.1,118.1 823.3,117.1 823.5,116.5 823.7,116.1 823.9,116 824.1,116.1 824.3,116.5 824.5,117.1 824.7,118.1 824.9,119.6 825.1,121.5 825.3,124.1 825.5,127.6 825.7,132.5 825.9,140.1 826.1,172.6 826.1,172.6 826.3,136.8 826.5,128.4 826.7,123 826.9,119.2 827.1,116.4 827.3,114.2 827.5,112.6 827.7,111.5 827.9,110.8 828.1,110.4 828.3,110.3 828.5,110.4 828.7,110.8 828.9,111.5 829.1,112.6 829.3,114.2 829.5,116.4 829.7,119.2 829.9,123 830.1,128.4 830.3,136.8 830.5,172.6 830.5,172.6 830.7,136 830.9,127.4 831,121.9 831.2,118 831.4,115.1 831.6,112.9 831.8,111.3 832,110.1 832.2,109.4 832.4,109 832.6,108.9 832.8,109 833,109.4 833.2,110.1 833.4,111.3 833.6,112.9 833.8,115.1 834,118 834.2,121.9 834.4,127.4 834.6,136 834.8,172.6 834.8,172.6 835,131.6 835.2,121.9 835.4,115.7 835.6,111.3 835.8,108.1 836,105.6 836.2,103.8 836.4,102.5 836.6,101.7 836.8,101.3 836.9,101.1 837.1,101.3 837.3,101.7 837.5,102.5 837.7,103.8 837.9,105.6 838.1,108.1 838.3,111.3 838.5,115.7 838.7,121.9 838.9,131.6 839.1,172.6 839.1,172.6 839.3,132.2 839.5,122.7 839.7,116.6 839.9,112.3 840.1,109.1 840.3,106.7 840.5,104.9 840.7,103.6 840.9,102.8 841.1,102.4 841.3,102.3 841.4,102.4 841.6,102.8 841.8,103.6 842,104.9 842.2,106.7 842.4,109.1 842.6,112.3 842.8,116.6 843,122.7 843.2,132.2 843.4,172.6 843.4,172.6 843.6,127.8 843.8,117.3 844,110.6 844.2,105.8 844.4,102.2 844.6,99.5 844.8,97.6 845,96.2 845.1,95.3 845.3,94.8 845.5,94.6 845.7,94.8 845.9,95.3 846.1,96.2 846.3,97.6 846.5,99.5 846.7,102.2 846.9,105.8 847.1,110.6 847.3,117.3 847.5,127.8 847.7,172.6 847.7,172.6 847.9,130 848.1,120 848.3,113.6 848.4,109 848.6,105.6 848.8,103.1 849,101.2 849.2,99.9 849.4,99 849.6,98.6 849.8,98.4 850,98.6 850.2,99 850.4,99.9 850.6,101.2 850.8,103.1 851,105.6 851.2,109 851.3,113.6 851.5,120 851.7,130 851.9,172.6 851.9,172.6 852.1,125.9 852.3,114.9 852.5,107.9 852.7,102.9 852.9,99.1 853.1,96.3 853.3,94.3 853.5,92.8 853.7,91.9 853.8,91.4 854,91.2 854.2,91.4 854.4,91.9 854.6,92.8 854.8,94.3 855,96.3 855.2,99.1 855.4,102.9 855.6,107.9 855.8,114.9 856,125.9 856.2,172.6 856.2,172.6 856.3,128.6 856.5,118.3 856.7,111.6 856.9,106.9 857.1,103.4 857.3,100.8 857.5,98.8 857.7,97.5 857.9,96.6 858.1,96.1 858.3,96 858.5,96.1 858.6,96.6 858.8,97.5 859,98.8 859.2,100.8 859.4,103.4 859.6,106.9 859.8,111.6 860,118.3 860.2,128.6 860.4,172.6 860.4,172.6 860.6,124.7 860.7,113.4 860.9,106.1 861.1,101 861.3,97.2 861.5,94.3 861.7,92.2 861.9,90.7 862.1,89.7 862.3,89.2 862.5,89.1 862.7,89.2 862.8,89.7 863,90.7 863.2,92.2 863.4,94.3 863.6,97.2 863.8,101 864,106.1 864.2,113.4 864.4,124.7 864.6,172.6 864.6,172.6 864.7,128 864.9,117.4 865.1,110.7 865.3,105.9 865.5,102.4 865.7,99.7 865.9,97.7 866.1,96.3 866.3,95.4 866.5,95 866.6,94.8 866.8,95 867,95.4 867.2,96.3 867.4,97.7 867.6,99.7 867.8,102.4 868,105.9 868.2,110.7 868.4,117.4 868.5,128 868.7,172.6 868.7,172.6 868.9,124.3 869.1,112.9 869.3,105.7 869.5,100.5 869.7,96.6 869.9,93.7 870.1,91.6 870.2,90.1 870.4,89.1 870.6,88.6 870.8,88.5 871,88.6 871.2,89.1 871.4,90.1 871.6,91.6 871.8,93.7 871.9,96.6 872.1,100.5 872.3,105.7 872.5,112.9 872.7,124.3 872.9,172.6 872.9,172.6 873.1,127.6 873.3,117 873.5,110.3 873.6,105.4 873.8,101.8 874,99.2 874.2,97.2 874.4,95.8 874.6,94.9 874.8,94.4 875,94.2 875.2,94.4 875.3,94.9 875.5,95.8 875.7,97.2 875.9,99.2 876.1,101.8 876.3,105.4 876.5,110.3 876.7,117 876.8,127.6 877,172.6 877,172.6 877.2,124 877.4,112.5 877.6,105.2 877.8,100 878,96.1 878.2,93.2 878.3,91 878.5,89.5 878.7,88.5 878.9,88 879.1,87.9 879.3,88 879.5,88.5 879.7,89.5 879.8,91 880,93.2 880.2,96.1 880.4,100 880.6,105.2 880.8,112.5 881,124 881.2,172.6 881.2,172.6 881.4,127.3 881.5,116.6 881.7,109.8 881.9,104.9 882.1,101.3 882.3,98.6 882.5,96.6 882.7,95.2 882.8,94.3 883,93.8 883.2,93.6 883.4,93.8 883.6,94.3 883.8,95.2 884,96.6 884.2,98.6 884.3,101.3 884.5,104.9 884.7,109.8 884.9,116.6 885.1,127.3 885.3,172.6 885.3,172.6 885.5,123.6 885.6,112.1 885.8,104.7 886,99.5 886.2,95.5 886.4,92.6 886.6,90.5 886.8,88.9 887,87.9 887.1,87.4 887.3,87.3 887.5,87.4 887.7,87.9 887.9,88.9 888.1,90.5 888.3,92.6 888.4,95.5 888.6,99.5 888.8,104.7 889,112.1 889.2,123.6 889.4,172.6 889.4,172.6 889.6,127 889.7,116.2 889.9,109.4 890.1,104.5 890.3,100.8 890.5,98.1 890.7,96.1 890.9,94.7 891,93.7 891.2,93.3 891.4,93.1 891.6,93.3 891.8,93.7 892,94.7 892.2,96.1 892.3,98.1 892.5,100.8 892.7,104.5 892.9,109.4 893.1,116.2 893.3,127 893.5,172.6 893.5,172.6 893.6,123.4 893.8,111.7 894,104.3 894.2,99.1 894.4,95.1 894.6,92.2 894.7,90 894.9,88.5 895.1,87.5 895.3,87 895.5,86.8 895.7,87 895.9,87.5 896,88.5 896.2,90 896.4,92.2 896.6,95.1 896.8,99.1 897,104.3 897.2,111.7 897.3,123.4 897.5,172.6 897.5,172.6 897.7,126.7 897.9,115.9 898.1,109 898.3,104.1 898.4,100.4 898.6,97.7 898.8,95.6 899,94.2 899.2,93.3 899.4,92.8 899.5,92.7 899.7,92.8 899.9,93.3 900.1,94.2 900.3,95.6 900.5,97.7 900.7,100.4 900.8,104.1 901,109 901.2,115.9 901.4,126.7 901.6,172.6 901.6,172.6 901.8,123.1 901.9,111.4 902.1,104 902.3,98.7 902.5,94.7 902.7,91.8 902.9,89.6 903,88 903.2,87 903.4,86.5 903.6,86.4 903.8,86.5 904,87 904.2,88 904.3,89.6 904.5,91.8 904.7,94.7 904.9,98.7 905.1,104 905.3,111.4 905.4,123.1 905.6,172.6 905.6,172.6 905.8,126.4 906,115.6 906.2,108.6 906.4,103.7 906.5,100 906.7,97.2 906.9,95.2 907.1,93.8 907.3,92.8 907.5,92.3 907.6,92.2 907.8,92.3 908,92.8 908.2,93.8 908.4,95.2 908.6,97.2 908.7,100 908.9,103.7 909.1,108.6 909.3,115.6 909.5,126.4 909.7,172.6 909.7,172.6 909.8,122.8 910,111.1 910.2,103.6 910.4,98.3 910.6,94.3 910.8,91.3 910.9,89.1 911.1,87.6 911.3,86.6 911.5,86 911.7,85.9 911.9,86 912,86.6 912.2,87.6 912.4,89.1 912.6,91.3 912.8,94.3 913,98.3 913.1,103.6 913.3,111.1 913.5,122.8 913.7,172.6 913.7,172.6 913.9,126.2 914.1,115.3 914.2,108.3 914.4,103.3 914.6,99.6 914.8,96.8 915,94.8 915.2,93.3 915.3,92.4 915.5,91.9 915.7,91.8 915.9,91.9 916.1,92.4 916.3,93.3 916.4,94.8 916.6,96.8 916.8,99.6 917,103.3 917.2,108.3 917.4,115.3 917.5,126.2 917.7,172.6 917.7,172.6 917.9,122.6 918.1,110.9 918.3,103.3 918.5,98 918.6,94 918.8,91 919,88.8 919.2,87.3 919.4,86.2 919.5,85.7 919.7,85.6 919.9,85.7 920.1,86.2 920.3,87.3 920.5,88.8 920.6,91 920.8,94 921,98 921.2,103.3 921.4,110.9 921.6,122.6 921.7,172.6 921.7,172.6 921.9,126 922.1,115.1 922.3,108.1 922.5,103.1 922.6,99.4 922.8,96.6 923,94.5 923.2,93.1 923.4,92.1 923.6,91.6 923.7,91.5 923.9,91.6 924.1,92.1 924.3,93.1 924.5,94.5 924.7,96.6 924.8,99.4 925,103.1 925.2,108.1 925.4,115.1 925.6,126 925.7,172.6 925.7,172.6 925.9,122.5 926.1,110.7 926.3,103.1 926.5,97.7 926.7,93.7 926.8,90.8 927,88.5 927.2,87 927.4,86 927.6,85.4 927.7,85.3 927.9,85.4 928.1,86 928.3,87 928.5,88.5 928.7,90.8 928.8,93.7 929,97.7 929.2,103.1 929.4,110.7 929.6,122.5 929.7,172.6 929.7,172.6 929.9,125.9 930.1,114.9 930.3,107.8 930.5,102.8 930.7,99.1 930.8,96.3 931,94.3 931.2,92.8 931.4,91.9 931.6,91.4 931.7,91.2 931.9,91.4 932.1,91.9 932.3,92.8 932.5,94.3 932.7,96.3 932.8,99.1 933,102.8 933.2,107.8 933.4,114.9 933.6,125.9 933.7,172.6 933.7,172.6 933.9,122.3 934.1,110.5 934.3,102.9 934.5,97.5 934.6,93.5 934.8,90.5 935,88.3 935.2,86.7 935.4,85.7 935.6,85.2 935.7,85 935.9,85.2 936.1,85.7 936.3,86.7 936.5,88.3 936.6,90.5 936.8,93.5 937,97.5 937.2,102.9 937.4,110.5 937.5,122.3 937.7,172.6 937.7,172.6 937.9,125.7 938.1,114.7 938.3,107.6 938.5,102.6 938.6,98.9 938.8,96.1 939,94 939.2,92.5 939.4,91.6 939.5,91.1 939.7,90.9 939.9,91.1 940.1,91.6 940.3,92.5 940.4,94 940.6,96.1 940.8,98.9 941,102.6 941.2,107.6 941.3,114.7 941.5,125.7 941.7,172.6 941.7,172.6 941.9,122.2 942.1,110.3 942.2,102.7 942.4,97.3 942.6,93.2 942.8,90.2 943,88 943.2,86.4 943.3,85.4 943.5,84.9 943.7,84.7 943.9,84.9 944.1,85.4 944.2,86.4 944.4,88 944.6,90.2 944.8,93.2 945,97.3 945.1,102.7 945.3,110.3 945.5,122.2 945.7,172.6 945.7,172.6 945.9,125.6 946,114.5 946.2,107.4 946.4,102.4 946.6,98.6 946.8,95.8 946.9,93.7 947.1,92.3 947.3,91.3 947.5,90.8 947.7,90.7 947.8,90.8 948,91.3 948.2,92.3 948.4,93.7 948.6,95.8 948.7,98.6 948.9,102.4 949.1,107.4 949.3,114.5 949.5,125.6 949.6,172.6 949.6,172.6 949.8,122 950,110.1 950.2,102.5 950.4,97 950.5,93 950.7,90 950.9,87.7 951.1,86.2 951.3,85.1 951.4,84.6 951.6,84.5 951.8,84.6 952,85.1 952.2,86.2 952.4,87.7 952.5,90 952.7,93 952.9,97 953.1,102.5 953.3,110.1 953.4,122 953.6,172.6 953.6,172.6 953.8,125.4 954,114.3 954.2,107.2 954.3,102.1 954.5,98.4 954.7,95.5 954.9,93.5 955.1,92 955.2,91 955.4,90.5 955.6,90.4 955.8,90.5 956,91 956.1,92 956.3,93.5 956.5,95.5 956.7,98.4 956.9,102.1 957,107.2 957.2,114.3 957.4,125.4 957.6,172.6 957.6,172.6 957.8,121.8 957.9,109.9 958.1,102.2 958.3,96.8 958.5,92.7 958.7,89.7 958.8,87.5 959,85.9 959.2,84.9 959.4,84.3 959.6,84.2 959.7,84.3 959.9,84.9 960.1,85.9 960.3,87.5 960.4,89.7 960.6,92.7 960.8,96.8 961,102.2 961.2,109.9 961.3,121.8 961.5,172.6 961.5,172.6 961.7,125.3 961.9,114.1 962.1,107 962.2,101.9 962.4,98.1 962.6,95.3 962.8,93.2 963,91.7 963.1,90.8 963.3,90.3 963.5,90.1 963.7,90.3 963.9,90.8 964,91.7 964.2,93.2 964.4,95.3 964.6,98.1 964.8,101.9 964.9,107 965.1,114.1 965.3,125.3 965.5,172.6 965.5,172.6 965.7,121.7 965.8,109.7 966,102 966.2,96.6 966.4,92.5 966.6,89.5 966.7,87.2 966.9,85.6 967.1,84.6 967.3,84.1 967.5,83.9 967.6,84.1 967.8,84.6 968,85.6 968.2,87.2 968.4,89.5 968.5,92.5 968.7,96.6 968.9,102 969.1,109.7 969.2,121.7 969.4,172.6 969.4,172.6 969.6,125.1 969.8,113.9 970,106.8 970.1,101.7 970.3,97.9 970.5,95 970.7,92.9 970.9,91.5 971,90.5 971.2,90 971.4,89.8 971.6,90 971.8,90.5 971.9,91.5 972.1,92.9 972.3,95 972.5,97.9 972.7,101.7 972.8,106.8 973,113.9 973.2,125.1 973.4,172.6 973.4,172.6 973.5,121.5 973.7,109.5 973.9,101.8 974.1,96.3 974.3,92.3 974.4,89.2 974.6,87 974.8,85.4 975,84.3 975.2,83.8 975.3,83.6 975.5,83.8 975.7,84.3 975.9,85.4 976.1,87 976.2,89.2 976.4,92.3 976.6,96.3 976.8,101.8 977,109.5 977.1,121.5 977.3,172.6 977.3,172.6 977.5,124.9 977.7,113.7 977.8,106.5 978,101.4 978.2,97.6 978.4,94.8 978.6,92.7 978.7,91.2 978.9,90.2 979.1,89.7 979.3,89.6 979.5,89.7 979.6,90.2 979.8,91.2 980,92.7 980.2,94.8 980.4,97.6 980.5,101.4 980.7,106.5 980.9,113.7 981.1,124.9 981.2,172.6 981.2,172.6 981.4,121.4 981.6,109.3 981.8,101.6 982,96.1 982.1,92 982.3,88.9 982.5,86.7 982.7,85.1 982.9,84.1 983,83.5 983.2,83.4 983.4,83.5 983.6,84.1 983.7,85.1 983.9,86.7 984.1,88.9 984.3,92 984.5,96.1 984.6,101.6 984.8,109.3 985,121.4 985.2,172.6 985.2,172.6 985.4,124.8 985.5,113.6 985.7,106.4 985.9,101.3 986.1,97.5 986.2,94.6 986.4,92.5 986.6,91 986.8,90.1 987,89.5 987.1,89.4 987.3,89.5 987.5,90.1 987.7,91 987.9,92.5 988,94.6 988.2,97.5 988.4,101.3 988.6,106.4 988.7,113.6 988.9,124.8 989.1,172.6" fill="none" stroke="#cc2c80" stroke-width="0.9" stroke-linejoin="round"/>
<path d="M672.1 94.1 L672.4 94.3 L672.7 94.8 L673 95.7 L673.4 97.1 L673.7 99.1 L674 101.8 L674.3 105.3 L674.6 110.2 L674.9 116.9 L675.3 127.6 L675.6 172.6 M678.9 100.2 L679.2 100.3 L679.5 100.8 L679.8 101.6 L680.1 102.9 L680.4 104.8 L680.7 107.2 L681 110.6 L681.3 115 L681.6 121.3 L682 131.1 L682.3 172.6 M685.4 93.9 L685.7 94 L686 94.5 L686.3 95.4 L686.6 96.9 L686.8 98.8 L687.1 101.5 L687.4 105.1 L687.7 110 L688 116.8 L688.3 127.4 L688.6 172.6 M691.6 99.9 L691.9 100 L692.2 100.5 L692.4 101.3 L692.7 102.6 L693 104.5 L693.3 107 L693.5 110.3 L693.8 114.8 L694.1 121 L694.4 130.9 L694.6 172.6 M697.6 93.8 L697.9 93.9 L698.2 94.4 L698.5 95.3 L698.7 96.7 L699 98.7 L699.3 101.4 L699.5 105 L699.8 109.9 L700.1 116.7 L700.4 127.3 L700.6 172.6 M703.6 99.8 L703.8 99.9 L704.1 100.4 L704.4 101.2 L704.6 102.5 L704.9 104.3 L705.2 106.8 L705.4 110.2 L705.7 114.7 L706 120.9 L706.2 130.8 L706.5 172.6 M709.4 93.6 L709.7 93.8 L709.9 94.3 L710.2 95.2 L710.4 96.6 L710.7 98.6 L711 101.3 L711.2 104.9 L711.5 109.8 L711.8 116.6 L712 127.3 L712.3 172.6 M715.1 99.7 L715.4 99.8 L715.6 100.2 L715.9 101.1 L716.1 102.4 L716.4 104.2 L716.7 106.7 L716.9 110.1 L717.2 114.6 L717.4 120.9 L717.7 130.7 L717.9 172.6 M720.7 93.5 L721 93.6 L721.2 94.1 L721.5 95.1 L721.7 96.5 L722 98.5 L722.2 101.2 L722.5 104.8 L722.7 109.7 L723 116.5 L723.3 127.2 L723.5 172.6 M726.2 99.5 L726.5 99.6 L726.7 100.1 L727 100.9 L727.2 102.3 L727.5 104.1 L727.7 106.6 L728 110 L728.2 114.5 L728.5 120.8 L728.7 130.7 L729 172.6 M731.7 93.4 L731.9 93.5 L732.2 94 L732.4 94.9 L732.7 96.3 L732.9 98.3 L733.2 101.1 L733.4 104.7 L733.6 109.6 L733.9 116.4 L734.1 127.1 L734.4 172.6 M737 99.4 L737.3 99.5 L737.5 100 L737.8 100.8 L738 102.1 L738.3 104 L738.5 106.5 L738.7 109.8 L739 114.4 L739.2 120.7 L739.5 130.6 L739.7 172.6 M742.3 93.3 L742.6 93.4 L742.8 93.9 L743 94.8 L743.3 96.2 L743.5 98.2 L743.7 101 L744 104.6 L744.2 109.5 L744.5 116.3 L744.7 127.1 L744.9 172.6 M747.5 99.3 L747.8 99.4 L748 99.9 L748.2 100.7 L748.5 102 L748.7 103.9 L748.9 106.4 L749.2 109.7 L749.4 114.3 L749.6 120.6 L749.9 130.5 L750.1 172.6 M752.6 93.1 L752.9 93.3 L753.1 93.8 L753.3 94.7 L753.6 96.1 L753.8 98.1 L754 100.8 L754.3 104.5 L754.5 109.4 L754.7 116.2 L754.9 127 L755.2 172.6 M757.7 99.2 L757.9 99.3 L758.1 99.7 L758.4 100.6 L758.6 101.9 L758.8 103.8 L759.1 106.3 L759.3 109.6 L759.5 114.2 L759.7 120.5 L760 130.4 L760.2 172.6 M762.7 93.1 L762.9 93.2 L763.1 93.7 L763.4 94.6 L763.6 96 L763.8 98.1 L764 100.8 L764.3 104.4 L764.5 109.3 L764.7 116.2 L764.9 127 L765.2 172.6 M767.6 99.5 L767.9 99.6 L768.1 100 L768.3 100.9 L768.5 102.2 L768.8 104 L769 106.5 L769.2 109.9 L769.4 114.4 L769.7 120.7 L769.9 130.6 L770.1 172.6 M772.6 93.7 L772.8 93.8 L773 94.3 L773.2 95.2 L773.5 96.6 L773.7 98.6 L773.9 101.3 L774.1 104.9 L774.4 109.8 L774.6 116.6 L774.8 127.3 L775 172.6 M777.5 100 L777.7 100.2 L777.9 100.6 L778.1 101.5 L778.3 102.8 L778.6 104.6 L778.8 107.1 L779 110.4 L779.2 114.9 L779.4 121.1 L779.7 130.9 L779.9 172.6 M782.3 95 L782.5 95.1 L782.7 95.6 L783 96.5 L783.2 97.9 L783.4 99.8 L783.6 102.5 L783.8 106.1 L784.1 110.8 L784.3 117.5 L784.5 128 L784.7 172.6 M787.1 102.9 L787.3 103 L787.6 103.4 L787.8 104.2 L788 105.5 L788.2 107.3 L788.4 109.6 L788.6 112.8 L788.9 117.1 L789.1 123.1 L789.3 132.6 L789.5 172.6 M791.9 99 L792.1 99.1 L792.3 99.6 L792.5 100.4 L792.8 101.8 L793 103.6 L793.2 106.1 L793.4 109.5 L793.6 114 L793.8 120.4 L794.1 130.4 L794.3 172.6 M796.6 106.8 L796.8 106.9 L797 107.3 L797.3 108.1 L797.5 109.3 L797.7 110.9 L797.9 113.2 L798.1 116.2 L798.3 120.3 L798.5 125.9 L798.8 134.8 L799 172.6 M801.3 103.5 L801.5 103.6 L801.7 104.1 L801.9 104.9 L802.1 106.1 L802.4 107.9 L802.6 110.2 L802.8 113.4 L803 117.6 L803.2 123.6 L803.4 133 L803.6 172.6 M805.9 110.3 L806.1 110.4 L806.3 110.8 L806.5 111.5 L806.8 112.6 L807 114.2 L807.2 116.3 L807.4 119.2 L807.6 123 L807.8 128.4 L808 136.8 L808.2 172.6 M810.5 108.2 L810.7 108.3 L810.9 108.7 L811.1 109.4 L811.3 110.6 L811.5 112.2 L811.7 114.4 L811.9 117.4 L812.1 121.3 L812.4 126.9 L812.6 135.6 L812.8 172.6 M815 114 L815.2 114.1 L815.4 114.5 L815.6 115.2 L815.8 116.2 L816 117.7 L816.2 119.7 L816.4 122.4 L816.6 126 L816.9 131.1 L817.1 139 L817.3 172.6 M819.5 113.1 L819.7 113.2 L819.9 113.5 L820.1 114.2 L820.3 115.3 L820.5 116.8 L820.7 118.8 L820.9 121.6 L821.1 125.2 L821.3 130.4 L821.5 138.4 L821.7 172.6 M823.9 116 L824.1 116.1 L824.3 116.5 L824.5 117.1 L824.7 118.1 L824.9 119.6 L825.1 121.5 L825.3 124.1 L825.5 127.6 L825.7 132.5 L825.9 140.1 L826.1 172.6 M828.3 110.3 L828.5 110.4 L828.7 110.8 L828.9 111.5 L829.1 112.6 L829.3 114.2 L829.5 116.4 L829.7 119.2 L829.9 123 L830.1 128.4 L830.3 136.8 L830.5 172.6 M832.6 108.9 L832.8 109 L833 109.4 L833.2 110.1 L833.4 111.3 L833.6 112.9 L833.8 115.1 L834 118 L834.2 121.9 L834.4 127.4 L834.6 136 L834.8 172.6 M836.9 101.1 L837.1 101.3 L837.3 101.7 L837.5 102.5 L837.7 103.8 L837.9 105.6 L838.1 108.1 L838.3 111.3 L838.5 115.7 L838.7 121.9 L838.9 131.6 L839.1 172.6 M841.3 102.3 L841.4 102.4 L841.6 102.8 L841.8 103.6 L842 104.9 L842.2 106.7 L842.4 109.1 L842.6 112.3 L842.8 116.6 L843 122.7 L843.2 132.2 L843.4 172.6 M845.5 94.6 L845.7 94.8 L845.9 95.3 L846.1 96.2 L846.3 97.6 L846.5 99.5 L846.7 102.2 L846.9 105.8 L847.1 110.6 L847.3 117.3 L847.5 127.8 L847.7 172.6 M849.8 98.4 L850 98.6 L850.2 99 L850.4 99.9 L850.6 101.2 L850.8 103.1 L851 105.6 L851.2 109 L851.3 113.6 L851.5 120 L851.7 130 L851.9 172.6 M854 91.2 L854.2 91.4 L854.4 91.9 L854.6 92.8 L854.8 94.3 L855 96.3 L855.2 99.1 L855.4 102.9 L855.6 107.9 L855.8 114.9 L856 125.9 L856.2 172.6 M858.3 96 L858.5 96.1 L858.6 96.6 L858.8 97.5 L859 98.8 L859.2 100.8 L859.4 103.4 L859.6 106.9 L859.8 111.6 L860 118.3 L860.2 128.6 L860.4 172.6 M862.5 89.1 L862.7 89.2 L862.8 89.7 L863 90.7 L863.2 92.2 L863.4 94.3 L863.6 97.2 L863.8 101 L864 106.1 L864.2 113.4 L864.4 124.7 L864.6 172.6 M866.6 94.8 L866.8 95 L867 95.4 L867.2 96.3 L867.4 97.7 L867.6 99.7 L867.8 102.4 L868 105.9 L868.2 110.7 L868.4 117.4 L868.5 128 L868.7 172.6 M870.8 88.5 L871 88.6 L871.2 89.1 L871.4 90.1 L871.6 91.6 L871.8 93.7 L871.9 96.6 L872.1 100.5 L872.3 105.7 L872.5 112.9 L872.7 124.3 L872.9 172.6 M875 94.2 L875.2 94.4 L875.3 94.9 L875.5 95.8 L875.7 97.2 L875.9 99.2 L876.1 101.8 L876.3 105.4 L876.5 110.3 L876.7 117 L876.8 127.6 L877 172.6 M879.1 87.9 L879.3 88 L879.5 88.5 L879.7 89.5 L879.8 91 L880 93.2 L880.2 96.1 L880.4 100 L880.6 105.2 L880.8 112.5 L881 124 L881.2 172.6 M883.2 93.6 L883.4 93.8 L883.6 94.3 L883.8 95.2 L884 96.6 L884.2 98.6 L884.3 101.3 L884.5 104.9 L884.7 109.8 L884.9 116.6 L885.1 127.3 L885.3 172.6 M887.3 87.3 L887.5 87.4 L887.7 87.9 L887.9 88.9 L888.1 90.5 L888.3 92.6 L888.4 95.5 L888.6 99.5 L888.8 104.7 L889 112.1 L889.2 123.6 L889.4 172.6 M891.4 93.1 L891.6 93.3 L891.8 93.7 L892 94.7 L892.2 96.1 L892.3 98.1 L892.5 100.8 L892.7 104.5 L892.9 109.4 L893.1 116.2 L893.3 127 L893.5 172.6 M895.5 86.8 L895.7 87 L895.9 87.5 L896 88.5 L896.2 90 L896.4 92.2 L896.6 95.1 L896.8 99.1 L897 104.3 L897.2 111.7 L897.3 123.4 L897.5 172.6 M899.5 92.7 L899.7 92.8 L899.9 93.3 L900.1 94.2 L900.3 95.6 L900.5 97.7 L900.7 100.4 L900.8 104.1 L901 109 L901.2 115.9 L901.4 126.7 L901.6 172.6 M903.6 86.4 L903.8 86.5 L904 87 L904.2 88 L904.3 89.6 L904.5 91.8 L904.7 94.7 L904.9 98.7 L905.1 104 L905.3 111.4 L905.4 123.1 L905.6 172.6 M907.6 92.2 L907.8 92.3 L908 92.8 L908.2 93.8 L908.4 95.2 L908.6 97.2 L908.7 100 L908.9 103.7 L909.1 108.6 L909.3 115.6 L909.5 126.4 L909.7 172.6 M911.7 85.9 L911.9 86 L912 86.6 L912.2 87.6 L912.4 89.1 L912.6 91.3 L912.8 94.3 L913 98.3 L913.1 103.6 L913.3 111.1 L913.5 122.8 L913.7 172.6 M915.7 91.8 L915.9 91.9 L916.1 92.4 L916.3 93.3 L916.4 94.8 L916.6 96.8 L916.8 99.6 L917 103.3 L917.2 108.3 L917.4 115.3 L917.5 126.2 L917.7 172.6 M919.7 85.6 L919.9 85.7 L920.1 86.2 L920.3 87.3 L920.5 88.8 L920.6 91 L920.8 94 L921 98 L921.2 103.3 L921.4 110.9 L921.6 122.6 L921.7 172.6 M923.7 91.5 L923.9 91.6 L924.1 92.1 L924.3 93.1 L924.5 94.5 L924.7 96.6 L924.8 99.4 L925 103.1 L925.2 108.1 L925.4 115.1 L925.6 126 L925.7 172.6 M927.7 85.3 L927.9 85.4 L928.1 86 L928.3 87 L928.5 88.5 L928.7 90.8 L928.8 93.7 L929 97.7 L929.2 103.1 L929.4 110.7 L929.6 122.5 L929.7 172.6 M931.7 91.2 L931.9 91.4 L932.1 91.9 L932.3 92.8 L932.5 94.3 L932.7 96.3 L932.8 99.1 L933 102.8 L933.2 107.8 L933.4 114.9 L933.6 125.9 L933.7 172.6 M935.7 85 L935.9 85.2 L936.1 85.7 L936.3 86.7 L936.5 88.3 L936.6 90.5 L936.8 93.5 L937 97.5 L937.2 102.9 L937.4 110.5 L937.5 122.3 L937.7 172.6 M939.7 90.9 L939.9 91.1 L940.1 91.6 L940.3 92.5 L940.4 94 L940.6 96.1 L940.8 98.9 L941 102.6 L941.2 107.6 L941.3 114.7 L941.5 125.7 L941.7 172.6 M943.7 84.7 L943.9 84.9 L944.1 85.4 L944.2 86.4 L944.4 88 L944.6 90.2 L944.8 93.2 L945 97.3 L945.1 102.7 L945.3 110.3 L945.5 122.2 L945.7 172.6 M947.7 90.7 L947.8 90.8 L948 91.3 L948.2 92.3 L948.4 93.7 L948.6 95.8 L948.7 98.6 L948.9 102.4 L949.1 107.4 L949.3 114.5 L949.5 125.6 L949.6 172.6 M951.6 84.5 L951.8 84.6 L952 85.1 L952.2 86.2 L952.4 87.7 L952.5 90 L952.7 93 L952.9 97 L953.1 102.5 L953.3 110.1 L953.4 122 L953.6 172.6 M955.6 90.4 L955.8 90.5 L956 91 L956.1 92 L956.3 93.5 L956.5 95.5 L956.7 98.4 L956.9 102.1 L957 107.2 L957.2 114.3 L957.4 125.4 L957.6 172.6 M959.6 84.2 L959.7 84.3 L959.9 84.9 L960.1 85.9 L960.3 87.5 L960.4 89.7 L960.6 92.7 L960.8 96.8 L961 102.2 L961.2 109.9 L961.3 121.8 L961.5 172.6 M963.5 90.1 L963.7 90.3 L963.9 90.8 L964 91.7 L964.2 93.2 L964.4 95.3 L964.6 98.1 L964.8 101.9 L964.9 107 L965.1 114.1 L965.3 125.3 L965.5 172.6 M967.5 83.9 L967.6 84.1 L967.8 84.6 L968 85.6 L968.2 87.2 L968.4 89.5 L968.5 92.5 L968.7 96.6 L968.9 102 L969.1 109.7 L969.2 121.7 L969.4 172.6 M971.4 89.8 L971.6 90 L971.8 90.5 L971.9 91.5 L972.1 92.9 L972.3 95 L972.5 97.9 L972.7 101.7 L972.8 106.8 L973 113.9 L973.2 125.1 L973.4 172.6 M975.3 83.6 L975.5 83.8 L975.7 84.3 L975.9 85.4 L976.1 87 L976.2 89.2 L976.4 92.3 L976.6 96.3 L976.8 101.8 L977 109.5 L977.1 121.5 L977.3 172.6 M979.3 89.6 L979.5 89.7 L979.6 90.2 L979.8 91.2 L980 92.7 L980.2 94.8 L980.4 97.6 L980.5 101.4 L980.7 106.5 L980.9 113.7 L981.1 124.9 L981.2 172.6 M983.2 83.4 L983.4 83.5 L983.6 84.1 L983.7 85.1 L983.9 86.7 L984.1 88.9 L984.3 92 L984.5 96.1 L984.6 101.6 L984.8 109.3 L985 121.4 L985.2 172.6 M987.1 89.4 L987.3 89.5 L987.5 90.1 L987.7 91 L987.9 92.5 L988 94.6 L988.2 97.5 L988.4 101.3 L988.6 106.4 L988.7 113.6 L988.9 124.8 L989.1 172.6 " fill="none" stroke="#ac9ca4" stroke-width="0.75"/>
<path d="M989.1 172.6 L989.8 106.3 L990.5 172.6" fill="none" stroke="#cc2c80" stroke-width="0.9"/>
<path d="M684.3 93.7 L984.4 83.1" stroke="#d0c030" stroke-width="1" fill="none"/>
<path d="M643.5 76 V180.5 H1001" stroke="#969696" stroke-width="1" fill="none"/>
<path d="M643.5 150.5 h2.2 M643.5 128.4 h2.2 M643.5 106.3 h2.2 M643.5 84.2 h2.2 M735 180.5 v-2.2 M812.9 180.5 v-2.2 M890.9 180.5 v-2.2 M968.8 180.5 v-2.2 " stroke="#969696" stroke-width="0.8" fill="none"/>
<path d="M643.5 172.6 h4 M657 180.5 v-4 " stroke="#969696" stroke-width="0.9" fill="none"/>
<path d="M643.5 161.5 h1.6 M643.5 139.4 h1.6 M643.5 117.3 h1.6 M643.5 95.2 h1.6 M696 180.5 v-1.6 M773.9 180.5 v-1.6 M851.9 180.5 v-1.6 M929.8 180.5 v-1.6 " stroke="#969696" stroke-opacity="0.4" stroke-width="0.7" fill="none"/>
<text x="639.0" y="175.3" text-anchor="end" font-size="7.4" fill="#b0b0b0" font-family="Liberation Sans, Noto Sans CJK SC, sans-serif" textLength="3.2" lengthAdjust="spacingAndGlyphs">0</text>
<text x="639.0" y="153.2" text-anchor="end" font-size="7.4" fill="#b0b0b0" font-family="Liberation Sans, Noto Sans CJK SC, sans-serif" textLength="10.8" lengthAdjust="spacingAndGlyphs">0.2</text>
<text x="639.0" y="131.1" text-anchor="end" font-size="7.4" fill="#b0b0b0" font-family="Liberation Sans, Noto Sans CJK SC, sans-serif" textLength="10.8" lengthAdjust="spacingAndGlyphs">0.4</text>
<text x="639.0" y="109" text-anchor="end" font-size="7.4" fill="#b0b0b0" font-family="Liberation Sans, Noto Sans CJK SC, sans-serif" textLength="10.8" lengthAdjust="spacingAndGlyphs">0.6</text>
<text x="639.0" y="86.9" text-anchor="end" font-size="7.4" fill="#b0b0b0" font-family="Liberation Sans, Noto Sans CJK SC, sans-serif" textLength="10.8" lengthAdjust="spacingAndGlyphs">0.8</text>
<text x="657" y="188.6" text-anchor="middle" font-size="7.4" fill="#b0b0b0" font-family="Liberation Sans, Noto Sans CJK SC, sans-serif" textLength="3.2" lengthAdjust="spacingAndGlyphs">0</text>
<text x="735" y="188.6" text-anchor="middle" font-size="7.4" fill="#b0b0b0" font-family="Liberation Sans, Noto Sans CJK SC, sans-serif" textLength="18.2" lengthAdjust="spacingAndGlyphs">10000</text>
<text x="812.9" y="188.6" text-anchor="middle" font-size="7.4" fill="#b0b0b0" font-family="Liberation Sans, Noto Sans CJK SC, sans-serif" textLength="18.2" lengthAdjust="spacingAndGlyphs">20000</text>
<text x="890.9" y="188.6" text-anchor="middle" font-size="7.4" fill="#b0b0b0" font-family="Liberation Sans, Noto Sans CJK SC, sans-serif" textLength="18.2" lengthAdjust="spacingAndGlyphs">30000</text>
<text x="968.8" y="188.6" text-anchor="middle" font-size="7.4" fill="#b0b0b0" font-family="Liberation Sans, Noto Sans CJK SC, sans-serif" textLength="18.2" lengthAdjust="spacingAndGlyphs">40000</text>
<g transform="translate(908,120.8)"><rect width="10.5" height="10.5" rx="1" fill="#e8f2fa" stroke="#5090c0" stroke-width="0.6"/><ellipse cx="5.25" cy="5.25" rx="3.36" ry="2.31" fill="none" stroke="#1a64a0" stroke-width="1.15"/><path d="M2.31 8.4 L8.19 2.1" stroke="#1a64a0" stroke-width="1.15"/></g>
<path d="M908 140.1 h12" stroke="#d0c030" stroke-width="1"/>
<path d="M908 153.3 h12" stroke="#502868" stroke-width="1"/>
<path d="M908 167.8 h12" stroke="#cc2c80" stroke-width="1"/>
<text x="926" y="128.8" font-size="7.5" fill="#a4a4a4" font-family="Liberation Sans, Noto Sans CJK SC, sans-serif">参考信号</text>
<text x="926" y="143.1" font-size="7.5" fill="#a4a4a4" font-family="Liberation Sans, Noto Sans CJK SC, sans-serif">奇膜去基拟合背景</text>
<text x="926" y="156.3" font-size="7.5" fill="#a4a4a4" font-family="Liberation Sans, Noto Sans CJK SC, sans-serif">偶膜去基拟合背景</text>
<text x="926" y="170.8" font-size="7.5" fill="#a4a4a4" font-family="Liberation Sans, Noto Sans CJK SC, sans-serif">腔模调制后吸收信号</text>
<text x="419.6" y="210.6" text-anchor="middle" font-size="9.3" fill="#bcbcbc" font-family="Liberation Sans, Noto Sans CJK SC, sans-serif">衰荡信号</text>
<polyline points="231.8,234.8 233.3,234 234.8,235.9 236.3,241.8 237.8,244 239.3,246.3 240.8,248.5 242.3,250.6 243.8,252.6 245.3,254.6 246.8,256.5 248.3,258.4 249.8,260.2 251.3,261.9 252.8,263.5 254.3,265.2 255.8,266.7 257.3,268.2 258.8,269.6 260.3,271 261.8,272.3 263.3,273.6 264.8,274.8 266.3,276 267.8,277.1 269.3,278.2 270.8,279.2 272.3,280.2 273.8,281.2 275.3,282.1 276.8,283 278.3,283.8 279.8,284.6 281.3,285.4 282.8,286.1 284.3,286.8 285.8,287.5 287.3,288.1 288.8,288.7 290.3,289.3 291.8,289.9 293.3,290.4 294.8,291 296.3,291.5 297.8,291.9 299.3,292.4 300.8,292.8 302.3,293.2 303.8,293.6 305.3,294 306.8,294.4 308.3,294.7 309.8,295.1 311.3,295.4 312.8,295.7 314.3,296 315.8,296.3 317.3,296.5 318.8,296.8 320.3,297 321.8,297.2 323.3,297.5 324.8,297.7 326.3,297.9 327.8,298.1 329.3,298.3 330.8,298.4 332.3,298.6 333.8,298.8 335.3,298.9 336.8,299.1 338.3,299.2 339.8,299.3 341.3,299.5 342.8,299.6 344.3,299.7 345.8,299.8 347.3,299.9 348.8,300 350.3,300.1 351.8,300.2 353.3,300.3 354.8,300.4 356.4,300.5 357.9,300.6 359.4,300.6 360.9,300.7 362.4,300.8 363.9,300.8 365.4,300.9 366.9,301 368.4,301 369.9,301.1 371.4,301.1 372.9,301.2 374.4,301.2 375.9,301.3 377.4,301.3 378.9,301.4 380.4,301.4 381.9,301.4 383.4,301.5 384.9,301.5 386.4,301.5 387.9,301.6 389.4,301.6 390.9,301.6 392.4,301.7 393.9,301.7 395.4,301.7 396.9,301.7 398.4,301.8 399.9,301.8 401.4,301.8 402.9,301.8 404.4,301.8 405.9,301.9 407.4,301.9 408.9,301.9 410.4,301.9 411.9,301.9 413.4,301.9 414.9,302 416.4,302 417.9,302 419.4,302 420.9,302 422.4,302 423.9,302 425.4,302 426.9,302 428.4,302.1 429.9,302.1 431.4,302.1 432.9,302.1 434.4,302.1 435.9,302.1 437.4,302.1 438.9,302.1 440.4,302.1 441.9,302.1 443.4,302.1 444.9,302.1 446.4,302.1 447.9,302.1 449.4,302.1 450.9,302.1 452.4,302.2 453.9,302.2 455.4,302.2 456.9,302.2 458.4,302.2 459.9,302.2 461.4,302.2 462.9,302.2 464.4,302.2 465.9,302.2 467.4,302.2 468.9,302.2 470.4,302.2 471.9,302.2 473.4,302.2 474.9,302.2 476.4,302.2 477.9,302.2 479.4,302.2 480.9,302.2 482.4,302.2 483.9,302.2 485.4,302.2 486.9,302.2 488.4,302.2 489.9,302.2 491.4,302.2 492.9,302.2 494.4,302.2 495.9,302.2 497.4,302.2 498.9,302.2 500.4,302.2 501.9,302.2 503.4,302.2 504.9,302.2 506.4,302.2 507.9,302.2 509.4,302.2 510.9,302.2 512.4,302.2 513.9,302.2 515.4,302.2 516.9,302.2 518.4,302.2 519.9,302.2 521.4,302.2 522.9,302.2 524.4,302.2 525.9,302.2 527.4,302.2 528.9,302.2 530.4,302.2 531.9,302.2 533.4,302.2 534.9,302.2 536.4,302.2 537.9,302.2 539.4,302.2 540.9,302.2 542.4,302.2 543.9,302.2 545.4,302.2 546.9,302.2 548.4,302.2 549.9,302.2 551.4,302.2 552.9,302.2 554.4,302.2 555.9,302.2 557.4,302.2 558.9,302.2 560.4,302.2 561.9,302.2 563.4,302.2 564.9,302.2 566.4,302.2 567.9,302.2 569.4,302.2 570.9,302.2" fill="none" stroke="#d8d040" stroke-width="0.9"/>
<polyline points="231.8,225.5 233.3,228.9 234.8,232.2 236.3,235.3 237.8,238.3 239.3,241.1 240.8,243.8 242.3,246.4 243.8,248.9 245.3,251.3 246.8,253.6 248.3,255.7 249.8,257.8 251.3,259.8 252.8,261.7 254.3,263.5 255.8,265.2 257.3,266.8 258.8,268.4 260.3,269.9 261.8,271.3 263.3,272.7 264.8,274 266.3,275.3 267.8,276.5 269.3,277.6 270.8,278.7 272.3,279.8 273.8,280.8 275.3,281.7 276.8,282.6 278.3,283.5 279.8,284.3 281.3,285.1 282.8,285.9 284.3,286.6 285.8,287.3 287.3,288 288.8,288.6 290.3,289.2 291.8,289.8 293.3,290.4 294.8,290.9 296.3,291.4 297.8,291.9 299.3,292.3 300.8,292.8 302.3,293.2 303.8,293.6 305.3,294 306.8,294.3 308.3,294.7 309.8,295 311.3,295.4 312.8,295.7 314.3,296 315.8,296.2 317.3,296.5 318.8,296.8 320.3,297 321.8,297.2 323.3,297.5 324.8,297.7 326.3,297.9 327.8,298.1 329.3,298.3 330.8,298.4 332.3,298.6 333.8,298.8 335.3,298.9 336.8,299.1 338.3,299.2 339.8,299.3 341.3,299.5 342.8,299.6 344.3,299.7 345.8,299.8 347.3,299.9 348.8,300 350.3,300.1 351.8,300.2 353.3,300.3 354.8,300.4 356.4,300.5 357.9,300.6 359.4,300.6 360.9,300.7 362.4,300.8 363.9,300.8 365.4,300.9 366.9,301 368.4,301 369.9,301.1 371.4,301.1 372.9,301.2 374.4,301.2 375.9,301.3 377.4,301.3 378.9,301.4 380.4,301.4 381.9,301.4 383.4,301.5 384.9,301.5 386.4,301.5 387.9,301.6 389.4,301.6 390.9,301.6 392.4,301.7 393.9,301.7 395.4,301.7 396.9,301.7 398.4,301.8 399.9,301.8 401.4,301.8 402.9,301.8 404.4,301.8 405.9,301.9 407.4,301.9 408.9,301.9 410.4,301.9 411.9,301.9 413.4,301.9 414.9,302 416.4,302 417.9,302 419.4,302 420.9,302 422.4,302 423.9,302 425.4,302 426.9,302 428.4,302.1 429.9,302.1 431.4,302.1 432.9,302.1 434.4,302.1 435.9,302.1 437.4,302.1 438.9,302.1 440.4,302.1 441.9,302.1 443.4,302.1 444.9,302.1 446.4,302.1 447.9,302.1 449.4,302.1 450.9,302.1 452.4,302.2 453.9,302.2 455.4,302.2 456.9,302.2 458.4,302.2 459.9,302.2 461.4,302.2 462.9,302.2 464.4,302.2 465.9,302.2 467.4,302.2 468.9,302.2 470.4,302.2 471.9,302.2 473.4,302.2 474.9,302.2 476.4,302.2 477.9,302.2 479.4,302.2 480.9,302.2 482.4,302.2 483.9,302.2 485.4,302.2 486.9,302.2 488.4,302.2 489.9,302.2 491.4,302.2 492.9,302.2 494.4,302.2 495.9,302.2 497.4,302.2 498.9,302.2 500.4,302.2 501.9,302.2 503.4,302.2 504.9,302.2 506.4,302.2 507.9,302.2 509.4,302.2 510.9,302.2 512.4,302.2 513.9,302.2 515.4,302.2 516.9,302.2 518.4,302.2 519.9,302.2 521.4,302.2 522.9,302.2 524.4,302.2 525.9,302.2 527.4,302.2 528.9,302.2 530.4,302.2 531.9,302.2 533.4,302.2 534.9,302.2 536.4,302.2 537.9,302.2 539.4,302.2 540.9,302.2 542.4,302.2 543.9,302.2 545.4,302.2 546.9,302.2 548.4,302.2 549.9,302.2 551.4,302.2 552.9,302.2 554.4,302.2 555.9,302.2 557.4,302.2 558.9,302.2 560.4,302.2 561.9,302.2 563.4,302.2 564.9,302.2 566.4,302.2 567.9,302.2 569.4,302.2 570.9,302.2 572.4,302.2 573.9,302.2 575.4,302.2 576.9,302.2 578.4,302.2 579.9,302.2 581.4,302.2 582.9,302.2 584.4,302.2 585.9,302.2 587.4,302.2 588.9,302.2 590.4,302.2 591.9,302.2 593.4,302.2 594.9,302.2 596.4,302.2 597.9,302.2 599.4,302.2 600.9,302.2 602.4,302.2 603.9,302.2 605.5,302.2 607,302.2 608.5,302.2" fill="none" stroke="#dc4410" stroke-width="1.05"/>
<path d="M230.3 314 L234.8 313.2 H571.7" fill="none" stroke="#1f9a2f" stroke-width="0.9"/>
<path d="M234.8 313.2 H571.7" fill="none" stroke="#90e090" stroke-width="0.5" stroke-dasharray="1.5 1"/>
<path d="M215.6 216.3 V321.3 H623.8" stroke="#969696" stroke-width="1" fill="none"/>
<path d="M215.6 291.1 h2.2 M215.6 268.8 h2.2 M215.6 246.5 h2.2 M215.6 224.2 h2.2 M305.3 321.3 v-2.2 M380.4 321.3 v-2.2 M455.4 321.3 v-2.2 M530.4 321.3 v-2.2 M605.5 321.3 v-2.2 " stroke="#969696" stroke-width="0.8" fill="none"/>
<path d="M215.6 313.4 h4 M230.3 321.3 v-4 " stroke="#969696" stroke-width="0.9" fill="none"/>
<path d="M215.6 302.2 h1.6 M215.6 279.9 h1.6 M215.6 257.6 h1.6 M215.6 235.3 h1.6 M267.8 321.3 v-1.6 M342.8 321.3 v-1.6 M417.9 321.3 v-1.6 M492.9 321.3 v-1.6 M567.9 321.3 v-1.6 " stroke="#969696" stroke-opacity="0.4" stroke-width="0.7" fill="none"/>
<text x="211.1" y="316.1" text-anchor="end" font-size="7.4" fill="#b0b0b0" font-family="Liberation Sans, Noto Sans CJK SC, sans-serif" textLength="3.2" lengthAdjust="spacingAndGlyphs">0</text>
<text x="211.1" y="293.8" text-anchor="end" font-size="7.4" fill="#b0b0b0" font-family="Liberation Sans, Noto Sans CJK SC, sans-serif" textLength="10.8" lengthAdjust="spacingAndGlyphs">0.2</text>
<text x="211.1" y="271.5" text-anchor="end" font-size="7.4" fill="#b0b0b0" font-family="Liberation Sans, Noto Sans CJK SC, sans-serif" textLength="10.8" lengthAdjust="spacingAndGlyphs">0.4</text>
<text x="211.1" y="249.2" text-anchor="end" font-size="7.4" fill="#b0b0b0" font-family="Liberation Sans, Noto Sans CJK SC, sans-serif" textLength="10.8" lengthAdjust="spacingAndGlyphs">0.6</text>
<text x="211.1" y="226.9" text-anchor="end" font-size="7.4" fill="#b0b0b0" font-family="Liberation Sans, Noto Sans CJK SC, sans-serif" textLength="10.8" lengthAdjust="spacingAndGlyphs">0.8</text>
<text x="230.3" y="329.4" text-anchor="middle" font-size="7.4" fill="#b0b0b0" font-family="Liberation Sans, Noto Sans CJK SC, sans-serif" textLength="3.2" lengthAdjust="spacingAndGlyphs">0</text>
<text x="305.3" y="329.4" text-anchor="middle" font-size="7.4" fill="#b0b0b0" font-family="Liberation Sans, Noto Sans CJK SC, sans-serif" textLength="10.8" lengthAdjust="spacingAndGlyphs">100</text>
<text x="380.4" y="329.4" text-anchor="middle" font-size="7.4" fill="#b0b0b0" font-family="Liberation Sans, Noto Sans CJK SC, sans-serif" textLength="10.8" lengthAdjust="spacingAndGlyphs">200</text>
<text x="455.4" y="329.4" text-anchor="middle" font-size="7.4" fill="#b0b0b0" font-family="Liberation Sans, Noto Sans CJK SC, sans-serif" textLength="10.8" lengthAdjust="spacingAndGlyphs">300</text>
<text x="530.4" y="329.4" text-anchor="middle" font-size="7.4" fill="#b0b0b0" font-family="Liberation Sans, Noto Sans CJK SC, sans-serif" textLength="10.8" lengthAdjust="spacingAndGlyphs">400</text>
<text x="605.5" y="329.4" text-anchor="middle" font-size="7.4" fill="#b0b0b0" font-family="Liberation Sans, Noto Sans CJK SC, sans-serif" textLength="10.8" lengthAdjust="spacingAndGlyphs">500</text>
<path d="M567.6 281.4 h12" stroke="#c8c030" stroke-width="1"/>
<text x="585.2" y="284.4" font-size="7.5" fill="#a4a4a4" font-family="Liberation Sans, Noto Sans CJK SC, sans-serif">衰荡</text>
<path d="M567.6 294.8 h12" stroke="#a01810" stroke-width="1"/>
<text x="585.2" y="297.8" font-size="7.5" fill="#a4a4a4" font-family="Liberation Sans, Noto Sans CJK SC, sans-serif">衰荡拟合</text>
<path d="M567.6 308.4 h12" stroke="#1f9a2f" stroke-width="1"/>
<text x="585.2" y="311.4" font-size="7.5" fill="#a4a4a4" font-family="Liberation Sans, Noto Sans CJK SC, sans-serif">衰荡残差</text>
<text x="822" y="210.2" text-anchor="middle" font-size="9.3" fill="#bcbcbc" font-family="Liberation Sans, Noto Sans CJK SC, sans-serif">算法处理</text>
<path d="M687.9 236 L754.4 233.6 L835.6 229.6 L931.6 225.3" stroke="#b8b020" stroke-width="1.1" fill="none"/>
<circle cx="687.9" cy="236.2" r="1.55" fill="#90a838" stroke="#d8e860" stroke-width="0.9"/><circle cx="695.3" cy="236.2" r="1.55" fill="#90a838" stroke="#d8e860" stroke-width="0.9"/><circle cx="702.7" cy="235.2" r="1.55" fill="#90a838" stroke="#d8e860" stroke-width="0.9"/><circle cx="710.1" cy="235.2" r="1.55" fill="#90a838" stroke="#d8e860" stroke-width="0.9"/><circle cx="717.4" cy="235.2" r="1.55" fill="#90a838" stroke="#d8e860" stroke-width="0.9"/><circle cx="724.8" cy="234.6" r="1.55" fill="#90a838" stroke="#d8e860" stroke-width="0.9"/><circle cx="732.2" cy="234.4" r="1.55" fill="#90a838" stroke="#d8e860" stroke-width="0.9"/><circle cx="739.6" cy="235.2" r="1.55" fill="#90a838" stroke="#d8e860" stroke-width="0.9"/><circle cx="747" cy="234.5" r="1.55" fill="#90a838" stroke="#d8e860" stroke-width="0.9"/><circle cx="754.4" cy="235.7" r="1.55" fill="#90a838" stroke="#d8e860" stroke-width="0.9"/><circle cx="761.8" cy="238.9" r="1.55" fill="#90a838" stroke="#d8e860" stroke-width="0.9"/><circle cx="769.1" cy="244.6" r="1.55" fill="#90a838" stroke="#d8e860" stroke-width="0.9"/><circle cx="776.5" cy="247.8" r="1.55" fill="#90a838" stroke="#d8e860" stroke-width="0.9"/><circle cx="783.9" cy="253.6" r="1.55" fill="#90a838" stroke="#d8e860" stroke-width="0.9"/><circle cx="791.3" cy="253.3" r="1.55" fill="#90a838" stroke="#d8e860" stroke-width="0.9"/><circle cx="798.7" cy="243.7" r="1.55" fill="#90a838" stroke="#d8e860" stroke-width="0.9"/><circle cx="806.1" cy="236.8" r="1.55" fill="#90a838" stroke="#d8e860" stroke-width="0.9"/><circle cx="813.4" cy="233.2" r="1.55" fill="#90a838" stroke="#d8e860" stroke-width="0.9"/><circle cx="820.8" cy="231.2" r="1.55" fill="#90a838" stroke="#d8e860" stroke-width="0.9"/><circle cx="828.2" cy="230.2" r="1.55" fill="#90a838" stroke="#d8e860" stroke-width="0.9"/><circle cx="835.6" cy="229.6" r="1.55" fill="#90a838" stroke="#d8e860" stroke-width="0.9"/><circle cx="843" cy="229.2" r="1.55" fill="#90a838" stroke="#d8e860" stroke-width="0.9"/><circle cx="850.4" cy="228.7" r="1.55" fill="#90a838" stroke="#d8e860" stroke-width="0.9"/><circle cx="857.8" cy="228.2" r="1.55" fill="#90a838" stroke="#d8e860" stroke-width="0.9"/><circle cx="865.1" cy="228" r="1.55" fill="#90a838" stroke="#d8e860" stroke-width="0.9"/><circle cx="872.5" cy="227.7" r="1.55" fill="#90a838" stroke="#d8e860" stroke-width="0.9"/><circle cx="879.9" cy="227.5" r="1.55" fill="#90a838" stroke="#d8e860" stroke-width="0.9"/><circle cx="887.3" cy="227.1" r="1.55" fill="#90a838" stroke="#d8e860" stroke-width="0.9"/><circle cx="894.7" cy="226.9" r="1.55" fill="#90a838" stroke="#d8e860" stroke-width="0.9"/><circle cx="902.1" cy="226.6" r="1.55" fill="#90a838" stroke="#d8e860" stroke-width="0.9"/><circle cx="909.4" cy="226.4" r="1.55" fill="#90a838" stroke="#d8e860" stroke-width="0.9"/><circle cx="916.8" cy="226.2" r="1.55" fill="#90a838" stroke="#d8e860" stroke-width="0.9"/><circle cx="924.2" cy="226" r="1.55" fill="#90a838" stroke="#d8e860" stroke-width="0.9"/><circle cx="931.6" cy="225.5" r="1.55" fill="#90a838" stroke="#d8e860" stroke-width="0.9"/>
<polyline points="687.9,311.1 695.3,311.1 702.7,310.1 710.1,309.8 717.4,307.9 724.8,303.6 732.2,295.6 739.6,290.3 747,282.8 754.4,282.8 761.8,295.1 769.1,303.6 776.5,307.9 783.9,310.4 791.3,310.6 798.7,311.1 806.1,311.8 813.4,311.7" fill="none" stroke="#2a9a2a" stroke-width="1.2"/>
<polyline points="687.9,311.1 695.3,311.1 702.7,310.1 710.1,309.8 717.4,307.9 724.8,303.6 732.2,295.6 739.6,290.3 747,282.8 754.4,282.8 761.8,295.1 769.1,303.6 776.5,307.9 783.9,310.4 791.3,310.6 798.7,311.1 806.1,311.8 813.4,311.7" fill="none" stroke="#e03818" stroke-width="0.8"/>
<polyline points="687.9,311.9 695.3,312 702.7,311.8 710.1,312.2 717.4,312.4 724.8,312.1 732.2,312.2 739.6,312 747,311.3 754.4,311.8 761.8,312.5 769.1,311.6 776.5,312 783.9,312.5 791.3,312.1 798.7,312 806.1,312.4 813.4,312.2" fill="none" stroke="#a060b0" stroke-width="0.9"/>
<circle cx="687.9" cy="311.1" r="1.3" fill="#30c0b0" stroke="#2878c0" stroke-width="0.6"/><circle cx="695.3" cy="311.1" r="1.3" fill="#30c0b0" stroke="#2878c0" stroke-width="0.6"/><circle cx="702.7" cy="310.1" r="1.3" fill="#30c0b0" stroke="#2878c0" stroke-width="0.6"/><circle cx="710.1" cy="309.8" r="1.3" fill="#30c0b0" stroke="#2878c0" stroke-width="0.6"/><circle cx="717.4" cy="307.9" r="1.3" fill="#30c0b0" stroke="#2878c0" stroke-width="0.6"/><circle cx="724.8" cy="303.6" r="1.3" fill="#30c0b0" stroke="#2878c0" stroke-width="0.6"/><circle cx="732.2" cy="295.6" r="1.3" fill="#30c0b0" stroke="#2878c0" stroke-width="0.6"/><circle cx="739.6" cy="290.3" r="1.3" fill="#30c0b0" stroke="#2878c0" stroke-width="0.6"/><circle cx="747" cy="282.8" r="1.3" fill="#30c0b0" stroke="#2878c0" stroke-width="0.6"/><circle cx="754.4" cy="282.8" r="1.3" fill="#30c0b0" stroke="#2878c0" stroke-width="0.6"/><circle cx="761.8" cy="295.1" r="1.3" fill="#30c0b0" stroke="#2878c0" stroke-width="0.6"/><circle cx="769.1" cy="303.6" r="1.3" fill="#30c0b0" stroke="#2878c0" stroke-width="0.6"/><circle cx="776.5" cy="307.9" r="1.3" fill="#30c0b0" stroke="#2878c0" stroke-width="0.6"/><circle cx="783.9" cy="310.4" r="1.3" fill="#30c0b0" stroke="#2878c0" stroke-width="0.6"/><circle cx="791.3" cy="310.6" r="1.3" fill="#30c0b0" stroke="#2878c0" stroke-width="0.6"/><circle cx="798.7" cy="311.1" r="1.3" fill="#30c0b0" stroke="#2878c0" stroke-width="0.6"/><circle cx="806.1" cy="311.8" r="1.3" fill="#30c0b0" stroke="#2878c0" stroke-width="0.6"/><circle cx="813.4" cy="311.7" r="1.3" fill="#30c0b0" stroke="#2878c0" stroke-width="0.6"/>
<path d="M643.6 216 V321.4 H1001" stroke="#969696" stroke-width="1" fill="none"/>
<path d="M643.6 290.8 h2.2 M643.6 269.4 h2.2 M643.6 248 h2.2 M643.6 226.6 h2.2 M761.8 321.4 v-2.2 M835.6 321.4 v-2.2 M909.4 321.4 v-2.2 M983.3 321.4 v-2.2 " stroke="#969696" stroke-width="0.8" fill="none"/>
<path d="M643.6 312.2 h4 M687.9 321.4 v-4 " stroke="#969696" stroke-width="0.9" fill="none"/>
<path d="M643.6 301.5 h1.6 M643.6 280.1 h1.6 M643.6 258.7 h1.6 M643.6 237.3 h1.6 M724.8 321.4 v-1.6 M798.7 321.4 v-1.6 M872.5 321.4 v-1.6 M946.4 321.4 v-1.6 " stroke="#969696" stroke-opacity="0.4" stroke-width="0.7" fill="none"/>
<text x="639.1" y="314.9" text-anchor="end" font-size="7.4" fill="#b0b0b0" font-family="Liberation Sans, Noto Sans CJK SC, sans-serif" textLength="3.2" lengthAdjust="spacingAndGlyphs">0</text>
<text x="639.1" y="293.5" text-anchor="end" font-size="7.4" fill="#b0b0b0" font-family="Liberation Sans, Noto Sans CJK SC, sans-serif" textLength="10.8" lengthAdjust="spacingAndGlyphs">0.2</text>
<text x="639.1" y="272.1" text-anchor="end" font-size="7.4" fill="#b0b0b0" font-family="Liberation Sans, Noto Sans CJK SC, sans-serif" textLength="10.8" lengthAdjust="spacingAndGlyphs">0.4</text>
<text x="639.1" y="250.7" text-anchor="end" font-size="7.4" fill="#b0b0b0" font-family="Liberation Sans, Noto Sans CJK SC, sans-serif" textLength="10.8" lengthAdjust="spacingAndGlyphs">0.6</text>
<text x="639.1" y="229.3" text-anchor="end" font-size="7.4" fill="#b0b0b0" font-family="Liberation Sans, Noto Sans CJK SC, sans-serif" textLength="10.8" lengthAdjust="spacingAndGlyphs">0.8</text>
<text x="687.9" y="329.5" text-anchor="middle" font-size="7.4" fill="#b0b0b0" font-family="Liberation Sans, Noto Sans CJK SC, sans-serif" textLength="3.2" lengthAdjust="spacingAndGlyphs">0</text>
<text x="761.8" y="329.5" text-anchor="middle" font-size="7.4" fill="#b0b0b0" font-family="Liberation Sans, Noto Sans CJK SC, sans-serif" textLength="7.0" lengthAdjust="spacingAndGlyphs">10</text>
<text x="835.6" y="329.5" text-anchor="middle" font-size="7.4" fill="#b0b0b0" font-family="Liberation Sans, Noto Sans CJK SC, sans-serif" textLength="7.0" lengthAdjust="spacingAndGlyphs">20</text>
<text x="909.4" y="329.5" text-anchor="middle" font-size="7.4" fill="#b0b0b0" font-family="Liberation Sans, Noto Sans CJK SC, sans-serif" textLength="7.0" lengthAdjust="spacingAndGlyphs">30</text>
<text x="983.3" y="329.5" text-anchor="middle" font-size="7.4" fill="#b0b0b0" font-family="Liberation Sans, Noto Sans CJK SC, sans-serif" textLength="7.0" lengthAdjust="spacingAndGlyphs">40</text>
<path d="M884.5 225.3 h12" stroke="#2a9a2a" stroke-width="1"/>
<circle cx="890.5" cy="238.4" r="1.2" fill="#30c0b0" stroke="#2878c0" stroke-width="0.5"/>
<circle cx="890.5" cy="253" r="2" fill="#9890c0"/>
<path d="M884.5 266.8 h12" stroke="#2a9a2a" stroke-width="1"/>
<path d="M884.5 280.7 h12" stroke="#d03018" stroke-width="1"/>
<path d="M884.5 294.4 h12" stroke="#b8b020" stroke-width="1"/>
<path d="M884.5 308.4 h12" stroke="#a060b0" stroke-width="1"/>
<text x="902.7" y="228.3" font-size="7.5" fill="#a4a4a4" font-family="Liberation Sans, Noto Sans CJK SC, sans-serif">偶膜浓度背景</text>
<text x="902.7" y="241.4" font-size="7.5" fill="#a4a4a4" font-family="Liberation Sans, Noto Sans CJK SC, sans-serif">奇膜浓度拟合信号</text>
<text x="902.7" y="256" font-size="7.5" fill="#a4a4a4" font-family="Liberation Sans, Noto Sans CJK SC, sans-serif">偶膜浓度拟合信号</text>
<text x="902.7" y="269.8" font-size="7.5" fill="#a4a4a4" font-family="Liberation Sans, Noto Sans CJK SC, sans-serif">浓度拟合验证</text>
<text x="902.7" y="283.7" font-size="7.5" fill="#a4a4a4" font-family="Liberation Sans, Noto Sans CJK SC, sans-serif">浓度压力反射补偿拟合验证</text>
<text x="902.7" y="297.4" font-size="7.5" fill="#a4a4a4" font-family="Liberation Sans, Noto Sans CJK SC, sans-serif">拟合原始残差</text>
<text x="902.7" y="311.4" font-size="7.5" fill="#a4a4a4" font-family="Liberation Sans, Noto Sans CJK SC, sans-serif">拟合温压补偿残差</text>
<text x="423.7" y="351.7" text-anchor="middle" font-size="9.3" fill="#bcbcbc" font-family="Liberation Sans, Noto Sans CJK SC, sans-serif">浓度</text>
<clipPath id="c5"><rect x="224" y="352" width="400.3" height="112"/></clipPath>
<polyline clip-path="url(#c5)" points="245.1,400.1 245.3,420.6 245.5,399.6 245.8,419.1 246,399.1 246.2,418.2 246.4,401.5 246.7,419.9 246.9,396.7 247.1,425.2 247.3,399.7 247.6,426.2 247.8,396.6 248,415.4 248.2,406.7 248.5,416.9 248.7,406.8 248.9,415.9 249.1,400.8 249.4,418 249.6,393.6 249.8,416.1 250,404.4 250.3,418.8 250.5,397.3 250.7,411.5 250.9,398.5 251.2,417.5 251.4,402.2 251.6,416.4 251.8,403.7 252.1,418.3 252.3,391.9 252.5,417.9 252.7,395.7 253,420.6 253.2,395.3 253.4,419.1 253.6,395.2 253.9,418.3 254.1,397.8 254.3,414.6 254.5,398.8 254.8,420.7 255,403.1 255.2,420 255.4,397.2 255.7,419.9 255.9,402.5 256.1,426.6 256.3,396.8 256.6,414.8 256.8,399.1 257,423.3 257.2,401.8 257.5,414.5 257.7,397.5 257.9,419.3 258.1,399.7 258.4,416 258.6,402.7 258.8,411.3 259,390.3 259.3,419.5 259.5,400.7 259.7,417.1 259.9,400.7 260.2,412.8 260.4,404.8 260.6,423.7 260.8,396.1 261.1,413.3 261.3,391.8 261.5,415.8 261.7,395.4 262,414.4 262.2,400 262.4,426.7 262.6,402.2 262.9,412.1 263.1,398.7 263.3,414 263.5,390.9 263.8,419.4 264,392.4 264.2,417.5 264.4,397 264.7,423.8 264.9,398.4 265.1,415.8 265.3,396.2 265.6,414.8 265.8,398.7 266,411.5 266.2,400.6 266.5,422.8 266.7,402.4 266.9,413.1 267.1,397.8 267.4,411.2 267.6,397.3 267.8,418.1 268,397.7 268.3,423.8 268.5,399.1 268.7,415.3 268.9,394.9 269.2,417 269.4,403.7 269.6,421.1 269.8,389.9 270.1,430.7 270.3,355.8 270.5,412.7 270.7,392.9 271,419.1 271.2,397.1 271.4,416.8 271.6,393.2 271.9,417.3 272.1,401.1 272.3,413.7 272.5,397.7 272.8,419.2 273,400.1 273.2,414.5 273.4,389.4 273.7,420.2 273.9,398.4 274.1,425.1 274.3,395.9 274.6,415.7 274.8,394.7 275,410.8 275.2,400.1 275.5,416.5 275.7,398.1 275.9,414.4 276.1,395 276.4,418.3 276.6,403.3 276.8,422.4 277,399.3 277.3,419.8 277.5,405.3 277.7,417.6 277.9,395.9 278.2,414.9 278.4,403.6 278.6,424.1 278.8,398.3 279.1,420.1 279.3,400.6 279.5,417 279.7,400 280,423 280.2,397.8 280.4,419.1 280.6,395.4 280.9,416.9 281.1,405.9 281.3,418.2 281.5,400.6 281.8,412.9 282,396.1 282.2,417.7 282.4,400.4 282.7,418.2 282.9,397.2 283.1,415.5 283.3,398.4 283.6,416.9 283.8,400.4 284,422.1 284.2,395.8 284.5,417.4 284.7,399 284.9,417.6 285.1,407.9 285.4,423.2 285.6,401.8 285.8,421.2 286,401.8 286.3,425.1 286.5,394.9 286.7,416.2 286.9,398.4 287.2,421.1 287.4,397 287.6,424.1 287.8,402.6 288.1,419 288.3,402.9 288.5,428 288.7,400.4 289,416.5 289.2,399 289.4,422.3 289.6,409.3 289.9,419.2 290.1,401.5 290.3,417.4 290.5,398.1 290.8,427.7 291,404.2 291.2,422.3 291.4,401.2 291.7,416 291.9,392.4 292.1,417.1 292.3,402.2 292.6,421 292.8,403.2 293,415.3 293.2,402.8 293.5,416.1 293.7,395.4 293.9,415.2 294.1,392.4 294.4,419.4 294.6,400 294.8,419 295,404.5 295.3,419.6 295.5,404.9 295.7,417 295.9,401.4 296.2,426.3 296.4,399.6 296.6,417.3 296.8,398.3 297.1,417.7 297.3,404.2 297.5,422 297.7,402.2 298,423.1 298.2,397.9 298.4,424.2 298.6,397.2 298.9,421.3 299.1,403.3 299.3,422.2 299.5,399.8 299.8,416.8 300,399.3 300.2,428.8 300.4,398.7 300.7,419.8 300.9,404.6 301.1,417.7 301.3,393.4 301.6,423.4 301.8,400.1 302,414.1 302.2,390 302.5,420 302.7,403.2 302.9,418.7 303.1,403.8 303.4,416.3 303.6,399.5 303.8,421.4 304,401.2 304.3,419.5 304.5,406.6 304.7,417.5 304.9,401.6 305.2,416.3 305.4,402.6 305.6,419.7 305.8,405.8 306.1,422.9 306.3,401.6 306.5,418.1 306.7,403.5 307,413.8 307.2,398.5 307.4,423.9 307.6,399.9 307.9,420.4 308.1,403.4 308.3,419.9 308.5,401.9 308.8,417 309,401.1 309.2,415 309.4,396.9 309.7,420.3 309.9,398.3 310.1,424.2 310.3,397.1 310.6,420.4 310.8,403.9 311,419.7 311.2,393.1 311.5,420.7 311.7,402.9 311.9,418.6 312.1,396.8 312.4,409.4 312.6,389.8 312.8,413.1 313,404 313.3,426 313.5,396.4 313.7,418.2 313.9,394.5 314.2,418.8 314.4,404.3 314.6,419.3 314.8,397.7 315.1,414.6 315.3,399.7 315.5,414.7 315.7,394.5 316,415.9 316.2,406.2 316.4,423.2 316.6,406.3 316.9,421.5 317.1,400.9 317.3,419.6 317.5,400.7 317.8,419.1 318,401.4 318.2,423.2 318.4,399.7 318.7,421.8 318.9,409.2 319.1,418.3 319.3,395.6 319.6,417.5 319.8,404.4 320,420.8 320.2,404 320.5,417.2 320.7,400.6 320.9,423.4 321.1,401.8 321.4,418 321.6,397.8 321.8,425 322,409 322.3,416.2 322.5,399.9 322.7,420.5 322.9,405.5 323.2,424.3 323.4,395.6 323.6,425.5 323.8,403.5 324.1,418.8 324.3,407.3 324.5,424.7 324.7,402.3 325,423 325.2,405.2 325.4,424.8 325.6,391.7 325.9,414.9 326.1,405.9 326.3,434.7 326.5,404.8 326.8,419.6 327,402.8 327.2,420.4 327.4,398.5 327.7,421.7 327.9,395.6 328.1,423.5 328.3,400.8 328.6,419.4 328.8,404.9 329,421.6 329.2,408.2 329.5,426.4 329.7,404.7 329.9,429.1 330.1,403.7 330.4,429.1 330.6,404.3 330.8,422.4 331,401 331.3,421.9 331.5,398.5 331.7,418.6 331.9,406 332.2,423.1 332.4,403.5 332.6,420.9 332.8,400.3 333.1,418 333.3,395.7 333.5,422.3 333.7,403.7 334,423.2 334.2,398.6 334.4,423.1 334.6,402.7 334.9,434.2 335.1,396.9 335.3,420.6 335.5,397 335.8,420.1 336,403.7 336.2,425.1 336.4,403.5 336.7,422.1 336.9,408.6 337.1,421.1 337.3,405.6 337.6,414.3 337.8,403 338,424.4 338.2,388 338.5,420 338.7,401.6 338.9,419.1 339.1,398.6 339.4,420.8 339.6,405 339.8,420.3 340,398 340.3,426.1 340.5,396.1 340.7,420.4 340.9,404.6 341.2,421 341.4,402.5 341.6,424.9 341.8,403.2 342.1,423.4 342.3,399.5 342.5,419.1 342.7,403 343,419.8 343.2,405.8 343.4,421.7 343.6,401.1 343.9,419.1 344.1,402 344.3,417.1 344.5,402 344.8,419.8 345,397.3 345.2,417.8 345.4,401.2 345.7,414.6 345.9,402.2 346.1,422.9 346.3,406.3 346.6,420.9 346.8,397.7 347,419.7 347.2,396.4 347.5,423.8 347.7,405.6 347.9,424.5 348.1,405 348.4,422 348.6,396.6 348.8,421.4 349,400.8 349.3,424.2 349.5,403.8 349.7,422.9 349.9,394.6 350.2,420.5 350.4,399.1 350.6,417.9 350.8,401.5 351.1,425 351.3,392.9 351.5,413.1 351.7,409.5 352,418.3 352.2,403.4 352.4,417.1 352.6,400 352.9,418.6 353.1,393.4 353.3,419.2 353.5,406.3 353.8,418.1 354,404.3 354.2,421.3 354.4,402.4 354.7,416.9 354.9,398.6 355.1,412.1 355.3,401.2 355.6,419.1 355.8,390.1 356,422.1 356.2,397.7 356.5,424.5 356.7,395.7 356.9,414.7 357.1,397.9 357.4,414.6 357.6,398.2 357.8,412.8 358,390.8 358.3,414.2 358.5,403.3 358.7,428.6 358.9,402.5 359.2,410.8 359.4,402.6 359.6,421.2 359.8,399 360.1,424.1 360.3,394.8 360.5,413.9 360.7,404.6 361,415.2 361.2,405.3 361.4,412.4 361.6,398.4 361.9,419.5 362.1,388.2 362.3,412.5 362.5,402.6 362.8,420.6 363,398.3 363.2,413.7 363.4,401.3 363.7,423.9 363.9,400.8 364.1,418.3 364.3,395.3 364.6,415.6 364.8,401.5 365,417.6 365.2,395 365.5,427.5 365.7,398.4 365.9,418 366.1,399.2 366.4,414.7 366.6,394.1 366.8,411 367,400.9 367.3,420.9 367.5,406.1 367.7,419.1 367.9,399.3 368.2,415.6 368.4,398.9 368.6,416.7 368.8,398.5 369.1,418.3 369.3,399.7 369.5,419.9 369.7,402.1 370,415.5 370.2,398.7 370.4,418.9 370.6,400.2 370.9,416.4 371.1,405.1 371.3,421.6 371.5,398.1 371.8,421.2 372,403 372.2,421.6 372.4,405.2 372.7,422 372.9,405.2 373.1,419.4 373.3,398.6 373.6,428.8 373.8,398 374,426.4 374.2,402.7 374.5,417.5 374.7,404.7 374.9,421.1 375.1,400.5 375.4,419.3 375.6,400 375.8,419.8 376,396.4 376.3,422.9 376.5,406 376.7,420.8 376.9,394.8 377.2,409.5 377.4,399.4 377.6,417.3 377.8,400.1 378.1,416.1 378.3,402.4 378.5,423.5 378.7,394.5 379,415.3 379.2,363.8 379.4,419.4 379.6,399.4 379.9,415.4 380.1,401.4 380.3,413.9 380.5,396.2 380.8,423.7 381,395.1 381.2,418.5 381.4,399.2 381.7,423.1 381.9,403.7 382.1,420.4 382.3,401.9 382.6,422.5 382.8,395.9 383,417 383.2,396.9 383.5,428.9 383.7,400.9 383.9,418.3 384.1,404.4 384.4,418.6 384.6,402.1 384.8,415 385,400.1 385.3,418.4 385.5,402.8 385.7,429.7 385.9,400.9 386.2,417.7 386.4,402.2 386.6,418.1 386.8,395.1 387.1,417.9 387.3,400.5 387.5,419.1 387.7,402.3 388,414.5 388.2,403 388.4,420.4 388.6,393.8 388.9,420.2 389.1,397.7 389.3,420.8 389.5,402.1 389.8,409.1 390,391.4 390.2,415.4 390.4,399.2 390.7,413.9 390.9,404.3 391.1,426.4 391.3,395.8 391.6,420.1 391.8,405.6 392,415 392.2,393.8 392.5,423.8 392.7,394.6 392.9,411.4 393.1,397.8 393.4,413 393.6,400.6 393.8,423.6 394,396.7 394.3,419.4 394.5,400.6 394.7,418.2 394.9,398.3 395.2,413.8 395.4,398.8 395.6,422.4 395.8,401.5 396.1,420.6 396.3,398 396.5,413 396.7,401.2 397,415.9 397.2,400.9 397.4,414.9 397.6,400.7 397.9,418.5 398.1,399.6 398.3,413.8 398.5,400.3 398.8,416.8 399,397.8 399.2,412.9 399.4,402 399.7,418.3 399.9,400.4 400.1,424.1 400.3,401.1 400.6,421.9 400.8,395.4 401,420.9 401.2,390.7 401.5,415.8 401.7,397 401.9,426.5 402.1,404.9 402.4,422.2 402.6,399.6 402.8,414 403,396.7 403.3,416.8 403.5,394.2 403.7,421.4 403.9,404.5 404.2,417.3 404.4,390.8 404.6,413.3 404.8,402.7 405.1,420.5 405.3,389.6 405.5,421.8 405.7,400 406,419 406.2,396.1 406.4,417.6 406.6,396.6 406.9,414.9 407.1,401.8 407.3,418.5 407.5,398.9 407.8,416 408,387.7 408.2,417.5 408.4,395.3 408.7,414.8 408.9,401.8 409.1,420.1 409.3,399 409.6,416.7 409.8,400.9 410,427.7 410.2,398.5 410.5,418.6 410.7,392.1 410.9,416.3 411.1,399.2 411.4,418.7 411.6,406.4 411.8,420.4 412,396 412.3,425 412.5,389.9 412.7,416.2 412.9,402.9 413.2,415.5 413.4,404.3 413.6,420.9 413.8,400.2 414.1,412.8 414.3,396.8 414.5,421.4 414.7,404 415,423 415.2,399.5 415.4,413 415.6,407.2 415.9,420.3 416.1,400.8 416.3,421 416.5,403.9 416.8,421.2 417,402.9 417.2,416.1 417.4,392.8 417.7,421.2 417.9,407 418.1,419 418.3,401.7 418.6,419.2 418.8,401 419,426.7 419.2,398.6 419.5,420.4 419.7,403.3 419.9,418.1 420.1,405.3 420.4,420.4 420.6,402.5 420.8,420.5 421,402.3 421.3,424.6 421.5,407.4 421.7,416.7 421.9,406.7 422.2,430.2 422.4,402.1 422.6,415.4 422.8,406.6 423.1,418.2 423.3,405.2 423.5,418.5 423.7,402.4 424,417.6 424.2,396.8 424.4,416 424.6,403.8 424.9,419.3 425.1,396.5 425.3,418.7 425.5,400.7 425.8,415.9 426,407.6 426.2,417.2 426.4,405.8 426.7,424.2 426.9,404.4 427.1,425.5 427.3,398.2 427.6,421.3 427.8,405.4 428,417 428.2,400.3 428.5,417.8 428.7,402.3 428.9,414 429.1,399.7 429.4,419.2 429.6,402.4 429.8,421.6 430,404.3 430.3,420.3 430.5,406.7 430.7,420.1 430.9,398.7 431.2,418.5 431.4,409.4 431.6,426.1 431.8,402.5 432.1,423.8 432.3,395.7 432.5,421.1 432.7,400.9 433,419.4 433.2,404.2 433.4,419.8 433.6,401.4 433.9,430.5 434.1,402.1 434.3,429.6 434.5,401.7 434.8,416.2 435,403 435.2,423.4 435.4,402.3 435.7,416.9 435.9,399.6 436.1,418.7 436.3,401.9 436.6,417 436.8,401.9 437,418.6 437.2,400.8 437.5,416 437.7,402.5 437.9,416.5 438.1,399.8 438.4,418.1 438.6,399.4 438.8,414.9 439,401.2 439.3,417.6 439.5,396.1 439.7,408.6 439.9,404.2 440.2,413.6 440.4,397.4 440.6,417.4 440.8,395.2 441.1,431.3 441.3,397.1 441.5,420 441.7,399.4 442,425.7 442.2,404 442.4,425.9 442.6,403.4 442.9,419.6 443.1,402.1 443.3,420.9 443.5,396.1 443.8,418.4 444,403.9 444.2,419.8 444.4,405.7 444.7,421.4 444.9,397.4 445.1,418.8 445.3,403.4 445.6,424.4 445.8,405.4 446,414.9 446.2,398 446.5,415 446.7,401.6 446.9,419 447.1,401 447.4,425.4 447.6,397 447.8,420.7 448,403.8 448.3,420.6 448.5,403.5 448.7,423.3 448.9,403.8 449.2,412.1 449.4,399.9 449.6,418.7 449.8,406.5 450.1,425.6 450.3,398.8 450.5,424.4 450.7,403 451,423.8 451.2,382.4 451.4,416.7 451.6,397.3 451.9,423.6 452.1,403.5 452.3,428.8 452.5,399.7 452.8,420.4 453,394.6 453.2,423.8 453.4,398.7 453.7,416.4 453.9,405.8 454.1,425.9 454.3,405 454.6,428.9 454.8,404.1 455,422 455.2,405.9 455.5,419.3 455.7,379.3 455.9,423 456.1,395.5 456.4,421.9 456.6,397 456.8,420.5 457,407.5 457.3,432.4 457.5,392.4 457.7,422.7 457.9,399.7 458.2,424.9 458.4,404.1 458.6,421.1 458.8,405 459.1,429.2 459.3,406.8 459.5,418.7 459.7,394 460,420.6 460.2,409.1 460.4,422 460.6,405 460.9,433.7 461.1,397.4 461.3,424.1 461.5,401.9 461.8,420.8 462,401.3 462.2,416 462.4,404.1 462.7,428.8 462.9,409.3 463.1,425.5 463.3,406.2 463.6,418.3 463.8,385.6 464,425.7 464.2,398.5 464.5,417.2 464.7,406.7 464.9,424.9 465.1,404.5 465.4,418.3 465.6,406.5 465.8,419.8 466,404.4 466.3,424.5 466.5,407.2 466.7,420.1 466.9,402.7 467.2,422.7 467.4,403.5 467.6,419.7 467.8,400.6 468.1,421 468.3,400.8 468.5,427.9 468.7,398 469,422.4 469.2,394.4 469.4,416.6 469.6,402.1 469.9,427.1 470.1,400.3 470.3,417.7 470.5,404.2 470.8,421 471,403.8 471.2,434.2 471.4,407.6 471.7,430 471.9,395.2 472.1,425.6 472.3,400.8 472.6,422.5 472.8,402.1 473,417.1 473.2,405.8 473.5,424.8 473.7,397.7 473.9,428.8 474.1,401.2 474.4,418.4 474.6,407 474.8,422.3 475,402.1 475.3,419.6 475.5,400.7 475.7,423.7 475.9,399 476.2,421.3 476.4,398.8 476.6,417.9 476.8,399.9 477.1,427.7 477.3,396.6 477.5,418.7 477.7,399.6 478,418.6 478.2,399.8 478.4,419.6 478.6,405.2 478.9,416.4 479.1,402.8 479.3,418.1 479.5,402.3 479.8,431.5 480,398 480.2,418.2 480.4,402 480.7,422.1 480.9,404.4 481.1,418.9 481.3,404.8 481.6,419.1 481.8,396.4 482,422.5 482.2,400.1 482.5,425 482.7,405.3 482.9,418.9 483.1,397.3 483.4,426.5 483.6,402.7 483.8,421.5 484,403.4 484.3,422.2 484.5,394.1 484.7,423.5 484.9,403.4 485.2,418.2 485.4,398.4 485.6,421.9 485.8,406.3 486.1,432.4 486.3,401.7 486.5,426.7 486.7,405.8 487,432.5 487.2,398.9 487.4,419.5 487.6,402.7 487.9,420.2 488.1,399.4 488.3,418.7 488.5,399.3 488.8,424.7 489,397.4 489.2,423.1 489.4,399 489.7,419 489.9,407.1 490.1,421.7 490.3,402.3 490.6,428.2 490.8,398.9 491,418.6 491.2,406.7 491.5,414.8 491.7,393.9 491.9,419.3 492.1,390.3 492.4,418.5 492.6,400.2 492.8,417.5 493,398.8 493.3,418.6 493.5,401.5 493.7,419.6 493.9,399.4 494.2,428.2 494.4,398.9 494.6,421.5 494.8,405.5 495.1,415.8 495.3,397.5 495.5,416.2 495.7,400 496,419.7 496.2,395.3 496.4,420.1 496.6,402.4 496.9,419 497.1,395.9 497.3,412.5 497.5,404.9 497.8,419.7 498,400.8 498.2,422.9 498.4,403.6 498.7,420.9 498.9,402.8 499.1,427.7 499.3,400.4 499.6,417.1 499.8,398.8 500,420.3 500.2,398.7 500.5,419.2 500.7,386.3 500.9,423.5 501.1,402.8 501.4,414.2 501.6,399.6 501.8,422.1 502,397.2 502.3,422.7 502.5,402.4 502.7,419.6 502.9,399.5 503.2,423.6 503.4,396.8 503.6,421.8 503.8,397.8 504.1,422.4 504.3,394.2 504.5,418.8 504.7,398.9 505,419.6 505.2,400.7 505.4,415.3 505.6,401.6 505.9,417.2 506.1,401.8 506.3,421.2 506.5,405.3 506.8,421.1 507,401.3 507.2,416.6 507.4,408.4 507.7,415.6 507.9,397.7 508.1,421 508.3,404.4 508.6,431.5 508.8,401.6 509,421.7 509.2,402.6 509.5,415.3 509.7,398.8 509.9,415.8 510.1,401.1 510.4,419 510.6,403.9 510.8,417.3 511,403.3 511.3,416.1 511.5,401.6 511.7,424.2 511.9,401.4 512.2,415.7 512.4,401.5 512.6,420.2 512.8,403.3 513.1,423.8 513.3,398.7 513.5,425.3 513.7,404.9 514,417.9 514.2,401.6 514.4,421.7 514.6,400.3 514.9,420.3 515.1,401.3 515.3,423.6 515.5,407.1 515.8,420.2 516,402.7 516.2,428 516.4,392.9 516.7,420.5 516.9,402.8 517.1,418.2 517.3,398.5 517.6,420 517.8,397.4 518,437.8 518.2,400.9 518.5,420.2 518.7,390.6 518.9,417.5 519.1,399.8 519.4,421.5 519.6,403 519.8,423.4 520,397.3 520.3,420.6 520.5,400.3 520.7,417.8 520.9,395.9 521.2,420.2 521.4,404.4 521.6,418.8 521.8,403.3 522.1,420.7 522.3,398.9 522.5,420 522.7,404.2 523,417.7 523.2,402.6 523.4,416.9 523.6,400.8 523.9,413.9 524.1,400.7 524.3,418.4 524.5,402.7 524.8,420.6 525,401.5 525.2,418.9 525.4,406 525.7,421.8 525.9,396.2 526.1,417.2 526.3,403.1 526.6,420.9 526.8,397.2 527,421.1 527.2,397 527.5,421 527.7,392.8 527.9,420.8 528.1,396.5 528.4,420.9 528.6,393.8 528.8,414.3 529,401.8 529.3,416.9 529.5,396.8 529.7,424.3 529.9,404.4 530.2,424.6 530.4,400.8 530.6,423.6 530.8,398.6 531.1,416 531.3,393.9 531.5,411.5 531.7,401.2 532,417.7 532.2,397.4 532.4,423.2 532.6,397.1 532.9,420.7 533.1,402 533.3,417 533.5,397.7 533.8,413.8 534,397 534.2,416.8 534.4,398.3 534.7,420.5 534.9,394.5 535.1,418.5 535.3,396.2 535.6,418.3 535.8,400.7 536,427.1 536.2,385.5 536.5,422.9 536.7,394.4 536.9,421.5 537.1,394.7 537.4,423.4 537.6,404 537.8,416.4 538,389.9 538.3,415.2 538.5,398.2 538.7,429.6 538.9,400.3 539.2,417.4 539.4,392.7 539.6,419.3 539.8,405.1 540.1,417.4 540.3,400.1 540.5,422.2 540.7,401.6 541,416.2 541.2,399.7 541.4,415.4 541.6,399.4 541.9,416.6 542.1,401.3 542.3,421.7 542.5,401.5 542.8,415.7 543,392.4 543.2,419.5 543.4,391.3 543.7,416.1 543.9,402 544.1,417.6 544.3,388.1 544.6,417.4 544.8,394.8 545,420.7 545.2,400.6 545.5,420.8 545.7,390 545.9,421.3 546.1,399.9 546.4,416.4 546.6,390.6 546.8,415.7 547,396.2 547.3,413.7 547.5,397.9 547.7,421.4 547.9,396.8 548.2,421 548.4,398.6 548.6,417.2 548.8,400.5 549.1,416.7 549.3,402.5 549.5,418 549.7,396.3 550,417.9 550.2,397.7 550.4,413.7 550.6,401.2 550.9,423.9 551.1,405.8 551.3,415.6 551.5,401.1 551.8,423.8 552,397.2 552.2,416.5 552.4,399 552.7,414.2 552.9,402.8 553.1,422.8 553.3,399.2 553.6,415.2 553.8,394.4 554,421.6 554.2,404.5 554.5,420.6 554.7,398.6 554.9,417 555.1,399.7 555.4,420.2 555.6,404 555.8,418.3 556,397.9 556.3,425.5 556.5,401.6 556.7,429.5 556.9,402.6 557.2,416.5 557.4,394.5 557.6,411 557.8,400.7 558.1,411.6 558.3,402.9 558.5,421.2 558.7,397.1 559,428.5 559.2,396.7 559.4,416.9 559.6,394 559.9,421.1 560.1,393.8 560.3,415.8 560.5,400.2 560.8,426.3 561,403.6 561.2,417.2 561.4,403.1 561.7,423.4 561.9,406.7 562.1,424.7 562.3,394.3 562.6,425.1 562.8,405.8 563,423 563.2,404.2 563.5,415.9 563.7,401.9 563.9,423.9 564.1,407.2 564.4,422.3 564.6,407.9 564.8,417 565,405.9 565.3,418.7 565.5,405.7 565.7,415.2 565.9,397.7 566.2,420.6 566.4,391.8 566.6,418.8 566.8,406.2 567.1,425.1 567.3,403.4 567.5,424 567.7,408.3 568,424.9 568.2,402.4 568.4,428.6 568.6,400.3 568.9,420.7 569.1,404.5 569.3,420.8 569.5,400.9 569.8,424.2 570,393.4 570.2,427.3 570.4,405.5 570.7,419.5 570.9,405.2 571.1,416.8 571.3,405.3 571.6,431.7 571.8,410.6 572,431.5 572.2,397.7 572.5,417.8 572.7,396.7 572.9,422.7 573.1,398.3 573.4,419.2 573.6,404.1 573.8,420.1 574,406.2 574.3,432.2 574.5,398.2 574.7,423.3 574.9,400.4 575.2,424.5 575.4,398.5 575.6,427 575.8,395.1 576.1,421.4 576.3,405.5 576.5,429.7 576.7,405.7 577,423 577.2,399.6 577.4,420.2 577.6,409.3 577.9,426.9 578.1,399.7 578.3,427.4 578.5,400.8 578.8,429.6 579,398.3 579.2,416.6 579.5,411.2 579.7,415.5 579.9,402.5 580.1,421.7 580.4,395.5 580.6,415.8 580.8,404 581,413.4 581.3,408.6 581.5,422.9 581.7,405.6 581.9,428.2 582.2,396.9 582.4,424 582.6,401 582.8,423.5 583.1,400.9 583.3,424.6 583.5,402.9 583.7,422.2 584,406.6 584.2,433.9 584.4,406.6 584.6,427.3 584.9,402.8 585.1,418.1 585.3,404 585.5,421.1 585.8,397.4 586,419.5 586.2,404.9 586.4,425.3 586.7,407.5 586.9,417 587.1,405.5 587.3,420.1 587.6,403.1 587.8,429.7 588,398.6 588.2,421.2 588.5,394.6 588.7,419.5 588.9,402.6 589.1,424.5 589.4,405.2 589.6,420.9 589.8,401 590,423.6 590.3,399.8 590.5,425.8 590.7,397.2 590.9,417.2 591.2,406.3 591.4,416.4 591.6,409.2 591.8,419.7 592.1,397.2 592.3,425.8 592.5,397.7 592.7,417.1 593,399.1 593.2,422.2 593.4,406 593.6,421.5 593.9,413.3 594.1,425 594.3,403.1 594.5,422.3 594.8,409.4 595,425.9 595.2,407 595.4,419.3 595.7,404.7 595.9,422.6 596.1,406 596.3,421.4 596.6,406.4 596.8,422.4 597,401.8 597.2,422.6 597.5,409.6 597.7,426 597.9,404.4 598.1,422 598.4,404.3 598.6,420.3 598.8,404.7 599,424.4 599.3,402.4 599.5,431.5 599.7,404 599.9,430.7 600.2,409.8 600.4,424.4 600.6,405 600.8,433 601.1,409.1 601.3,427.6 601.5,410.3 601.7,427.4 602,403 602.2,434.6 602.4,410.5 602.6,422.6 602.9,412.1 603.1,429.6 603.3,408.2 603.5,427.8 603.8,395 604,441.1 604.2,410.6 604.4,425.7 604.7,403.3 604.9,420.6 605.1,405.6 605.3,435.1 605.6,409.5 605.8,427.4 606,406.1 606.2,422.7 606.5,410.5 606.7,423.3 606.9,393.9 607.1,422.9 607.4,407.5 607.6,418.6 607.8,407.1 608,421.8 608.3,407.2 608.5,421.2 608.7,405.7 608.9,428.9 609.2,406 609.4,426.8 609.6,414 609.8,427.8 610.1,408 610.3,433.8 610.5,405.1 610.7,425.3 611,407.2 611.2,420.5 611.4,408.8 611.6,422.8 611.9,404.1 612.1,429.8 612.3,403.5 612.5,422.7 612.8,406.1 613,424.8 613.2,400.5 613.4,423.6 613.7,396.3 613.9,422.3 614.1,411.7 614.3,435 614.6,405.2 614.8,423.1 615,406.8 615.2,423.1 615.5,408.8 615.7,419.6 615.9,409.8 616.1,436.4 616.4,407.9 616.6,419.1 616.8,409.1 617,420.5 617.3,406.1 617.5,425.5 617.7,407 617.9,420.8 618.2,406 618.4,422.3 618.6,399.5 618.8,427 619.1,402.8 619.3,426.6 619.5,400.6 619.7,424.1 620,405.1 620.2,423.5 620.4,413.1 620.6,422.8 620.9,390.2 621.1,426.6 621.3,405.2 621.5,430.3 621.8,402.7 622,427.9 622.2,399.5 622.4,421.6 622.7,408.3 622.9,424.2 623.1,405.9 623.3,423 623.6,407.8 623.8,421.6 624,407 624.2,427.1" fill="none" stroke="#ff69b4" stroke-width="0.85" stroke-linejoin="bevel"/>
<path d="M223.7 357.8 V462.1 H623.8" stroke="#969696" stroke-width="1" fill="none"/>
<path d="M223.7 456 h2.2 M223.7 433.5 h2.2 M223.7 411 h2.2 M223.7 366 h2.2 M312.9 462.1 v-2.2 M380.7 462.1 v-2.2 M448.5 462.1 v-2.2 M516.3 462.1 v-2.2 M584.1 462.1 v-2.2 " stroke="#969696" stroke-width="0.8" fill="none"/>
<path d="M223.7 388.5 h4 M245.1 462.1 v-4 " stroke="#969696" stroke-width="0.9" fill="none"/>
<path d="M279 462.1 v-1.6 M346.8 462.1 v-1.6 M414.6 462.1 v-1.6 M482.4 462.1 v-1.6 M550.2 462.1 v-1.6 M618 462.1 v-1.6 " stroke="#969696" stroke-opacity="0.4" stroke-width="0.7" fill="none"/>
<text x="219.2" y="458.7" text-anchor="end" font-size="7.4" fill="#b0b0b0" font-family="Liberation Sans, Noto Sans CJK SC, sans-serif" textLength="14.5" lengthAdjust="spacingAndGlyphs">2.35</text>
<text x="219.2" y="436.2" text-anchor="end" font-size="7.4" fill="#b0b0b0" font-family="Liberation Sans, Noto Sans CJK SC, sans-serif" textLength="14.5" lengthAdjust="spacingAndGlyphs">2.36</text>
<text x="219.2" y="413.7" text-anchor="end" font-size="7.4" fill="#b0b0b0" font-family="Liberation Sans, Noto Sans CJK SC, sans-serif" textLength="14.5" lengthAdjust="spacingAndGlyphs">2.37</text>
<text x="219.2" y="391.2" text-anchor="end" font-size="7.4" fill="#b0b0b0" font-family="Liberation Sans, Noto Sans CJK SC, sans-serif" textLength="14.5" lengthAdjust="spacingAndGlyphs">2.38</text>
<text x="219.2" y="368.7" text-anchor="end" font-size="7.4" fill="#b0b0b0" font-family="Liberation Sans, Noto Sans CJK SC, sans-serif" textLength="14.5" lengthAdjust="spacingAndGlyphs">2.39</text>
<text x="245.1" y="470.2" text-anchor="middle" font-size="7.4" fill="#b0b0b0" font-family="Liberation Sans, Noto Sans CJK SC, sans-serif" textLength="3.2" lengthAdjust="spacingAndGlyphs">0</text>
<text x="312.9" y="470.2" text-anchor="middle" font-size="7.4" fill="#b0b0b0" font-family="Liberation Sans, Noto Sans CJK SC, sans-serif" textLength="14.5" lengthAdjust="spacingAndGlyphs">1000</text>
<text x="380.7" y="470.2" text-anchor="middle" font-size="7.4" fill="#b0b0b0" font-family="Liberation Sans, Noto Sans CJK SC, sans-serif" textLength="14.5" lengthAdjust="spacingAndGlyphs">2000</text>
<text x="448.5" y="470.2" text-anchor="middle" font-size="7.4" fill="#b0b0b0" font-family="Liberation Sans, Noto Sans CJK SC, sans-serif" textLength="14.5" lengthAdjust="spacingAndGlyphs">3000</text>
<text x="516.3" y="470.2" text-anchor="middle" font-size="7.4" fill="#b0b0b0" font-family="Liberation Sans, Noto Sans CJK SC, sans-serif" textLength="14.5" lengthAdjust="spacingAndGlyphs">4000</text>
<text x="584.1" y="470.2" text-anchor="middle" font-size="7.4" fill="#b0b0b0" font-family="Liberation Sans, Noto Sans CJK SC, sans-serif" textLength="14.5" lengthAdjust="spacingAndGlyphs">5000</text>
<g transform="translate(520.4,357.2)"><rect width="10.8" height="10.8" rx="1" fill="#e8f2fa" stroke="#5090c0" stroke-width="0.6"/><ellipse cx="5.4" cy="5.4" rx="3.4560000000000004" ry="2.3760000000000003" fill="none" stroke="#1a64a0" stroke-width="1.15"/><path d="M2.3760000000000003 8.64 L8.424000000000001 2.16" stroke="#1a64a0" stroke-width="1.15"/></g>
<text x="538.5" y="365.6" font-size="7.5" fill="#a4a4a4" font-family="Liberation Sans, Noto Sans CJK SC, sans-serif">浓度_反射率</text>
<g transform="translate(520.4,370.9)"><rect width="10.8" height="10.8" rx="1" fill="#e8f2fa" stroke="#5090c0" stroke-width="0.6"/><ellipse cx="5.4" cy="5.4" rx="3.4560000000000004" ry="2.3760000000000003" fill="none" stroke="#1a64a0" stroke-width="1.15"/><path d="M2.3760000000000003 8.64 L8.424000000000001 2.16" stroke="#1a64a0" stroke-width="1.15"/></g>
<text x="538.5" y="379.3" font-size="7.5" fill="#a4a4a4" font-family="Liberation Sans, Noto Sans CJK SC, sans-serif">浓度平均_反射率</text>
<path d="M520 390.2 h12" stroke="#ff69b4" stroke-width="1"/>
<text x="538.5" y="393.2" font-size="7.5" fill="#a4a4a4" font-family="Liberation Sans, Noto Sans CJK SC, sans-serif">浓度_压强_反射率</text>
<g transform="translate(520.4,398.8)"><rect width="10.8" height="10.8" rx="1" fill="#e8f2fa" stroke="#5090c0" stroke-width="0.6"/><ellipse cx="5.4" cy="5.4" rx="3.4560000000000004" ry="2.3760000000000003" fill="none" stroke="#1a64a0" stroke-width="1.15"/><path d="M2.3760000000000003 8.64 L8.424000000000001 2.16" stroke="#1a64a0" stroke-width="1.15"/></g>
<text x="538.5" y="407.2" font-size="7.5" fill="#a4a4a4" font-family="Liberation Sans, Noto Sans CJK SC, sans-serif">浓度平均_压强_反射率</text>
<g transform="translate(520.4,412.6)"><rect width="10.8" height="10.8" rx="1" fill="#e8f2fa" stroke="#5090c0" stroke-width="0.6"/><ellipse cx="5.4" cy="5.4" rx="3.4560000000000004" ry="2.3760000000000003" fill="none" stroke="#1a64a0" stroke-width="1.15"/><path d="M2.3760000000000003 8.64 L8.424000000000001 2.16" stroke="#1a64a0" stroke-width="1.15"/></g>
<text x="538.5" y="421" font-size="7.5" fill="#a4a4a4" font-family="Liberation Sans, Noto Sans CJK SC, sans-serif">浓度_压强</text>
<text x="831.5" y="351.8" text-anchor="middle" font-size="9.3" fill="#bcbcbc" font-family="Liberation Sans, Noto Sans CJK SC, sans-serif">浓度分析</text>
<clipPath id="c6"><rect x="663" y="352" width="340" height="110"/></clipPath>
<polyline clip-path="url(#c6)" points="675.4,392.3 675.6,409.5 675.9,390.6 676.1,419.2 676.3,391 676.5,417.3 676.8,395.3 677,409.2 677.2,392.9 677.4,412.8 677.7,376.9 677.9,411.7 678.1,394.8 678.3,410.1 678.6,392.1 678.8,413.4 679,389.1 679.2,408.7 679.5,382 679.7,415.1 679.9,400.2 680.1,409.7 680.4,386 680.6,404.3 680.8,385.6 681,414.3 681.3,394.2 681.5,412.4 681.7,392.8 681.9,421.2 682.2,384.8 682.4,407.5 682.6,385 682.8,417.8 683.1,392 683.3,409.2 683.5,380.8 683.7,409.3 684,393.3 684.2,417.7 684.4,389.9 684.6,407.1 684.9,392.9 685.1,411.6 685.3,394.9 685.5,411.8 685.8,387.5 686,412.1 686.2,379.8 686.4,412.2 686.7,393.6 686.9,411 687.1,390.9 687.3,421.2 687.6,394 687.8,417.8 688,394.6 688.2,417.5 688.5,380.8 688.7,414.8 688.9,372.7 689.1,460.2 689.4,394.4 689.6,408.3 689.8,397.1 690,412.2 690.3,398.2 690.5,411.3 690.7,391.3 690.9,417.4 691.2,376.9 691.4,416.9 691.6,391.4 691.8,408.2 692.1,393.3 692.3,412.5 692.5,389.3 692.7,413.1 693,396.4 693.2,413.2 693.4,385.9 693.6,410.4 693.9,383.9 694.1,407.6 694.3,388.3 694.5,415.3 694.8,396.9 695,416.6 695.2,391.9 695.4,413.4 695.7,393.5 695.9,412.6 696.1,396 696.3,415.7 696.6,391.8 696.8,408.3 697,390 697.2,419.6 697.5,390.9 697.7,407.5 697.9,390 698.1,407.2 698.4,395.3 698.6,413.1 698.8,387.3 699,411.1 699.3,386.2 699.5,413 699.7,388.8 699.9,406.8 700.2,391.6 700.4,408.9 700.6,396.3 700.8,411.9 701.1,396.3 701.3,410.7 701.5,388.7 701.7,405.1 702,386 702.2,406.8 702.4,394.8 702.6,414.6 702.9,397.9 703.1,408.5 703.3,391.6 703.5,415.3 703.8,393.2 704,412.9 704.2,386.9 704.4,412.9 704.7,393.7 704.9,412.8 705.1,389.7 705.3,409.5 705.6,388.4 705.8,410.3 706,392.3 706.2,413.4 706.5,391.1 706.7,403.6 706.9,379.3 707.1,411.7 707.4,394.3 707.6,405 707.8,389.3 708,407 708.3,391.8 708.5,418 708.7,389.6 708.9,420.1 709.2,386.7 709.4,406.7 709.6,392.7 709.8,408.1 710.1,388.9 710.3,410.4 710.5,392.7 710.7,411.3 711,391.6 711.2,414.8 711.4,392.2 711.6,413.4 711.9,390.2 712.1,414.9 712.3,381.2 712.5,409.4 712.8,388.1 713,408.8 713.2,390.2 713.4,407.4 713.7,389.1 713.9,408.2 714.1,394.3 714.3,415.4 714.6,391.5 714.8,408 715,387 715.2,409.5 715.5,396.5 715.7,413.2 715.9,391.6 716.1,412 716.4,390.6 716.6,409 716.8,391.6 717,414.9 717.3,395.3 717.5,419.8 717.7,394.1 717.9,406.3 718.2,388.6 718.4,407.7 718.6,392.2 718.8,410.2 719.1,388.8 719.3,410.3 719.5,383.1 719.7,419.1 720,393.1 720.2,408.5 720.4,388.8 720.6,407.8 720.9,395.3 721.1,421.5 721.3,387.6 721.5,408.2 721.8,390.8 722,421.3 722.2,392.9 722.4,408.5 722.7,395.3 722.9,407.1 723.1,393.3 723.3,409.9 723.6,396 723.8,403.9 724,391.4 724.2,407.3 724.5,387 724.7,411.1 724.9,387.1 725.1,410.1 725.4,387.2 725.6,427.5 725.8,395.3 726,408.4 726.3,392.6 726.5,409.3 726.7,393 726.9,412.2 727.2,386.1 727.4,415.9 727.6,386.1 727.8,411.8 728.1,380.6 728.3,417.9 728.5,390.2 728.7,409.1 729,399.3 729.2,410.7 729.4,387.9 729.6,417.3 729.9,389.6 730.1,408.8 730.3,391 730.5,420.6 730.8,391.3 731,415.9 731.2,391.4 731.4,413.3 731.7,389.8 731.9,423.7 732.1,389.6 732.3,408.9 732.6,390.8 732.8,410 733,391.1 733.2,411.5 733.5,387.2 733.7,412 733.9,389.7 734.1,407.9 734.4,391.6 734.6,416.3 734.8,389.8 735,413.7 735.3,397.9 735.5,409.1 735.7,392.4 735.9,412.4 736.2,385 736.4,408 736.6,395.7 736.8,409.6 737.1,384.4 737.3,413.5 737.5,394.4 737.7,415.4 738,394.8 738.2,410.1 738.4,394.1 738.6,407.2 738.9,387 739.1,412.7 739.3,389.3 739.5,410.5 739.8,386.3 740,413.9 740.2,393.1 740.4,406.5 740.7,394.4 740.9,413.5 741.1,392.2 741.3,408.2 741.6,374 741.8,404.5 742,386.1 742.2,411.2 742.5,386.7 742.7,418.5 742.9,363 743.1,415.9 743.4,393.7 743.6,407.8 743.8,388.7 744,409.3 744.3,396.7 744.5,411.8 744.7,389 744.9,408.1 745.2,391.6 745.4,408.6 745.6,384.8 745.8,419.9 746.1,391.8 746.3,415.1 746.5,392.5 746.7,411.5 747,390.5 747.2,410.8 747.4,395 747.6,412.6 747.9,393.2 748.1,412.7 748.3,389.2 748.5,406.6 748.8,390.2 749,416.2 749.2,391.5 749.4,413.3 749.7,391.5 749.9,410.1 750.1,393.6 750.3,413.8 750.6,389.4 750.8,418 751,389.9 751.2,409 751.5,392.1 751.7,406.4 751.9,393.6 752.1,409.2 752.4,390.9 752.6,408.3 752.8,389.2 753,409.4 753.3,395.5 753.5,411.9 753.7,393.7 753.9,411.3 754.2,394.5 754.4,415.9 754.6,383 754.8,411.9 755.1,383.8 755.3,412.3 755.5,391.4 755.7,422.6 756,388.7 756.2,404.4 756.4,396.7 756.6,414.6 756.9,393.4 757.1,418.2 757.3,389.9 757.5,403.1 757.8,391 758,412.8 758.2,390.1 758.4,412.2 758.7,384.8 758.9,406.6 759.1,395.4 759.3,407.1 759.6,394.2 759.8,412.4 760,394.1 760.2,408.7 760.5,388.1 760.7,410.8 760.9,387.1 761.1,410.4 761.4,388.2 761.6,419 761.8,393.3 762,411.8 762.3,398 762.5,412 762.7,383.8 762.9,410.3 763.2,388.3 763.4,403 763.6,390.4 763.8,408.2 764.1,401.1 764.3,409.7 764.5,394.3 764.7,419.4 765,390.9 765.2,411.3 765.4,393.3 765.6,415.2 765.9,398.7 766.1,426.3 766.3,398.1 766.5,408 766.8,398.5 767,411.5 767.2,391 767.4,416.3 767.7,393.9 767.9,405.3 768.1,399 768.3,411.7 768.6,386.3 768.8,412.7 769,392.9 769.2,408.8 769.5,395.1 769.7,414.6 769.9,389.2 770.1,407.6 770.4,382.1 770.6,415.7 770.8,388.8 771,410.4 771.3,391.3 771.5,417.7 771.7,396.6 771.9,409.9 772.2,395.5 772.4,413.1 772.6,381.3 772.8,408.4 773.1,396.1 773.3,409.9 773.5,393.2 773.7,414.1 774,394.9 774.2,418.5 774.4,383.4 774.6,409.6 774.9,396.3 775.1,409.7 775.3,395.7 775.5,410.2 775.8,387.8 776,409 776.2,386.6 776.4,408.5 776.7,392.3 776.9,407.4 777.1,393.6 777.3,412.8 777.6,388.4 777.8,411.5 778,391.3 778.2,407.5 778.5,392.1 778.7,405.9 778.9,383.1 779.1,412.3 779.4,394.1 779.6,412.9 779.8,398.7 780,417 780.3,390.3 780.5,410.1 780.7,388.1 780.9,403.6 781.2,395.7 781.4,418.1 781.6,399 781.8,424 782.1,388.2 782.3,414.1 782.5,399.3 782.7,419 783,400 783.2,409.2 783.4,393.8 783.6,412.4 783.9,392.8 784.1,409.8 784.3,391.1 784.5,414.5 784.8,391.8 785,421.1 785.2,397.9 785.4,419.1 785.7,388.5 785.9,415.1 786.1,389.9 786.3,411.5 786.6,392.2 786.8,407.9 787,398.1 787.2,410.8 787.5,386.5 787.7,415.6 787.9,389.9 788.1,408.5 788.4,386.4 788.6,408.3 788.8,390.8 789,421 789.3,394.4 789.5,404.8 789.7,389.9 789.9,412.7 790.2,394.7 790.4,417.3 790.6,389.8 790.8,410.2 791.1,390.4 791.3,409.4 791.5,397.9 791.7,428.9 792,394.6 792.2,410.7 792.4,390.9 792.6,408.2 792.9,396.3 793.1,416.7 793.3,387.6 793.5,407.9 793.8,397.4 794,408.5 794.2,393.2 794.4,406.9 794.7,390.3 794.9,405.7 795.1,393 795.3,409.1 795.6,396.7 795.8,412.2 796,394.3 796.2,407.8 796.5,389.8 796.7,415 796.9,383.2 797.1,416.4 797.4,388.2 797.6,411.5 797.8,394.6 798,417.9 798.3,390.4 798.5,413 798.7,398.7 798.9,409.3 799.2,394.9 799.4,413.7 799.6,392.9 799.8,409.8 800.1,400.7 800.3,406.8 800.5,391.8 800.7,406.5 801,386.8 801.2,416.1 801.4,386.8 801.6,412.5 801.9,397.1 802.1,416.3 802.3,394.4 802.5,419.3 802.8,382.1 803,404.9 803.2,396.9 803.4,412.2 803.7,384.6 803.9,412.7 804.1,391.4 804.3,409.5 804.6,393.4 804.8,411.4 805,385.7 805.2,415.2 805.5,396.5 805.7,413.7 805.9,398.5 806.1,416 806.4,394 806.6,411.6 806.8,384.5 807,414.9 807.3,385 807.5,410.2 807.7,392 807.9,406.6 808.2,393.1 808.4,412.2 808.6,389.4 808.8,409.6 809.1,389.3 809.3,420.4 809.5,383.6 809.7,413.6 810,390.3 810.2,408.5 810.4,389.5 810.6,414.9 810.9,391.9 811.1,413.5 811.3,390 811.5,413.2 811.8,397.2 812,409.7 812.2,391.4 812.4,411.6 812.7,395.9 812.9,412.9 813.1,394.4 813.3,416 813.6,391.9 813.8,411.9 814,393.6 814.2,412.2 814.5,395.4 814.7,404.6 814.9,392.7 815.1,414.9 815.4,396.2 815.6,419.4 815.8,396.1 816,417.7 816.3,394.4 816.5,422.2 816.7,391.9 816.9,415.1 817.2,384.9 817.4,405.4 817.6,392.3 817.8,413 818.1,383 818.3,412.2 818.5,383.6 818.7,410.5 819,388.8 819.2,406.4 819.4,394.1 819.6,416 819.9,387.5 820.1,414.4 820.3,396.5 820.5,409.1 820.8,389.6 821,412.2 821.2,391.2 821.4,406.8 821.7,396.1 821.9,403.5 822.1,392.3 822.3,424.1 822.6,399.1 822.8,418.7 823,390.4 823.2,416.5 823.5,395.8 823.7,410.3 823.9,392.1 824.1,408 824.4,389.6 824.6,411.5 824.8,395.2 825,414.9 825.3,391.8 825.5,414.6 825.7,387.1 825.9,419.6 826.2,392.3 826.4,411.2 826.6,393.3 826.8,421.9 827.1,396.4 827.3,418.5 827.5,392.9 827.7,408.2 828,392 828.2,410 828.4,398.9 828.6,413.1 828.9,399.6 829.1,407.9 829.3,393.3 829.5,412.2 829.8,394.5 830,414 830.2,395.1 830.4,408.8 830.7,391.1 830.9,410.5 831.1,398.2 831.3,408.5 831.6,379.3 831.8,416.8 832,391.1 832.2,420.1 832.5,395.9 832.7,416.4 832.9,395 833.1,411.2 833.4,369.9 833.6,411.1 833.8,389.5 834,417.7 834.3,389.4 834.5,404.5 834.7,388.4 834.9,419.6 835.2,397.2 835.4,419.8 835.6,391.4 835.8,410.2 836.1,396.2 836.3,409 836.5,379.6 836.7,416.1 837,393.1 837.2,413 837.4,389.5 837.6,414.8 837.9,395.9 838.1,411.6 838.3,384.5 838.5,413.6 838.8,390 839,415.1 839.2,390.5 839.4,406.9 839.7,372.8 839.9,413.6 840.1,391.9 840.3,414 840.6,391.3 840.8,412.6 841,390.9 841.2,413.8 841.5,389.6 841.7,419.1 841.9,391.3 842.1,421.2 842.4,389.3 842.6,413.2 842.8,400.6 843,411.3 843.3,394.4 843.5,414.8 843.7,392.9 843.9,409.4 844.2,390.7 844.4,412.2 844.6,397.1 844.8,410.6 845.1,394.2 845.3,412 845.5,397.7 845.7,411.5 846,393.7 846.2,414.2 846.4,388.4 846.6,414 846.9,396.1 847.1,414 847.3,394 847.5,412.3 847.8,391.9 848,409.2 848.2,392.9 848.4,412.7 848.7,392.9 848.9,409.9 849.1,393.9 849.3,412.1 849.6,390.6 849.8,412.5 850,392.2 850.2,414.5 850.5,395.3 850.7,415.1 850.9,395.8 851.1,433.5 851.4,395.2 851.6,414.5 851.8,380.3 852,413.1 852.3,393.2 852.5,421.7 852.7,393.6 852.9,407.9 853.2,388.2 853.4,412 853.6,393.2 853.8,412 854.1,391.6 854.3,414.2 854.5,384.6 854.7,409.3 855,399 855.2,417.3 855.4,388.8 855.6,422.8 855.9,401.3 856.1,420.5 856.3,388.9 856.5,415.2 856.8,398.4 857,417.2 857.2,395.1 857.4,425.1 857.7,396 857.9,414.6 858.1,388.3 858.3,421.4 858.6,395.2 858.8,417.6 859,399.6 859.2,417.7 859.5,381.4 859.7,415 859.9,397 860.1,409.6 860.4,397 860.6,407.4 860.8,395.7 861,422.9 861.3,390.8 861.5,406.8 861.7,386 861.9,414.5 862.2,400.1 862.4,408.8 862.6,393.7 862.8,407.2 863.1,389 863.3,415 863.5,391.8 863.7,413.1 864,384.3 864.2,407.6 864.4,392.1 864.6,413.8 864.9,394.2 865.1,411.2 865.3,393.9 865.5,415.7 865.8,396.7 866,415.7 866.2,394.8 866.4,411.1 866.7,392.6 866.9,412.7 867.1,394.7 867.3,413 867.6,390.2 867.8,413.6 868,391.9 868.2,417.7 868.5,387.4 868.7,411.4 868.9,387.4 869.1,410.4 869.4,394.2 869.6,430.1 869.8,374.8 870,415.7 870.3,392.7 870.5,409.2 870.7,394 870.9,416.7 871.2,389.6 871.4,409.9 871.6,391.3 871.8,408.3 872.1,402.6 872.3,419.2 872.5,390.4 872.7,412.1 873,384.1 873.2,409.1 873.4,392.8 873.6,409.2 873.9,388.3 874.1,409.6 874.3,401.3 874.5,415.9 874.8,395.9 875,413.6 875.2,392.3 875.4,411.2 875.7,390.8 875.9,406.5 876.1,397.1 876.3,408.2 876.6,387.6 876.8,407.9 877,395.7 877.2,405.3 877.5,396.4 877.7,413.8 877.9,388.9 878.1,411.3 878.4,396.3 878.6,412.9 878.8,378.4 879,415.4 879.3,394.9 879.5,414.8 879.7,392.9 879.9,412.3 880.2,389.4 880.4,411.9 880.6,387.8 880.8,407 881.1,391.9 881.3,413.4 881.5,395.3 881.7,414.9 882,388.4 882.2,412.4 882.4,385.2 882.6,410.1 882.9,395.7 883.1,411.8 883.3,388.1 883.5,460.2 883.8,395.1 884,413.9 884.2,361.6 884.4,407.4 884.7,390.6 884.9,416 885.1,394.5 885.3,415.3 885.6,392.6 885.8,413.9 886,389.8 886.2,420.6 886.5,390.4 886.7,407.5 886.9,389.3 887.1,412.9 887.4,383.7 887.6,412.6 887.8,392.6 888,408.5 888.3,395.8 888.5,416.1 888.7,390.3 888.9,410.1 889.2,395.2 889.4,420.4 889.6,393.7 889.8,414 890.1,387.2 890.3,405.6 890.5,398.5 890.7,415.1 891,387.5 891.2,406.9 891.4,393.1 891.6,414.9 891.9,395.4 892.1,411 892.3,392 892.5,410.5 892.8,396.4 893,417.7 893.2,390.5 893.4,413.2 893.7,393.4 893.9,408.3 894.1,392.4 894.3,411 894.6,388.9 894.8,418 895,390.2 895.2,406.1 895.5,380.3 895.7,407.8 895.9,390.7 896.1,406.6 896.4,390.2 896.6,408.5 896.8,394.7 897,411 897.3,395.2 897.5,410.9 897.7,382.2 897.9,404.5 898.2,394.7 898.4,421.7 898.6,388.6 898.8,414.3 899.1,394.2 899.3,422.5 899.5,393.1 899.7,414.2 900,390.7 900.2,413 900.4,391.6 900.6,414.9 900.9,387.8 901.1,407.7 901.3,388.7 901.5,409.2 901.8,384.9 902,410.2 902.2,392.7 902.4,416 902.7,379.8 902.9,410.8 903.1,391.3 903.3,409.5 903.6,386.9 903.8,405.3 904,387.7 904.2,406.8 904.5,393.5 904.7,412.8 904.9,388.7 905.1,406.9 905.4,389.1 905.6,410.2 905.8,389.8 906,408.8 906.3,387.5 906.5,409.4 906.7,393.3 906.9,416.1 907.2,389.1 907.4,408.4 907.6,390.8 907.8,415.4 908.1,393.5 908.3,412.3 908.5,394 908.7,407 909,389.3 909.2,406.3 909.4,392.4 909.6,420 909.9,391.4 910.1,406.5 910.3,392.2 910.5,406.8 910.8,390.2 911,412.5 911.2,390.7 911.4,415.1 911.7,395.3 911.9,409.3 912.1,391.9 912.3,407.8 912.6,391 912.8,405.8 913,389.7 913.2,408.7 913.5,393.4 913.7,413.9 913.9,397.5 914.1,407.5 914.4,383.6 914.6,417 914.8,386.8 915,414.8 915.3,390.8 915.5,413.6 915.7,395.3 915.9,410.8 916.2,394.2 916.4,420.3 916.6,396.3 916.8,424.2 917.1,392.3 917.3,410.8 917.5,388.7 917.7,408.5 918,392.6 918.2,407.8 918.4,397.1 918.6,417.9 918.9,393.2 919.1,414.1 919.3,392.7 919.5,405.5 919.8,387.5 920,410.7 920.2,393.8 920.4,412.6 920.7,391.9 920.9,403.4 921.1,393 921.3,407 921.6,397.8 921.8,409.6 922,391.2 922.2,410.8 922.5,385.3 922.7,417.4 922.9,384.7 923.1,406.1 923.4,396.1 923.6,412 923.8,387.9 924,410.6 924.3,397.9 924.5,411.4 924.7,386.6 924.9,404.8 925.2,389.3 925.4,404.7 925.6,393.5 925.8,415.7 926.1,379.9 926.3,411.1 926.5,387.1 926.7,417.4 927,391.2 927.2,414.7 927.4,391.4 927.6,415.3 927.9,381.2 928.1,413.6 928.3,393.5 928.5,407.6 928.8,394.8 929,419.1 929.2,391.2 929.4,407.4 929.7,395.6 929.9,422.2 930.1,393.3 930.3,412.2 930.6,400.5 930.8,411.7 931,388.6 931.2,413.3 931.5,392.8 931.7,405.5 931.9,383.6 932.1,407.7 932.4,386.6 932.6,419.7 932.8,386.2 933,410.5 933.3,391.7 933.5,413 933.7,386.7 933.9,428.9 934.2,389.5 934.4,410.4 934.6,385.5 934.8,409 935.1,389.3 935.3,405.7 935.5,389 935.7,411.2 936,384.1 936.2,414.9 936.4,389.7 936.6,412.3 936.9,384.9 937.1,406.6 937.3,391 937.5,404.2 937.8,394.2 938,411 938.2,359 938.4,413.4 938.7,393.4 938.9,411.8 939.1,398.5 939.3,418.2 939.6,387.7 939.8,406.7 940,388.3 940.2,410.2 940.5,399.2 940.7,408.9 940.9,387.6 941.1,407.1 941.4,394.3 941.6,408.4 941.8,397.1 942,410.7 942.3,396.8 942.5,415.2 942.7,391.3 942.9,406.6 943.2,396.3 943.4,416.1 943.6,393.2 943.8,405.2 944.1,389.8 944.3,417.8 944.5,390.7 944.7,416.2 945,385.8 945.2,412.3 945.4,380.1 945.6,411 945.9,391.2 946.1,407.2 946.3,384.7 946.5,408.5 946.8,387.3 947,412.3 947.2,393.9 947.4,414.6 947.7,394.5 947.9,411.1 948.1,385.8 948.3,404.9 948.6,383 948.8,412.4 949,384.8 949.2,416.8 949.5,397 949.7,415.1 949.9,386.1 950.1,409.3 950.4,382.6 950.6,409.1 950.8,392.6 951,405.9 951.3,391.9 951.5,406 951.7,391.8 951.9,415 952.2,393.6 952.4,414 952.6,393 952.8,412.6 953.1,393.7 953.3,410.8 953.5,393.1 953.7,415.7 954,382.8 954.2,404.9 954.4,381.9 954.6,419.9 954.9,393.2 955.1,412.2 955.3,387.3 955.5,413.1 955.8,378.1 956,410.5 956.2,390.5 956.4,419.3 956.7,389.9 956.9,416.3 957.1,393.6 957.3,410 957.6,397.1 957.8,413.6 958,393.5 958.2,407.2 958.5,384.1 958.7,409.7 958.9,396.7 959.1,412.9 959.4,393.6 959.6,414.9 959.8,384.2 960,410.1 960.3,395.4 960.5,412.8 960.7,395.8 960.9,409 961.2,389.2 961.4,418.7 961.6,393.1 961.8,417.3 962.1,392.6 962.3,412.9 962.5,394.5 962.7,409.1 963,391.8 963.2,412.9 963.4,393.1 963.6,406.3 963.9,398 964.1,410.5 964.3,387.4 964.5,409.3 964.8,394.4 965,412 965.2,388.4 965.4,402.7 965.7,387.9 965.9,420.5 966.1,388.3 966.3,411.1 966.6,381.7 966.8,414.8 967,389.9 967.2,417.9 967.5,382.8 967.7,409.4 967.9,379.7 968.1,422.1 968.4,396.5 968.6,428.2 968.8,382.4 969,403.8 969.3,392.5 969.5,403.9 969.7,389.2 969.9,411.9 970.2,392.9 970.4,410.4 970.6,388.5 970.8,405.9 971.1,380.9 971.3,414.2 971.5,394 971.7,416.5 972,388.3 972.2,411.9 972.4,392.1 972.6,413.7 972.9,391.5 973.1,407.3 973.3,375 973.5,411.5 973.8,387.4 974,410.8 974.2,393.1 974.4,407.4 974.7,390.1 974.9,411.4 975.1,389.6 975.3,410.6 975.6,385.9 975.8,418 976,395.2 976.2,407.8 976.5,393.6 976.7,424.3 976.9,388.7 977.1,415.9 977.4,387.6 977.6,405 977.8,391.5 978,412.8 978.3,391.8 978.5,411.1 978.7,382.9 978.9,412.3 979.2,389 979.4,409.8 979.6,398 979.8,409.9 980.1,389.1 980.3,409.9 980.5,390.7 980.7,414.1 981,388.6 981.2,410.5 981.4,378.1 981.6,418.1 981.9,397.6 982.1,417.6 982.3,396.1 982.5,412.2 982.8,387.9 983,412.9 983.2,390.2 983.4,409.9 983.7,384.2 983.9,416.5 984.1,402.6 984.3,411 984.6,393.8 984.8,412.5 985,388.3 985.2,411.2 985.5,384.3 985.7,414.1 985.9,394.3 986.1,408.3 986.4,394.1 986.6,409.9 986.8,398 987,413.7 987.3,391.4 987.5,416.4 987.7,394.7 987.9,413.1 988.2,403.1 988.4,414.9" fill="none" stroke="#b4ffb4" stroke-width="0.85" stroke-linejoin="bevel"/>
<path d="M662.4 357.8 V462.1 H1001" stroke="#969696" stroke-width="1" fill="none"/>
<path d="M662.4 453.1 h2.2 M662.4 433.4 h2.2 M662.4 413.7 h2.2 M662.4 394 h2.2 M662.4 374.3 h2.2 M743.8 462.1 v-2.2 M812.2 462.1 v-2.2 M880.6 462.1 v-2.2 M949 462.1 v-2.2 " stroke="#969696" stroke-width="0.8" fill="none"/>
<path d="M675.4 462.1 v-4 " stroke="#969696" stroke-width="0.9" fill="none"/>
<path d="M709.6 462.1 v-1.6 M778 462.1 v-1.6 M846.4 462.1 v-1.6 M914.8 462.1 v-1.6 M983.2 462.1 v-1.6 " stroke="#969696" stroke-opacity="0.4" stroke-width="0.7" fill="none"/>
<text x="657.9" y="455.8" text-anchor="end" font-size="7.4" fill="#b0b0b0" font-family="Liberation Sans, Noto Sans CJK SC, sans-serif" textLength="29.5" lengthAdjust="spacingAndGlyphs">8.82e-06</text>
<text x="657.9" y="436.1" text-anchor="end" font-size="7.4" fill="#b0b0b0" font-family="Liberation Sans, Noto Sans CJK SC, sans-serif" textLength="29.5" lengthAdjust="spacingAndGlyphs">8.84e-06</text>
<text x="657.9" y="416.4" text-anchor="end" font-size="7.4" fill="#b0b0b0" font-family="Liberation Sans, Noto Sans CJK SC, sans-serif" textLength="29.5" lengthAdjust="spacingAndGlyphs">8.86e-06</text>
<text x="657.9" y="396.7" text-anchor="end" font-size="7.4" fill="#b0b0b0" font-family="Liberation Sans, Noto Sans CJK SC, sans-serif" textLength="29.5" lengthAdjust="spacingAndGlyphs">8.88e-06</text>
<text x="657.9" y="377" text-anchor="end" font-size="7.4" fill="#b0b0b0" font-family="Liberation Sans, Noto Sans CJK SC, sans-serif" textLength="25.8" lengthAdjust="spacingAndGlyphs">8.9e-06</text>
<text x="675.4" y="470.2" text-anchor="middle" font-size="7.4" fill="#b0b0b0" font-family="Liberation Sans, Noto Sans CJK SC, sans-serif" textLength="3.2" lengthAdjust="spacingAndGlyphs">0</text>
<text x="743.8" y="470.2" text-anchor="middle" font-size="7.4" fill="#b0b0b0" font-family="Liberation Sans, Noto Sans CJK SC, sans-serif" textLength="14.5" lengthAdjust="spacingAndGlyphs">2000</text>
<text x="812.2" y="470.2" text-anchor="middle" font-size="7.4" fill="#b0b0b0" font-family="Liberation Sans, Noto Sans CJK SC, sans-serif" textLength="14.5" lengthAdjust="spacingAndGlyphs">4000</text>
<text x="880.6" y="470.2" text-anchor="middle" font-size="7.4" fill="#b0b0b0" font-family="Liberation Sans, Noto Sans CJK SC, sans-serif" textLength="14.5" lengthAdjust="spacingAndGlyphs">6000</text>
<text x="949" y="470.2" text-anchor="middle" font-size="7.4" fill="#b0b0b0" font-family="Liberation Sans, Noto Sans CJK SC, sans-serif" textLength="14.5" lengthAdjust="spacingAndGlyphs">8000</text>
<g transform="translate(878.8,363.7)"><rect width="10.8" height="10.8" rx="1" fill="#e8f2fa" stroke="#5090c0" stroke-width="0.6"/><ellipse cx="5.4" cy="5.4" rx="3.4560000000000004" ry="2.3760000000000003" fill="none" stroke="#1a64a0" stroke-width="1.15"/><path d="M2.3760000000000003 8.64 L8.424000000000001 2.16" stroke="#1a64a0" stroke-width="1.15"/></g>
<text x="895.2" y="372.2" font-size="7.5" fill="#a4a4a4" font-family="Liberation Sans, Noto Sans CJK SC, sans-serif">压电陶瓷</text>
<path d="M879 383.9 h12" stroke="#b4ffb4" stroke-width="1"/>
<text x="895.2" y="386.9" font-size="7.5" fill="#a4a4a4" font-family="Liberation Sans, Noto Sans CJK SC, sans-serif">衰荡时间</text>
<g transform="translate(878.8,391.4)"><rect width="10.8" height="10.8" rx="1" fill="#e8f2fa" stroke="#5090c0" stroke-width="0.6"/><ellipse cx="5.4" cy="5.4" rx="3.4560000000000004" ry="2.3760000000000003" fill="none" stroke="#1a64a0" stroke-width="1.15"/><path d="M2.3760000000000003 8.64 L8.424000000000001 2.16" stroke="#1a64a0" stroke-width="1.15"/></g>
<text x="895.2" y="399.9" font-size="7.5" fill="#a4a4a4" font-family="Liberation Sans, Noto Sans CJK SC, sans-serif">压力</text>
<g transform="translate(878.8,405.1)"><rect width="10.8" height="10.8" rx="1" fill="#e8f2fa" stroke="#5090c0" stroke-width="0.6"/><ellipse cx="5.4" cy="5.4" rx="3.4560000000000004" ry="2.3760000000000003" fill="none" stroke="#1a64a0" stroke-width="1.15"/><path d="M2.3760000000000003 8.64 L8.424000000000001 2.16" stroke="#1a64a0" stroke-width="1.15"/></g>
<text x="895.2" y="413.6" font-size="7.5" fill="#a4a4a4" font-family="Liberation Sans, Noto Sans CJK SC, sans-serif">计算X偏置</text>
<g transform="translate(878.8,419.1)"><rect width="10.8" height="10.8" rx="1" fill="#e8f2fa" stroke="#5090c0" stroke-width="0.6"/><ellipse cx="5.4" cy="5.4" rx="3.4560000000000004" ry="2.3760000000000003" fill="none" stroke="#1a64a0" stroke-width="1.15"/><path d="M2.3760000000000003 8.64 L8.424000000000001 2.16" stroke="#1a64a0" stroke-width="1.15"/></g>
<text x="895.2" y="427.6" font-size="7.5" fill="#a4a4a4" font-family="Liberation Sans, Noto Sans CJK SC, sans-serif">计算Y偏置</text>
<g transform="translate(878.8,433.1)"><rect width="10.8" height="10.8" rx="1" fill="#e8f2fa" stroke="#5090c0" stroke-width="0.6"/><ellipse cx="5.4" cy="5.4" rx="3.4560000000000004" ry="2.3760000000000003" fill="none" stroke="#1a64a0" stroke-width="1.15"/><path d="M2.3760000000000003 8.64 L8.424000000000001 2.16" stroke="#1a64a0" stroke-width="1.15"/></g>
<text x="895.2" y="441.6" font-size="7.5" fill="#a4a4a4" font-family="Liberation Sans, Noto Sans CJK SC, sans-serif">衰荡标准偏差</text>
<g transform="translate(878.8,446.8)"><rect width="10.8" height="10.8" rx="1" fill="#e8f2fa" stroke="#5090c0" stroke-width="0.6"/><ellipse cx="5.4" cy="5.4" rx="3.4560000000000004" ry="2.3760000000000003" fill="none" stroke="#1a64a0" stroke-width="1.15"/><path d="M2.3760000000000003 8.64 L8.424000000000001 2.16" stroke="#1a64a0" stroke-width="1.15"/></g>
<text x="895.2" y="455.3" font-size="7.5" fill="#a4a4a4" font-family="Liberation Sans, Noto Sans CJK SC, sans-serif">浓度拟合标准偏差</text>
<clipPath id="c6b"><rect x="870" y="458" width="30" height="5"/></clipPath>
<g clip-path="url(#c6b)"><g transform="translate(879,459.5)"><rect width="10.4" height="10.4" rx="1" fill="#e8f2fa" stroke="#5090c0" stroke-width="0.6"/><ellipse cx="5.2" cy="5.2" rx="3.3280000000000003" ry="2.2880000000000003" fill="none" stroke="#1a64a0" stroke-width="1.15"/><path d="M2.2880000000000003 8.32 L8.112 2.08" stroke="#1a64a0" stroke-width="1.15"/></g></g>
<text x="425.6" y="492.4" text-anchor="middle" font-size="9.3" fill="#bcbcbc" font-family="Liberation Sans, Noto Sans CJK SC, sans-serif">算法分析</text>
<polyline points="252.5,544.7 252.7,557.1 252.9,547.4 253.2,555.3 253.4,548.3 253.6,559.9 253.8,550 254.1,554.6 254.3,549.7 254.5,558.6 254.7,550.2 255,556.6 255.2,547.9 255.4,556.1 255.6,548.2 255.9,556.2 256.1,549.5 256.3,555.5 256.5,547.6 256.8,556 257,549.6 257.2,560.2 257.4,544.6 257.7,560.5 257.9,550.6 258.1,558 258.3,540.3 258.6,560.4 258.8,549.8 259,556.7 259.2,549.3 259.5,558.8 259.7,546.9 259.9,557 260.1,549.6 260.4,555.9 260.6,548.2 260.8,555 261,549.6 261.3,559.9 261.5,549.5 261.7,556.7 261.9,546.5 262.2,558.8 262.4,550.9 262.6,558.9 262.8,548.6 263.1,556.2 263.3,548.2 263.5,558.4 263.7,548.1 264,560.2 264.2,546.9 264.4,555.6 264.6,547.7 264.9,560.2 265.1,550.8 265.3,556 265.5,545.2 265.8,553.9 266,553 266.2,555.1 266.4,549.7 266.7,558.8 266.9,548.5 267.1,558 267.3,551.1 267.6,557.2 267.8,547.7 268,559.2 268.2,547.5 268.5,555.3 268.7,549.5 268.9,563 269.1,550.5 269.4,556.9 269.6,552.8 269.8,555.4 270,547 270.3,558.5 270.5,549 270.7,558.1 270.9,548.2 271.2,559.4 271.4,550.9 271.6,555.4 271.8,552.3 272.1,557.8 272.3,546.1 272.5,555.7 272.7,550.6 273,557.8 273.2,547.3 273.4,557 273.6,551.5 273.9,558.2 274.1,546.9 274.3,556.2 274.5,547.8 274.8,559.7 275,548.8 275.2,560.1 275.4,548.2 275.7,556 275.9,549.6 276.1,558.3 276.3,546.8 276.6,558.2 276.8,548 277,556.5 277.2,549.8 277.5,556.3 277.7,547 277.9,557.2 278.1,548.1 278.4,555.9 278.6,548 278.8,559.2 279,549.9 279.3,555.6 279.5,545.3 279.7,556.2 279.9,546.5 280.2,557 280.4,549.7 280.6,556.2 280.8,549.7 281.1,561.6 281.3,551.9 281.5,559.2 281.7,548.6 282,557.3 282.2,548.8 282.4,556.3 282.6,546.2 282.9,559.4 283.1,551.2 283.3,560.6 283.5,547.8 283.8,557 284,552.5 284.2,556.5 284.4,548.9 284.7,557.8 284.9,546.7 285.1,555.5 285.3,547.9 285.6,557.2 285.8,548.6 286,554.4 286.2,550.1 286.5,556.9 286.7,546.5 286.9,559.1 287.1,549.8 287.4,557.8 287.6,549.3 287.8,558.3 288,548 288.3,560.8 288.5,546.5 288.7,561.1 288.9,549.5 289.2,557.2 289.4,547.9 289.6,554.7 289.8,548.9 290.1,555.5 290.3,549 290.5,556.9 290.7,545.9 291,553.9 291.2,547.6 291.4,557 291.6,545.4 291.9,554.7 292.1,549.6 292.3,557.6 292.5,548.8 292.8,556.9 293,548.4 293.2,560.1 293.4,547.6 293.7,555.7 293.9,549.1 294.1,553.7 294.3,549.4 294.6,558.3 294.8,547.5 295,556.5 295.2,547 295.5,555.9 295.7,546.7 295.9,556.1 296.1,545.8 296.4,561 296.6,550.4 296.8,559.9 297,545 297.3,559 297.5,548 297.7,555.3 297.9,545.9 298.2,556.7 298.4,545.5 298.6,553.4 298.8,552.4 299.1,559.2 299.3,549.5 299.5,561.1 299.7,546.8 300,558.5 300.2,548.8 300.4,556.3 300.6,547.7 300.9,558.3 301.1,550 301.3,557.3 301.5,551.6 301.8,557.3 302,550.1 302.2,559 302.4,547.7 302.7,560.4 302.9,550.4 303.1,561.6 303.3,549.7 303.6,554.9 303.8,548.5 304,554.7 304.2,545.2 304.5,558 304.7,550.3 304.9,561.9 305.1,550.6 305.4,554.9 305.6,548.3 305.8,556.9 306,548.7 306.3,555.1 306.5,542.5 306.7,558.4 306.9,549.6 307.2,557.2 307.4,550.4 307.6,557.1 307.8,546.3 308.1,557.7 308.3,548.1 308.5,553.5 308.7,545.7 309,555.1 309.2,550.4 309.4,559.1 309.6,546.2 309.9,565.8 310.1,550.5 310.3,563.4 310.5,548.5 310.8,557.9 311,546.2 311.2,561.2 311.4,549.5 311.7,557.6 311.9,549.1 312.1,558.1 312.3,550.9 312.6,558.7 312.8,548.9 313,558.4 313.2,550.7 313.5,558.1 313.7,545 313.9,558.6 314.1,552.5 314.4,559.2 314.6,547.6 314.8,556.3 315,541.8 315.3,555.5 315.5,547.3 315.7,555.3 315.9,547.6 316.2,556.7 316.4,546.2 316.6,557.9 316.8,548.6 317.1,556.3 317.3,548.3 317.5,557.3 317.7,548 318,558.6 318.2,552.7 318.4,566 318.6,543.3 318.9,556.7 319.1,549.5 319.3,556.7 319.5,548.3 319.8,555.6 320,552 320.2,559.2 320.4,551.1 320.7,561.9 320.9,544.9 321.1,560.3 321.3,548.3 321.6,556.2 321.8,552.1 322,555.2 322.2,549.8 322.5,557.8 322.7,547.4 322.9,556.7 323.1,546.1 323.4,558.6 323.6,546.6 323.8,557.4 324,546.5 324.3,559.8 324.5,549.9 324.7,557.9 324.9,547.3 325.2,562 325.4,550.1 325.6,563.3 325.8,544.1 326.1,555.4 326.3,548.4 326.5,559.2 326.7,549.8 327,558.6 327.2,548.4 327.4,556.3 327.6,548.9 327.9,559.3 328.1,552.5 328.3,556.1 328.5,551.4 328.8,556.8 329,550.4 329.2,558.1 329.4,550.6 329.7,554.7 329.9,540.1 330.1,557.8 330.3,548.7 330.6,558.4 330.8,548.4 331,555.5 331.2,549.5 331.5,558.4 331.7,550.6 331.9,558.1 332.1,547.1 332.4,557.4 332.6,550.9 332.8,558.4 333,544.6 333.3,557.8 333.5,547.8 333.7,560.4 333.9,553.6 334.2,559.2 334.4,544.2 334.6,557.4 334.8,549.8 335.1,557.4 335.3,549.5 335.5,556.2 335.7,550.5 336,557.3 336.2,550.3 336.4,557.5 336.6,544.6 336.9,556 337.1,550.5 337.3,555.8 337.5,549.1 337.8,558.8 338,549.7 338.2,558.5 338.4,549.3 338.7,561.9 338.9,547.4 339.1,561.6 339.3,548.3 339.6,557.1 339.8,547.7 340,557.8 340.2,549.6 340.5,554.8 340.7,548.1 340.9,558.3 341.1,550.9 341.4,558.5 341.6,544.8 341.8,562.6 342,551.2 342.3,557.5 342.5,549.3 342.7,558.1 342.9,545.7 343.2,557.2 343.4,549.5 343.6,559.8 343.8,548.4 344.1,558.4 344.3,544.6 344.5,557.2 344.7,552 345,555.8 345.2,547.9 345.4,561.8 345.6,550 345.9,558.8 346.1,551.2 346.3,560.7 346.5,551.5 346.8,559 347,546 347.2,558.9 347.4,549 347.7,559.5 347.9,549 348.1,558.6 348.3,546.9 348.6,555.2 348.8,550.1 349,556.3 349.2,549.8 349.5,560 349.7,549.2 349.9,557.4 350.1,550.2 350.4,558.9 350.6,547.1 350.8,559 351,548.8 351.3,557.2 351.5,548.3 351.7,559.6 351.9,547.8 352.2,559.7 352.4,549.6 352.6,557.8 352.8,546.7 353.1,560 353.3,548.3 353.5,560.1 353.7,547.5 354,557.4 354.2,549.4 354.4,558 354.6,552.7 354.9,557.6 355.1,550.2 355.3,558.2 355.5,549.4 355.8,556.4 356,550.3 356.2,558.4 356.4,546.9 356.7,558.6 356.9,549.7 357.1,556.1 357.3,548.4 357.6,557.2 357.8,548.4 358,559.6 358.2,546.8 358.5,558.3 358.7,551.1 358.9,563 359.1,547 359.4,555.2 359.6,550.5 359.8,559.1 360,545.2 360.3,557.8 360.5,547.6 360.7,556.4 360.9,550.4 361.2,558.2 361.4,548.4 361.6,556.1 361.8,552.7 362.1,559.6 362.3,547.6 362.5,555.8 362.7,545.5 363,557.1 363.2,546.6 363.4,557.7 363.6,548.4 363.9,557.3 364.1,548 364.3,563.6 364.5,545 364.8,560.5 365,550.4 365.2,558.2 365.4,548 365.7,561.7 365.9,549.6 366.1,561.4 366.3,550.1 366.6,557.2 366.8,553.5 367,558.4 367.2,545.8 367.5,556.6 367.7,548.9 367.9,559.4 368.1,549.2 368.4,560.6 368.6,552.4 368.8,558 369,548.3 369.3,558.7 369.5,547 369.7,556.8 369.9,549.3 370.2,562.5 370.4,547.2 370.6,555.7 370.8,548.1 371.1,556.3 371.3,550 371.5,555.7 371.7,548.5 372,557.6 372.2,549.3 372.4,554.3 372.6,550 372.9,557.5 373.1,548.1 373.3,557.5 373.5,548 373.8,554 374,544 374.2,558.1 374.4,550.7 374.7,562.3 374.9,546.5 375.1,559.1 375.3,549.5 375.6,557.2 375.8,551.1 376,556.7 376.2,545 376.5,554.9 376.7,550.7 376.9,556.3 377.1,548.6 377.4,557.1 377.6,546.9 377.8,556.7 378,544.8 378.3,557.8 378.5,548 378.7,558.1 378.9,548.8 379.2,555.9 379.4,550.3 379.6,560.3 379.8,546.3 380.1,558.6 380.3,548.6 380.5,557.7 380.7,548.3 381,556.9 381.2,548 381.4,558.5 381.6,551.6 381.9,558.3 382.1,549.2 382.3,556.7 382.5,547 382.8,555.4 383,548.4 383.2,557.5 383.4,549.7 383.7,554.8 383.9,549 384.1,559 384.3,545.1 384.6,558 384.8,551.2 385,556.8 385.2,548.3 385.5,555.5 385.7,548.1 385.9,554.9 386.1,547.9 386.4,554.6 386.6,549.2 386.8,554.3 387,548.6 387.3,555.2 387.5,548.6 387.7,555.1 387.9,552.2 388.2,557.1 388.4,549.5 388.6,557.8 388.8,548.6 389.1,557.3 389.3,546 389.5,555.5 389.7,550.1 390,554 390.2,545.4 390.4,555.5 390.6,544.4 390.9,557.3 391.1,550.5 391.3,557.9 391.5,549.3 391.8,555.3 392,547.1 392.2,556.1 392.4,547 392.7,557.7 392.9,549.4 393.1,554 393.3,547.2 393.6,558.6 393.8,547.8 394,556.6 394.2,546.5 394.5,557.7 394.7,547.1 394.9,557.6 395.1,547.9 395.4,558.3 395.6,546.2 395.8,557.6 396,549.4 396.3,554.8 396.5,545.8 396.7,555.5 396.9,548.3 397.2,559.2 397.4,548.9 397.6,555.5 397.8,548.1 398.1,558.7 398.3,548.2 398.5,557.5 398.7,550.9 399,558 399.2,549 399.4,555.6 399.6,546 399.9,557.2 400.1,546.8 400.3,556.4 400.5,546.6 400.8,556.7 401,547.9 401.2,557.9 401.4,547.8 401.7,558.5 401.9,547.5 402.1,556.4 402.3,550 402.6,557.1 402.8,548.3 403,554.4 403.2,547.6 403.5,555.8 403.7,548.2 403.9,559.1 404.1,548.1 404.4,555.9 404.6,545.5 404.8,556.2 405,549 405.3,556.5 405.5,549.6 405.7,558.5 405.9,551.5 406.2,558.9 406.4,549.2 406.6,556.5 406.8,550.7 407.1,558.4 407.3,547.1 407.5,554.1 407.7,550.1 408,558.6 408.2,547.6 408.4,557.1 408.6,547.8 408.9,557.1 409.1,550.9 409.3,555.6 409.5,544.4 409.8,554.1 410,551.5 410.2,556.8 410.4,548.5 410.7,556 410.9,535.7 411.1,566.5 411.3,548 411.6,560.6 411.8,549.2 412,555.8 412.2,548.8 412.5,558.8 412.7,545.9 412.9,553.1 413.1,549.4 413.4,558.3 413.6,547.1 413.8,557 414,548.8 414.3,556.3 414.5,546.5 414.7,556.1 414.9,549.6 415.2,554.8 415.4,548 415.6,555.3 415.8,549.9 416.1,561.1 416.3,548.9 416.5,558.4 416.7,549.5 417,564.1 417.2,551.1 417.4,556.6 417.6,550.9 417.9,558.8 418.1,548.6 418.3,557.5 418.5,547.3 418.8,558.7 419,550.4 419.2,556.8 419.4,549.9 419.7,560.7 419.9,548.4 420.1,558.4 420.3,549 420.6,557 420.8,546 421,557.4 421.2,545.9 421.5,555.4 421.7,548.8 421.9,555.2 422.1,547.1 422.4,556.3 422.6,548.2 422.8,559.4 423,548.9 423.3,558.1 423.5,549.6 423.7,555.3 423.9,548.8 424.2,559 424.4,547.1 424.6,557.3 424.8,547.2 425.1,561.9 425.3,547.9 425.5,558.4 425.7,549.2 426,558.4 426.2,549.7 426.4,558.3 426.6,549.7 426.9,558.2 427.1,548.4 427.3,562.3 427.5,549.7 427.8,556.7 428,548.3 428.2,557.4 428.4,547.6 428.7,555.9 428.9,547.3 429.1,561.8 429.3,543.2 429.6,559.7 429.8,550 430,558.3 430.2,548.7 430.5,556.7 430.7,542.1 430.9,561.3 431.1,546.2 431.4,557.5 431.6,550.4 431.8,556 432,548.2 432.3,559.9 432.5,550 432.7,555.7 432.9,546.8 433.2,557.4 433.4,547 433.6,559.4 433.8,549.5 434.1,556.6 434.3,550.4 434.5,557.4 434.7,548.4 435,559 435.2,542.2 435.4,560.4 435.6,549.3 435.9,556.2 436.1,551.2 436.3,556.5 436.5,550.4 436.8,556.5 437,547.3 437.2,561.9 437.4,548.7 437.7,557 437.9,546.9 438.1,559.4 438.3,552 438.6,557.2 438.8,549.1 439,559.6 439.2,547 439.5,557.4 439.7,546.9 439.9,561.1 440.1,548.1 440.4,557 440.6,551.7 440.8,561.2 441,551.5 441.3,558.8 441.5,548.9 441.7,558.5 441.9,550.1 442.2,555.4 442.4,550.3 442.6,558.7 442.8,548.9 443.1,560.7 443.3,548.7 443.5,555.3 443.7,547.3 444,560 444.2,548.3 444.4,558.9 444.6,549.2 444.9,557.6 445.1,550.8 445.3,558.5 445.5,552.6 445.8,558 446,549 446.2,557 446.4,549.6 446.7,557.9 446.9,548.2 447.1,557.7 447.3,550.2 447.6,557.6 447.8,549.6 448,557 448.2,549.9 448.5,558.8 448.7,547.6 448.9,559.6 449.1,547 449.4,560.2 449.6,549.1 449.8,561.3 450,546.1 450.3,558.1 450.5,548.1 450.7,557.1 450.9,551.5 451.2,559.6 451.4,547.7 451.6,561.1 451.8,546.3 452.1,560.3 452.3,548.6 452.5,559.4 452.7,551.5 453,562.6 453.2,538.6 453.4,557.4 453.6,544.4 453.9,558 454.1,550.5 454.3,559.2 454.5,546.2 454.8,556.5 455,548.7 455.2,559.2 455.4,549.7 455.7,556.2 455.9,549.3 456.1,555.7 456.3,548.1 456.6,559.8 456.8,550 457,561 457.2,550.2 457.5,557.4 457.7,546.4 457.9,557.2 458.1,549.7 458.4,560.1 458.6,550.6 458.8,555 459,550 459.3,558.4 459.5,549 459.7,555.3 459.9,546.8 460.2,555.1 460.4,547.7 460.6,557.2 460.8,548.9 461.1,555.1 461.3,549 461.5,558.3 461.7,548.4 462,559 462.2,550 462.4,554.2 462.6,547.4 462.9,554.6 463.1,547 463.3,559.1 463.5,546.2 463.8,556.6 464,548.1 464.2,559.6 464.4,550.7 464.7,557.6 464.9,550.5 465.1,558.3 465.3,551.4 465.6,559.4 465.8,547.2 466,556.6 466.2,547 466.5,559.2 466.7,547.5 466.9,559.6 467.1,547.8 467.4,557.3 467.6,550.6 467.8,561.9 468,545.8 468.3,559.5 468.5,547.7 468.7,559.5 468.9,551.5 469.2,560.8 469.4,546.5 469.6,555.6 469.8,548 470.1,557.7 470.3,551.2 470.5,560.5 470.7,547.5 471,554.8 471.2,552.3 471.4,556.9 471.6,549.5 471.9,559.1 472.1,551 472.3,559.6 472.5,546.8 472.8,556.3 473,539.3 473.2,560.1 473.4,548.7 473.7,557.9 473.9,546.4 474.1,558.2 474.3,543.1 474.6,563.2 474.8,551.8 475,556.7 475.2,546.5 475.5,553.4 475.7,550.2 475.9,557.8 476.1,552 476.4,557.9 476.6,550.6 476.8,557.4 477,546.5 477.3,557.9 477.5,549.7 477.7,556.1 477.9,549.3 478.2,556.8 478.4,550.1 478.6,557.3 478.8,549.9 479.1,559.3 479.3,548 479.5,558.3 479.7,549.3 480,558.8 480.2,549.7 480.4,560.6 480.6,550.4 480.9,556.9 481.1,552.6 481.3,556.4 481.5,548.6 481.8,555.2 482,546.6 482.2,558.1 482.4,548.1 482.7,560.1 482.9,545.3 483.1,561.1 483.3,548.4 483.6,557 483.8,548.5 484,557.8 484.2,548.4 484.5,559.7 484.7,546.9 484.9,554.5 485.1,548.2 485.4,559.1 485.6,547.7 485.8,557.5 486,548.1 486.3,554.8 486.5,548.6 486.7,557.2 486.9,549.6 487.2,556.7 487.4,548.1 487.6,557.3 487.8,550.9 488.1,558.1 488.3,547.3 488.5,555.6 488.7,549.2 489,559.5 489.2,543.7 489.4,555.8 489.6,549.7 489.9,560.6 490.1,548.9 490.3,556.4 490.5,545.8 490.8,555.7 491,545.4 491.2,555.2 491.4,550.5 491.7,557.6 491.9,547.5 492.1,560.2 492.3,550.1 492.6,557 492.8,551.7 493,556.9 493.2,547.9 493.5,557.5 493.7,545.7 493.9,558.8 494.1,551 494.4,557.7 494.6,542.5 494.8,562.3 495,549.1 495.3,557.9 495.5,549.4 495.7,558.2 495.9,549 496.2,556.6 496.4,548.7 496.6,559.6 496.8,548.9 497.1,554.7 497.3,544.5 497.5,556.9 497.7,548.7 498,557 498.2,549.9 498.4,558.6 498.6,549.4 498.9,555.9 499.1,549.4 499.3,557.9 499.5,548.8 499.8,561 500,548.8 500.2,554.6 500.4,549.2 500.7,555.8 500.9,548.1 501.1,558.5 501.3,548.8 501.6,561.1 501.8,548.5 502,556.9 502.2,551.1 502.5,557.6 502.7,548.3 502.9,554.7 503.1,548.2 503.4,558 503.6,547.3 503.8,559.8 504,549.2 504.3,556.1 504.5,549.5 504.7,560.1 504.9,548.2 505.2,557.6 505.4,534.6 505.6,557.6 505.8,548.2 506.1,558.7 506.3,549 506.5,563.8 506.7,546.1 507,557.4 507.2,545 507.4,556.1 507.6,549.3 507.9,554.6 508.1,549 508.3,558.6 508.5,548.1 508.8,557.4 509,547.9 509.2,557.4 509.4,545.4 509.7,557.9 509.9,547.1 510.1,557.6 510.3,548.1 510.6,554.5 510.8,547.3 511,556.8 511.2,547.8 511.5,555.9 511.7,545.9 511.9,557.8 512.1,549 512.4,557.1 512.6,548 512.8,556.9 513,548.3 513.3,557.9 513.5,548.9 513.7,557.9 513.9,549.1 514.2,555.5 514.4,546.9 514.6,556.1 514.8,548 515.1,557.9 515.3,549.9 515.5,561.6 515.7,547.7 516,561.4 516.2,549.4 516.4,555.5 516.6,549.3 516.9,559.8 517.1,548.4 517.3,555.8 517.5,547.3 517.8,562.2 518,551.9 518.2,556.9 518.4,548.5 518.7,558.4 518.9,550.5 519.1,555.9 519.3,550.1 519.6,557.1 519.8,548.3 520,555.3 520.2,546.7 520.5,559.3 520.7,547.9 520.9,555.5 521.1,545.6 521.4,555 521.6,547.2 521.8,556.2 522,546.3 522.3,560.1 522.5,546.3 522.7,556 522.9,545.9 523.2,556.7 523.4,546.9 523.6,556.5 523.8,547.7 524.1,556.7 524.3,549.5 524.5,558.7 524.7,548.3 525,556.9 525.2,551.2 525.4,554.9 525.6,546.7 525.9,558.4 526.1,547.7 526.3,559.2 526.5,548.2 526.8,556.4 527,549 527.2,557.6 527.4,547.2 527.7,557.5 527.9,548.8 528.1,554.2 528.3,545.7 528.6,555.8 528.8,548.2 529,557.1 529.2,549.5 529.5,558 529.7,548.4 529.9,562.3 530.1,548.3 530.4,555.6 530.6,549.9 530.8,556.6 531,548.2 531.3,557.7 531.5,550 531.7,559.8 531.9,548.2 532.2,558.5 532.4,547.9 532.6,554.6 532.8,549 533.1,560.4 533.3,548.6 533.5,556.5 533.7,547.5 534,556.9 534.2,548.3 534.4,562.3 534.6,547.6 534.9,556.3 535.1,552.3 535.3,558.2 535.5,550.8 535.8,557.9 536,547.1 536.2,560 536.4,548.9 536.7,555.3 536.9,548.6 537.1,562.1 537.3,547.9 537.6,556.9 537.8,551.1 538,556.9 538.2,548.4 538.5,557.3 538.7,550.2 538.9,557.6 539.1,548 539.4,558.4 539.6,550.2 539.8,559.9 540,549.4 540.3,558.2 540.5,544.6 540.7,557 540.9,551.5 541.2,556.9 541.4,543.9 541.6,557.8 541.8,549.3 542.1,555.9 542.3,545.7 542.5,558.9 542.7,548.3 543,558.1 543.2,547 543.4,556.9 543.6,549.5 543.9,558.4 544.1,551.5 544.3,558.1 544.5,550.7 544.8,558 545,549.1 545.2,558.8 545.4,549.7 545.7,554.8 545.9,551 546.1,555.7 546.3,549.1 546.6,555.8 546.8,550 547,557.4 547.2,549.6 547.5,556.2 547.7,551 547.9,558.5 548.1,549.3 548.4,558.7 548.6,546.1 548.8,558.1 549,549.8 549.3,555.6 549.5,550 549.7,558.7 549.9,549.1 550.2,557.6 550.4,549 550.6,560.3 550.8,549.2 551.1,556.4 551.3,548.8 551.5,556.2 551.7,547.7 552,557.2 552.2,549.2 552.4,558.8 552.6,547.4 552.9,557.4 553.1,547.2 553.3,556.3 553.5,550 553.8,560.4 554,551.8 554.2,561.1 554.4,551.4 554.7,557.3 554.9,544.5 555.1,560.4 555.3,550.1 555.6,559.7 555.8,548.9 556,560.3" fill="none" stroke="#32cd32" stroke-width="0.85" stroke-linejoin="bevel"/>
<path d="M227.5 498.2 V602.8 H623.8" stroke="#969696" stroke-width="1" fill="none"/>
<path d="M318.8 602.8 v-2.2 M385.1 602.8 v-2.2 M451.5 602.8 v-2.2 M517.8 602.8 v-2.2 M584.1 602.8 v-2.2 " stroke="#969696" stroke-width="0.8" fill="none"/>
<path d="M252.5 602.8 v-4 " stroke="#969696" stroke-width="0.9" fill="none"/>
<path d="M285.7 602.8 v-1.6 M352 602.8 v-1.6 M418.3 602.8 v-1.6 M484.6 602.8 v-1.6 M550.9 602.8 v-1.6 M617.3 602.8 v-1.6 " stroke="#969696" stroke-opacity="0.4" stroke-width="0.7" fill="none"/>
<text x="252.5" y="610.9" text-anchor="middle" font-size="7.4" fill="#b0b0b0" font-family="Liberation Sans, Noto Sans CJK SC, sans-serif" textLength="3.2" lengthAdjust="spacingAndGlyphs">0</text>
<text x="318.8" y="610.9" text-anchor="middle" font-size="7.4" fill="#b0b0b0" font-family="Liberation Sans, Noto Sans CJK SC, sans-serif" textLength="14.5" lengthAdjust="spacingAndGlyphs">2000</text>
<text x="385.1" y="610.9" text-anchor="middle" font-size="7.4" fill="#b0b0b0" font-family="Liberation Sans, Noto Sans CJK SC, sans-serif" textLength="14.5" lengthAdjust="spacingAndGlyphs">4000</text>
<text x="451.5" y="610.9" text-anchor="middle" font-size="7.4" fill="#b0b0b0" font-family="Liberation Sans, Noto Sans CJK SC, sans-serif" textLength="14.5" lengthAdjust="spacingAndGlyphs">6000</text>
<text x="517.8" y="610.9" text-anchor="middle" font-size="7.4" fill="#b0b0b0" font-family="Liberation Sans, Noto Sans CJK SC, sans-serif" textLength="14.5" lengthAdjust="spacingAndGlyphs">8000</text>
<text x="584.1" y="610.9" text-anchor="middle" font-size="7.4" fill="#b0b0b0" font-family="Liberation Sans, Noto Sans CJK SC, sans-serif" textLength="18.2" lengthAdjust="spacingAndGlyphs">10000</text>
<text x="223" y="600.1" text-anchor="end" font-size="7.4" fill="#b0b0b0" font-family="Liberation Sans, Noto Sans CJK SC, sans-serif" textLength="22.0" lengthAdjust="spacingAndGlyphs">0.0966</text>
<text x="223" y="589.7" text-anchor="end" font-size="7.4" fill="#b0b0b0" font-family="Liberation Sans, Noto Sans CJK SC, sans-serif" textLength="22.0" lengthAdjust="spacingAndGlyphs">0.0968</text>
<text x="223" y="579.3" text-anchor="end" font-size="7.4" fill="#b0b0b0" font-family="Liberation Sans, Noto Sans CJK SC, sans-serif" textLength="18.2" lengthAdjust="spacingAndGlyphs">0.097</text>
<text x="223" y="568.8" text-anchor="end" font-size="7.4" fill="#b0b0b0" font-family="Liberation Sans, Noto Sans CJK SC, sans-serif" textLength="22.0" lengthAdjust="spacingAndGlyphs">0.0972</text>
<text x="223" y="558.4" text-anchor="end" font-size="7.4" fill="#b0b0b0" font-family="Liberation Sans, Noto Sans CJK SC, sans-serif" textLength="22.0" lengthAdjust="spacingAndGlyphs">0.0974</text>
<text x="223" y="548" text-anchor="end" font-size="7.4" fill="#b0b0b0" font-family="Liberation Sans, Noto Sans CJK SC, sans-serif" textLength="22.0" lengthAdjust="spacingAndGlyphs">0.0976</text>
<text x="223" y="537.5" text-anchor="end" font-size="7.4" fill="#b0b0b0" font-family="Liberation Sans, Noto Sans CJK SC, sans-serif" textLength="22.0" lengthAdjust="spacingAndGlyphs">0.0978</text>
<text x="223" y="527.1" text-anchor="end" font-size="7.4" fill="#b0b0b0" font-family="Liberation Sans, Noto Sans CJK SC, sans-serif" textLength="18.2" lengthAdjust="spacingAndGlyphs">0.098</text>
<text x="223" y="516.7" text-anchor="end" font-size="7.4" fill="#b0b0b0" font-family="Liberation Sans, Noto Sans CJK SC, sans-serif" textLength="22.0" lengthAdjust="spacingAndGlyphs">0.0982</text>
<text x="223" y="506.2" text-anchor="end" font-size="7.4" fill="#b0b0b0" font-family="Liberation Sans, Noto Sans CJK SC, sans-serif" textLength="22.0" lengthAdjust="spacingAndGlyphs">0.0984</text>
<path d="M227.5 524.4 h4" stroke="#969696" stroke-width="0.9"/>
<g transform="translate(533.5,507.3)"><rect width="11" height="11" rx="1" fill="#e8f2fa" stroke="#5090c0" stroke-width="0.6"/><ellipse cx="5.5" cy="5.5" rx="3.52" ry="2.42" fill="none" stroke="#1a64a0" stroke-width="1.15"/><path d="M2.42 8.8 L8.58 2.2" stroke="#1a64a0" stroke-width="1.15"/></g>
<text x="549.6" y="515.9" font-size="7.5" fill="#a4a4a4" font-family="Liberation Sans, Noto Sans CJK SC, sans-serif">吸收参考归一化A</text>
<g transform="translate(533.5,521.6)"><rect width="11" height="11" rx="1" fill="#e8f2fa" stroke="#5090c0" stroke-width="0.6"/><ellipse cx="5.5" cy="5.5" rx="3.52" ry="2.42" fill="none" stroke="#1a64a0" stroke-width="1.15"/><path d="M2.42 8.8 L8.58 2.2" stroke="#1a64a0" stroke-width="1.15"/></g>
<text x="549.6" y="530.2" font-size="7.5" fill="#a4a4a4" font-family="Liberation Sans, Noto Sans CJK SC, sans-serif">吸收参考归一化B</text>
<g transform="translate(533.5,535.6)"><rect width="11" height="11" rx="1" fill="#e8f2fa" stroke="#5090c0" stroke-width="0.6"/><ellipse cx="5.5" cy="5.5" rx="3.52" ry="2.42" fill="none" stroke="#1a64a0" stroke-width="1.15"/><path d="M2.42 8.8 L8.58 2.2" stroke="#1a64a0" stroke-width="1.15"/></g>
<text x="549.6" y="544.2" font-size="7.5" fill="#a4a4a4" font-family="Liberation Sans, Noto Sans CJK SC, sans-serif">吸收峰最高点</text>
<g transform="translate(533.5,549.2)"><rect width="11" height="11" rx="1" fill="#e8f2fa" stroke="#5090c0" stroke-width="0.6"/><ellipse cx="5.5" cy="5.5" rx="3.52" ry="2.42" fill="none" stroke="#1a64a0" stroke-width="1.15"/><path d="M2.42 8.8 L8.58 2.2" stroke="#1a64a0" stroke-width="1.15"/></g>
<text x="549.6" y="557.8" font-size="7.5" fill="#a4a4a4" font-family="Liberation Sans, Noto Sans CJK SC, sans-serif">吸收峰最高点平均</text>
<path d="M533.8 569.1 h12" stroke="#32cd32" stroke-width="1"/>
<text x="549.6" y="572.1" font-size="7.5" fill="#a4a4a4" font-family="Liberation Sans, Noto Sans CJK SC, sans-serif">吸收腔电流</text>
<g transform="translate(533.5,577.1)"><rect width="11" height="11" rx="1" fill="#e8f2fa" stroke="#5090c0" stroke-width="0.6"/><ellipse cx="5.5" cy="5.5" rx="3.52" ry="2.42" fill="none" stroke="#1a64a0" stroke-width="1.15"/><path d="M2.42 8.8 L8.58 2.2" stroke="#1a64a0" stroke-width="1.15"/></g>
<text x="549.6" y="585.7" font-size="7.5" fill="#a4a4a4" font-family="Liberation Sans, Noto Sans CJK SC, sans-serif">腔膜电流最小值</text>
<g transform="translate(533.5,590.7)"><rect width="11" height="11" rx="1" fill="#e8f2fa" stroke="#5090c0" stroke-width="0.6"/><ellipse cx="5.5" cy="5.5" rx="3.52" ry="2.42" fill="none" stroke="#1a64a0" stroke-width="1.15"/><path d="M2.42 8.8 L8.58 2.2" stroke="#1a64a0" stroke-width="1.15"/></g>
<text x="549.6" y="599.3" font-size="7.5" fill="#a4a4a4" font-family="Liberation Sans, Noto Sans CJK SC, sans-serif">激光器温度</text>
<text x="822" y="492.5" text-anchor="middle" font-size="9.3" fill="#bcbcbc" font-family="Liberation Sans, Noto Sans CJK SC, sans-serif">温度监控</text>
<path d="M643.5 498.5 V603 H1000.5" stroke="#969696" stroke-width="1" fill="none"/>
<path d="M643.5 582.1 h2.2 M643.5 561.2 h2.2 M643.5 540.3 h2.2 M643.5 519.4 h2.2 M714.9 603 v-2.2 M786.3 603 v-2.2 M857.7 603 v-2.2 M929.1 603 v-2.2 " stroke="#969696" stroke-width="0.8" fill="none"/>
<path d="M643.5 603 h4 M643.5 498.5 h4 M643.5 603 v-4 M1000.5 603 v-4 " stroke="#969696" stroke-width="0.9" fill="none"/>
<path d="M643.5 592.5 h1.6 M643.5 571.6 h1.6 M643.5 550.8 h1.6 M643.5 529.9 h1.6 M643.5 508.9 h1.6 M679.2 603 v-1.6 M750.6 603 v-1.6 M822 603 v-1.6 M893.4 603 v-1.6 M964.8 603 v-1.6 " stroke="#969696" stroke-opacity="0.4" stroke-width="0.7" fill="none"/>
<text x="639.0" y="605.7" text-anchor="end" font-size="7.4" fill="#b0b0b0" font-family="Liberation Sans, Noto Sans CJK SC, sans-serif" textLength="3.2" lengthAdjust="spacingAndGlyphs">0</text>
<text x="639.0" y="584.8" text-anchor="end" font-size="7.4" fill="#b0b0b0" font-family="Liberation Sans, Noto Sans CJK SC, sans-serif" textLength="10.8" lengthAdjust="spacingAndGlyphs">0.2</text>
<text x="639.0" y="563.9" text-anchor="end" font-size="7.4" fill="#b0b0b0" font-family="Liberation Sans, Noto Sans CJK SC, sans-serif" textLength="10.8" lengthAdjust="spacingAndGlyphs">0.4</text>
<text x="639.0" y="543" text-anchor="end" font-size="7.4" fill="#b0b0b0" font-family="Liberation Sans, Noto Sans CJK SC, sans-serif" textLength="10.8" lengthAdjust="spacingAndGlyphs">0.6</text>
<text x="639.0" y="522.1" text-anchor="end" font-size="7.4" fill="#b0b0b0" font-family="Liberation Sans, Noto Sans CJK SC, sans-serif" textLength="10.8" lengthAdjust="spacingAndGlyphs">0.8</text>
<text x="639.0" y="501.2" text-anchor="end" font-size="7.4" fill="#b0b0b0" font-family="Liberation Sans, Noto Sans CJK SC, sans-serif" textLength="3.2" lengthAdjust="spacingAndGlyphs">1</text>
<text x="643.5" y="611.1" text-anchor="middle" font-size="7.4" fill="#b0b0b0" font-family="Liberation Sans, Noto Sans CJK SC, sans-serif" textLength="3.2" lengthAdjust="spacingAndGlyphs">0</text>
<text x="714.9" y="611.1" text-anchor="middle" font-size="7.4" fill="#b0b0b0" font-family="Liberation Sans, Noto Sans CJK SC, sans-serif" textLength="10.8" lengthAdjust="spacingAndGlyphs">0.2</text>
<text x="786.3" y="611.1" text-anchor="middle" font-size="7.4" fill="#b0b0b0" font-family="Liberation Sans, Noto Sans CJK SC, sans-serif" textLength="10.8" lengthAdjust="spacingAndGlyphs">0.4</text>
<text x="857.7" y="611.1" text-anchor="middle" font-size="7.4" fill="#b0b0b0" font-family="Liberation Sans, Noto Sans CJK SC, sans-serif" textLength="10.8" lengthAdjust="spacingAndGlyphs">0.6</text>
<text x="929.1" y="611.1" text-anchor="middle" font-size="7.4" fill="#b0b0b0" font-family="Liberation Sans, Noto Sans CJK SC, sans-serif" textLength="10.8" lengthAdjust="spacingAndGlyphs">0.8</text>
<text x="1000.5" y="611.1" text-anchor="middle" font-size="7.4" fill="#b0b0b0" font-family="Liberation Sans, Noto Sans CJK SC, sans-serif" textLength="3.2" lengthAdjust="spacingAndGlyphs">1</text></svg>
<div class="a" style="left:1012px;top:50px;width:172px;height:573px;border:1px solid #c4c4c4;border-bottom-color:#9c9c9c;box-shadow:inset 1px 1px 0 #fff,1px 1px 0 #fff"></div>
<div class="a" style="left:1018px;top:52px;width:160px;height:20px;background:#aaaaff;border-bottom:0"></div>
<div class="a" style="left:1018px;top:73px;width:160px;height:1px;background:#a8a8a8"></div>
<div class="a" style="left:1018px;top:53.5px;width:160px;height:20px;line-height:20px;text-align:center;font-size:16px;white-space:nowrap;font-family:'Liberation Mono','Noto Serif CJK SC',serif;letter-spacing:0px"><span style="letter-spacing:-1.2px">CO2 / </span><span style="letter-spacing:2px">控制板</span></div>
<div class="a cb" style="left:1018px;top:78.6px"><svg class="a" style="left:-1px;top:-1px;overflow:visible" width="8" height="8" viewBox="0 0 8 8"><path d="M1.5 3.9 L3.2 6 L6.6 1.6" fill="none" stroke="#333" stroke-width="0.8"/></svg></div>
<div class="a cbt" style="left:1030.2px;top:77.1px">第一行</div>
<div class="a cb" style="left:1072px;top:78.6px"><svg class="a" style="left:-1px;top:-1px;overflow:visible" width="8" height="8" viewBox="0 0 8 8"><path d="M1.5 3.9 L3.2 6 L6.6 1.6" fill="none" stroke="#333" stroke-width="0.8"/></svg></div>
<div class="a cbt" style="left:1084px;top:77.1px">第二行</div>
<div class="a cb" style="left:1125.3px;top:78.6px"><svg class="a" style="left:-1px;top:-1px;overflow:visible" width="8" height="8" viewBox="0 0 8 8"><path d="M1.5 3.9 L3.2 6 L6.6 1.6" fill="none" stroke="#333" stroke-width="0.8"/></svg></div>
<div class="a cbt" style="left:1137.6px;top:77.1px">第三行</div>
<div class="a cb" style="left:1018px;top:92.4px"><svg class="a" style="left:-1px;top:-1px;overflow:visible" width="8" height="8" viewBox="0 0 8 8"><path d="M1.5 3.9 L3.2 6 L6.6 1.6" fill="none" stroke="#333" stroke-width="0.8"/></svg></div>
<div class="a cbt" style="left:1030.2px;top:90.9px">第一列</div>
<div class="a cb" style="left:1072px;top:92.4px"><svg class="a" style="left:-1px;top:-1px;overflow:visible" width="8" height="8" viewBox="0 0 8 8"><path d="M1.5 3.9 L3.2 6 L6.6 1.6" fill="none" stroke="#333" stroke-width="0.8"/></svg></div>
<div class="a cbt" style="left:1084px;top:90.9px">第二列</div>
<div class="a cb" style="left:1125.3px;top:92.4px"></div>
<div class="a cbt" style="left:1137.6px;top:90.9px">第四行</div>
<div class="a cb" style="left:1018px;top:125.4px"></div>
<div class="a" style="left:1030.5px;top:102px;height:56px;line-height:56px;font-size:46px;color:#aaff7f;white-space:nowrap;font-family:'Liberation Sans','Noto Sans CJK SC',sans-serif"><span style="display:inline-block;transform:scaleX(0.8);transform-origin:0 50%;width:24px;margin-left:-1.5px">X</span><span style="display:inline-block;transform:scaleX(1.1);transform-origin:0 50%;margin-left:-0.5px">轴</span></div>
<div class="a cb" style="left:1018px;top:180px"><svg class="a" style="left:-1px;top:-1px;overflow:visible" width="8" height="8" viewBox="0 0 8 8"><path d="M1.5 3.9 L3.2 6 L6.6 1.6" fill="none" stroke="#333" stroke-width="0.8"/></svg></div>
<div class="a" style="left:1030.5px;top:156.5px;height:56px;line-height:56px;font-size:46px;color:#f55a08;white-space:nowrap;font-family:'Liberation Sans','Noto Sans CJK SC',sans-serif"><span style="display:inline-block;transform:scaleX(0.8);transform-origin:0 50%;width:24px;margin-left:-1.5px">Y</span><span style="display:inline-block;transform:scaleX(1.1);transform-origin:0 50%;margin-left:-0.5px">轴</span></div>
<div class="a" style="left:1018px;top:213px;width:160px;height:140.5px;border:1px solid #828790;background:#fff"></div>
<div class="a" style="left:1021px;top:216px;font-size:7.5px;line-height:9.3px;white-space:nowrap">衰荡或浓度拟合标准差不符合<br>衰荡或浓度拟合标准差不符合</div>
<div class="a cb" style="left:1018px;top:359.5px"><svg class="a" style="left:-1px;top:-1px;overflow:visible" width="8" height="8" viewBox="0 0 8 8"><path d="M1.5 3.9 L3.2 6 L6.6 1.6" fill="none" stroke="#333" stroke-width="0.8"/></svg></div>
<div class="a cbt" style="left:1030px;top:358px">奇膜</div>
<div class="a cb" style="left:1100.6px;top:359.5px"></div>
<div class="a cbt" style="left:1112px;top:358px">偶膜</div>
<div class="a cb" style="left:1018px;top:376.2px"><svg class="a" style="left:-1px;top:-1px;overflow:visible" width="8" height="8" viewBox="0 0 8 8"><path d="M1.5 3.9 L3.2 6 L6.6 1.6" fill="none" stroke="#333" stroke-width="0.8"/></svg></div>
<div class="a cbt" style="left:1030px;top:374.7px">背景<span style="padding:0 0.8px">-</span>吸收普</div>
<div class="a fl" style="left:1018px;top:395.4px">压电陶瓷电压</div>
<div class="a inp" style="left:1067px;top:395.2px;width:49.2px"></div>
<div class="a fu" style="right:58px;top:395.4px">V</div>
<div class="a btn" style="left:1141px;top:390.4px;width:36px;height:20.4px;line-height:20.4px">设置</div>
<div class="a fl" style="left:1018px;top:418.71999999999997px">衰荡中断电压</div>
<div class="a inp" style="left:1064.2px;top:418.52px;width:49.6px"></div>
<div class="a fu" style="right:58px;top:418.71999999999997px">V</div>
<div class="a btn" style="left:1141px;top:413.71999999999997px;width:36px;height:20.4px;line-height:20.4px">设置</div>
<div class="a fl" style="left:1030px;top:442.03999999999996px">泵电压</div>
<div class="a inp" style="left:1053.8px;top:441.84px;width:50px"></div>
<div class="a fu" style="right:58px;top:442.03999999999996px">V</div>
<div class="a btn" style="left:1141px;top:437.03999999999996px;width:36px;height:20.4px;line-height:20.4px">设置</div>
<div class="a fl" style="left:1022px;top:465.35999999999996px">气体温度</div>
<div class="a inp" style="left:1053.8px;top:465.15999999999997px;width:50px">35.0</div>
<div class="a fu" style="right:58px;top:465.35999999999996px">V</div>
<div class="a btn" style="left:1141px;top:460.35999999999996px;width:36px;height:20.4px;line-height:20.4px">设置</div>
<div class="a fl" style="left:1022px;top:488.67999999999995px">气体压力</div>
<div class="a inp" style="left:1053.8px;top:488.47999999999996px;width:50px">250.0</div>
<div class="a fu" style="right:58px;top:488.67999999999995px">mBar</div>
<div class="a btn" style="left:1141px;top:483.67999999999995px;width:36px;height:20.4px;line-height:20.4px">设置</div>
<div class="a fl" style="left:1022px;top:511.99999999999994px">衰荡时间</div>
<div class="a inp" style="left:1053.8px;top:511.79999999999995px;width:50px">8.87</div>
<div class="a fu" style="right:58px;top:511.99999999999994px">10-6秒</div>
<div class="a btn" style="left:1141px;top:506.99999999999994px;width:36px;height:20.4px;line-height:20.4px">设置</div>
<div class="a fl" style="left:1022px;top:535.3199999999999px">自由频谱</div>
<div class="a inp" style="left:1053.8px;top:535.1199999999999px;width:50px">500.0</div>
<div class="a fu" style="right:58px;top:535.3199999999999px">MHz</div>
<div class="a btn" style="left:1141px;top:530.3199999999999px;width:36px;height:20.4px;line-height:20.4px">设置</div>
<div class="a btn" style="left:1018.6px;top:552.9px;width:78.1px;height:20.9px;line-height:21.4px">开始调峰</div>
<div class="a btn" style="left:1099.4px;top:552.9px;width:78.1px;height:20.9px;line-height:21.4px">停止调峰</div>
<div class="a btn dis" style="left:1018.6px;top:576.0px;width:78.1px;height:20.9px;line-height:21.4px">开始压电陶瓷调整</div>
<div class="a btn" style="left:1099.4px;top:576.0px;width:78.1px;height:20.9px;line-height:21.4px">停止压电陶瓷调整</div>
<div class="a btn dis" style="left:1018.6px;top:599.3px;width:78.1px;height:20.9px;line-height:21.4px">开始</div>
<div class="a btn" style="left:1099.4px;top:599.3px;width:78.1px;height:20.9px;line-height:21.4px">停止</div>
</div></body></html>
